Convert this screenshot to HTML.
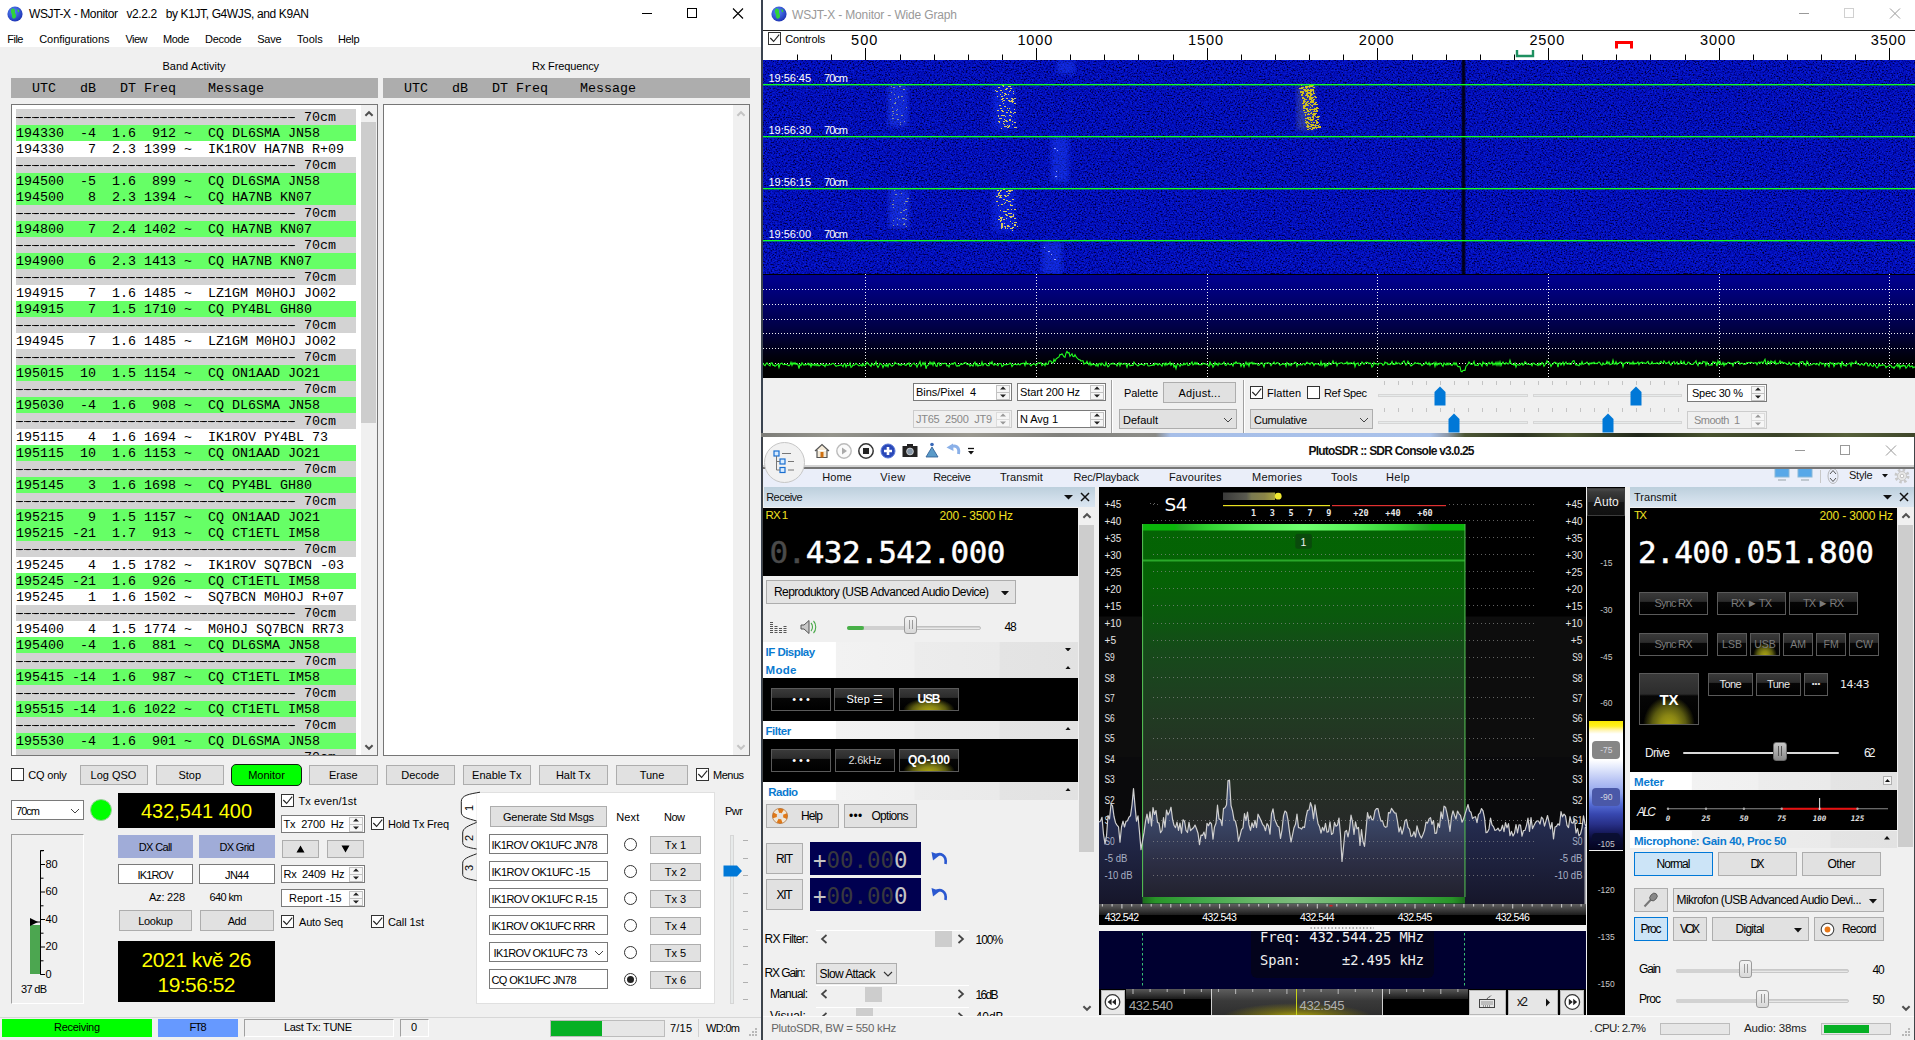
<!DOCTYPE html><html><head><meta charset="utf-8"><title>WSJT-X / SDR Console</title><style>html,body{margin:0;padding:0;background:#1a2a1a;}
#root{position:relative;width:1915px;height:1040px;overflow:hidden;background:#6b7a5a;font-family:"Liberation Sans",sans-serif;}
#root div,#root svg{position:absolute;}
.t{white-space:pre;}
.mono{font-family:"Liberation Mono",monospace;}
</style></head><body><div id="root">
<div style="left:0px;top:0px;width:761px;height:1040px;background:#f0f0f0;"></div>
<div style="left:0px;top:0px;width:761px;height:47px;background:#fff;"></div>
<svg style="left:7px;top:6px" width="16" height="16" viewBox="0 0 16 16"><defs><radialGradient id="gl7" cx="0.4" cy="0.35" r="0.7"><stop offset="0" stop-color="#5a8cff"/><stop offset="1" stop-color="#1a2fb0"/></radialGradient></defs><circle cx="8" cy="8" r="7.6" fill="url(#gl7)"/><path d="M5 2.5 C7 2 8.5 3.5 8 5.5 C7.5 7.5 9.5 8 9 10.5 C8.6 12.5 6.5 13.5 5.5 12 C4.5 10.5 5.5 9 4.5 7.5 C3.6 6 3.5 3.5 5 2.5Z" fill="#2fd23a"/><path d="M10.5 3 C12 3.5 12.8 5 12 6 C11.2 6.8 10.3 5.5 10.5 3Z" fill="#2fd23a"/></svg>
<div class="t" style="left:29.00px;top:6.00px;line-height:16px;font-size:12px;color:#000;font-family:'Liberation Sans',sans-serif;letter-spacing:-0.381px;">WSJT-X - Monitor   v2.2.2   by K1JT, G4WJS, and K9AN</div>
<svg style="left:630px;top:0" width="131" height="30"><path d="M12 13.5 H22" stroke="#000" stroke-width="1" fill="none"/><rect x="57.5" y="8.5" width="9" height="9" fill="none" stroke="#000" stroke-width="1"/><path d="M103 8.5 L113 18.5 M113 8.5 L103 18.5" stroke="#000" stroke-width="1.1" fill="none"/></svg>
<div class="t" style="left:7.30px;top:32.20px;line-height:14px;font-size:11px;color:#000;font-family:'Liberation Sans',sans-serif;letter-spacing:-0.542px;">File</div>
<div class="t" style="left:39.20px;top:32.20px;line-height:14px;font-size:11px;color:#000;font-family:'Liberation Sans',sans-serif;letter-spacing:-0.049px;">Configurations</div>
<div class="t" style="left:125.60px;top:32.20px;line-height:14px;font-size:11px;color:#000;font-family:'Liberation Sans',sans-serif;letter-spacing:-0.615px;">View</div>
<div class="t" style="left:163.00px;top:32.20px;line-height:14px;font-size:11px;color:#000;font-family:'Liberation Sans',sans-serif;letter-spacing:-0.372px;">Mode</div>
<div class="t" style="left:205.00px;top:32.20px;line-height:14px;font-size:11px;color:#000;font-family:'Liberation Sans',sans-serif;letter-spacing:-0.283px;">Decode</div>
<div class="t" style="left:257.30px;top:32.20px;line-height:14px;font-size:11px;color:#000;font-family:'Liberation Sans',sans-serif;letter-spacing:-0.291px;">Save</div>
<div class="t" style="left:297.00px;top:32.20px;line-height:14px;font-size:11px;color:#000;font-family:'Liberation Sans',sans-serif;letter-spacing:0.005px;">Tools</div>
<div class="t" style="left:338.00px;top:32.20px;line-height:14px;font-size:11px;color:#000;font-family:'Liberation Sans',sans-serif;letter-spacing:-0.374px;">Help</div>
<div class="t" style="left:162.50px;top:59.00px;line-height:14px;font-size:11px;color:#000;font-family:'Liberation Sans',sans-serif;letter-spacing:0.002px;">Band Activity</div>
<div class="t" style="left:532.00px;top:59.00px;line-height:14px;font-size:11px;color:#000;font-family:'Liberation Sans',sans-serif;letter-spacing:-0.134px;">Rx Frequency</div>
<div style="left:11px;top:78px;width:367px;height:20px;background:#adadad;"></div>
<div class="t mono" style="left:16px;top:81px;line-height:16px;font-size:13.33px;color:#000;">  UTC   dB   DT Freq    Message</div>
<div style="left:383px;top:78px;width:367px;height:20px;background:#adadad;"></div>
<div class="t mono" style="left:388px;top:81px;line-height:16px;font-size:13.33px;color:#000;">  UTC   dB   DT Freq    Message</div>
<div style="left:11px;top:104px;width:367px;height:652px;background:#fff;border:1px solid #767676;box-sizing:border-box;"></div>
<div style="left:383px;top:104px;width:367px;height:652px;background:#fff;border:1px solid #767676;box-sizing:border-box;"></div>
<div style="left:12px;top:105px;width:348px;height:650px;overflow:hidden;">
<div class="t mono" style="left:4px;top:4px;width:340px;height:16px;line-height:17px;font-size:13.33px;background:repeating-linear-gradient(90deg,#2a2a2a 0,#2a2a2a 7.2px,transparent 7.2px,transparent 8px) no-repeat 0.4px 8px / 279.4px 1px, #d3d3d3;color:#000;">----------------------------------- 70cm</div>
<div class="t mono" style="left:4px;top:20px;width:340px;height:16px;line-height:17px;font-size:13.33px;background:#66ff66;color:#000;">194330  -4  1.6  912 ~  CQ DL6SMA JN58</div>
<div class="t mono" style="left:4px;top:36px;width:340px;height:16px;line-height:17px;font-size:13.33px;background:#fff;color:#000;">194330   7  2.3 1399 ~  IK1ROV HA7NB R+09</div>
<div class="t mono" style="left:4px;top:52px;width:340px;height:16px;line-height:17px;font-size:13.33px;background:repeating-linear-gradient(90deg,#2a2a2a 0,#2a2a2a 7.2px,transparent 7.2px,transparent 8px) no-repeat 0.4px 8px / 279.4px 1px, #d3d3d3;color:#000;">----------------------------------- 70cm</div>
<div class="t mono" style="left:4px;top:68px;width:340px;height:16px;line-height:17px;font-size:13.33px;background:#66ff66;color:#000;">194500  -5  1.6  899 ~  CQ DL6SMA JN58</div>
<div class="t mono" style="left:4px;top:84px;width:340px;height:16px;line-height:17px;font-size:13.33px;background:#66ff66;color:#000;">194500   8  2.3 1394 ~  CQ HA7NB KN07</div>
<div class="t mono" style="left:4px;top:100px;width:340px;height:16px;line-height:17px;font-size:13.33px;background:repeating-linear-gradient(90deg,#2a2a2a 0,#2a2a2a 7.2px,transparent 7.2px,transparent 8px) no-repeat 0.4px 8px / 279.4px 1px, #d3d3d3;color:#000;">----------------------------------- 70cm</div>
<div class="t mono" style="left:4px;top:116px;width:340px;height:16px;line-height:17px;font-size:13.33px;background:#66ff66;color:#000;">194800   7  2.4 1402 ~  CQ HA7NB KN07</div>
<div class="t mono" style="left:4px;top:132px;width:340px;height:16px;line-height:17px;font-size:13.33px;background:repeating-linear-gradient(90deg,#2a2a2a 0,#2a2a2a 7.2px,transparent 7.2px,transparent 8px) no-repeat 0.4px 8px / 279.4px 1px, #d3d3d3;color:#000;">----------------------------------- 70cm</div>
<div class="t mono" style="left:4px;top:148px;width:340px;height:16px;line-height:17px;font-size:13.33px;background:#66ff66;color:#000;">194900   6  2.3 1413 ~  CQ HA7NB KN07</div>
<div class="t mono" style="left:4px;top:164px;width:340px;height:16px;line-height:17px;font-size:13.33px;background:repeating-linear-gradient(90deg,#2a2a2a 0,#2a2a2a 7.2px,transparent 7.2px,transparent 8px) no-repeat 0.4px 8px / 279.4px 1px, #d3d3d3;color:#000;">----------------------------------- 70cm</div>
<div class="t mono" style="left:4px;top:180px;width:340px;height:16px;line-height:17px;font-size:13.33px;background:#fff;color:#000;">194915   7  1.6 1485 ~  LZ1GM M0HOJ JO02</div>
<div class="t mono" style="left:4px;top:196px;width:340px;height:16px;line-height:17px;font-size:13.33px;background:#66ff66;color:#000;">194915   7  1.5 1710 ~  CQ PY4BL GH80</div>
<div class="t mono" style="left:4px;top:212px;width:340px;height:16px;line-height:17px;font-size:13.33px;background:repeating-linear-gradient(90deg,#2a2a2a 0,#2a2a2a 7.2px,transparent 7.2px,transparent 8px) no-repeat 0.4px 8px / 279.4px 1px, #d3d3d3;color:#000;">----------------------------------- 70cm</div>
<div class="t mono" style="left:4px;top:228px;width:340px;height:16px;line-height:17px;font-size:13.33px;background:#fff;color:#000;">194945   7  1.6 1485 ~  LZ1GM M0HOJ JO02</div>
<div class="t mono" style="left:4px;top:244px;width:340px;height:16px;line-height:17px;font-size:13.33px;background:repeating-linear-gradient(90deg,#2a2a2a 0,#2a2a2a 7.2px,transparent 7.2px,transparent 8px) no-repeat 0.4px 8px / 279.4px 1px, #d3d3d3;color:#000;">----------------------------------- 70cm</div>
<div class="t mono" style="left:4px;top:260px;width:340px;height:16px;line-height:17px;font-size:13.33px;background:#66ff66;color:#000;">195015  10  1.5 1154 ~  CQ ON1AAD JO21</div>
<div class="t mono" style="left:4px;top:276px;width:340px;height:16px;line-height:17px;font-size:13.33px;background:repeating-linear-gradient(90deg,#2a2a2a 0,#2a2a2a 7.2px,transparent 7.2px,transparent 8px) no-repeat 0.4px 8px / 279.4px 1px, #d3d3d3;color:#000;">----------------------------------- 70cm</div>
<div class="t mono" style="left:4px;top:292px;width:340px;height:16px;line-height:17px;font-size:13.33px;background:#66ff66;color:#000;">195030  -4  1.6  908 ~  CQ DL6SMA JN58</div>
<div class="t mono" style="left:4px;top:308px;width:340px;height:16px;line-height:17px;font-size:13.33px;background:repeating-linear-gradient(90deg,#2a2a2a 0,#2a2a2a 7.2px,transparent 7.2px,transparent 8px) no-repeat 0.4px 8px / 279.4px 1px, #d3d3d3;color:#000;">----------------------------------- 70cm</div>
<div class="t mono" style="left:4px;top:324px;width:340px;height:16px;line-height:17px;font-size:13.33px;background:#fff;color:#000;">195115   4  1.6 1694 ~  IK1ROV PY4BL 73</div>
<div class="t mono" style="left:4px;top:340px;width:340px;height:16px;line-height:17px;font-size:13.33px;background:#66ff66;color:#000;">195115  10  1.6 1153 ~  CQ ON1AAD JO21</div>
<div class="t mono" style="left:4px;top:356px;width:340px;height:16px;line-height:17px;font-size:13.33px;background:repeating-linear-gradient(90deg,#2a2a2a 0,#2a2a2a 7.2px,transparent 7.2px,transparent 8px) no-repeat 0.4px 8px / 279.4px 1px, #d3d3d3;color:#000;">----------------------------------- 70cm</div>
<div class="t mono" style="left:4px;top:372px;width:340px;height:16px;line-height:17px;font-size:13.33px;background:#66ff66;color:#000;">195145   3  1.6 1698 ~  CQ PY4BL GH80</div>
<div class="t mono" style="left:4px;top:388px;width:340px;height:16px;line-height:17px;font-size:13.33px;background:repeating-linear-gradient(90deg,#2a2a2a 0,#2a2a2a 7.2px,transparent 7.2px,transparent 8px) no-repeat 0.4px 8px / 279.4px 1px, #d3d3d3;color:#000;">----------------------------------- 70cm</div>
<div class="t mono" style="left:4px;top:404px;width:340px;height:16px;line-height:17px;font-size:13.33px;background:#66ff66;color:#000;">195215   9  1.5 1157 ~  CQ ON1AAD JO21</div>
<div class="t mono" style="left:4px;top:420px;width:340px;height:16px;line-height:17px;font-size:13.33px;background:#66ff66;color:#000;">195215 -21  1.7  913 ~  CQ CT1ETL IM58</div>
<div class="t mono" style="left:4px;top:436px;width:340px;height:16px;line-height:17px;font-size:13.33px;background:repeating-linear-gradient(90deg,#2a2a2a 0,#2a2a2a 7.2px,transparent 7.2px,transparent 8px) no-repeat 0.4px 8px / 279.4px 1px, #d3d3d3;color:#000;">----------------------------------- 70cm</div>
<div class="t mono" style="left:4px;top:452px;width:340px;height:16px;line-height:17px;font-size:13.33px;background:#fff;color:#000;">195245   4  1.5 1782 ~  IK1ROV SQ7BCN -03</div>
<div class="t mono" style="left:4px;top:468px;width:340px;height:16px;line-height:17px;font-size:13.33px;background:#66ff66;color:#000;">195245 -21  1.6  926 ~  CQ CT1ETL IM58</div>
<div class="t mono" style="left:4px;top:484px;width:340px;height:16px;line-height:17px;font-size:13.33px;background:#fff;color:#000;">195245   1  1.6 1502 ~  SQ7BCN M0HOJ R+07</div>
<div class="t mono" style="left:4px;top:500px;width:340px;height:16px;line-height:17px;font-size:13.33px;background:repeating-linear-gradient(90deg,#2a2a2a 0,#2a2a2a 7.2px,transparent 7.2px,transparent 8px) no-repeat 0.4px 8px / 279.4px 1px, #d3d3d3;color:#000;">----------------------------------- 70cm</div>
<div class="t mono" style="left:4px;top:516px;width:340px;height:16px;line-height:17px;font-size:13.33px;background:#fff;color:#000;">195400   4  1.5 1774 ~  M0HOJ SQ7BCN RR73</div>
<div class="t mono" style="left:4px;top:532px;width:340px;height:16px;line-height:17px;font-size:13.33px;background:#66ff66;color:#000;">195400  -4  1.6  881 ~  CQ DL6SMA JN58</div>
<div class="t mono" style="left:4px;top:548px;width:340px;height:16px;line-height:17px;font-size:13.33px;background:repeating-linear-gradient(90deg,#2a2a2a 0,#2a2a2a 7.2px,transparent 7.2px,transparent 8px) no-repeat 0.4px 8px / 279.4px 1px, #d3d3d3;color:#000;">----------------------------------- 70cm</div>
<div class="t mono" style="left:4px;top:564px;width:340px;height:16px;line-height:17px;font-size:13.33px;background:#66ff66;color:#000;">195415 -14  1.6  987 ~  CQ CT1ETL IM58</div>
<div class="t mono" style="left:4px;top:580px;width:340px;height:16px;line-height:17px;font-size:13.33px;background:repeating-linear-gradient(90deg,#2a2a2a 0,#2a2a2a 7.2px,transparent 7.2px,transparent 8px) no-repeat 0.4px 8px / 279.4px 1px, #d3d3d3;color:#000;">----------------------------------- 70cm</div>
<div class="t mono" style="left:4px;top:596px;width:340px;height:16px;line-height:17px;font-size:13.33px;background:#66ff66;color:#000;">195515 -14  1.6 1022 ~  CQ CT1ETL IM58</div>
<div class="t mono" style="left:4px;top:612px;width:340px;height:16px;line-height:17px;font-size:13.33px;background:repeating-linear-gradient(90deg,#2a2a2a 0,#2a2a2a 7.2px,transparent 7.2px,transparent 8px) no-repeat 0.4px 8px / 279.4px 1px, #d3d3d3;color:#000;">----------------------------------- 70cm</div>
<div class="t mono" style="left:4px;top:628px;width:340px;height:16px;line-height:17px;font-size:13.33px;background:#66ff66;color:#000;">195530  -4  1.6  901 ~  CQ DL6SMA JN58</div>
<div class="t mono" style="left:4px;top:644px;width:340px;height:16px;line-height:17px;font-size:13.33px;background:repeating-linear-gradient(90deg,#2a2a2a 0,#2a2a2a 7.2px,transparent 7.2px,transparent 8px) no-repeat 0.4px 8px / 279.4px 1px, #d3d3d3;color:#000;">----------------------------------- 70cm</div>
</div>
<div style="left:361px;top:105px;width:16px;height:650px;background:#f0f0f0;"></div>
<div style="left:361px;top:122px;width:15px;height:301px;background:#cdcdcd;"></div>
<svg style="left:362.5px;top:108.5px" width="12" height="10"><path d="M2.4 6.8 L6 3.2 L9.6 6.8" fill="none" stroke="#505050" stroke-width="2.0"/></svg>
<svg style="left:362.5px;top:742px" width="12" height="10"><path d="M2.4 3.2 L6 6.8 L9.6 3.2" fill="none" stroke="#505050" stroke-width="2.0"/></svg>
<div style="left:733px;top:105px;width:16px;height:650px;background:#f0f0f0;"></div>
<svg style="left:735px;top:108.5px" width="12" height="10"><path d="M2.4 6.8 L6 3.2 L9.6 6.8" fill="none" stroke="#c4c4c4" stroke-width="2.0"/></svg>
<svg style="left:735px;top:742px" width="12" height="10"><path d="M2.4 3.2 L6 6.8 L9.6 3.2" fill="none" stroke="#c4c4c4" stroke-width="2.0"/></svg>
<div style="left:11px;top:768px;width:13px;height:13px;background:#fff;border:1px solid #333;box-sizing:border-box;"></div>
<div class="t" style="left:28.30px;top:768.00px;line-height:14px;font-size:11px;color:#000;font-family:'Liberation Sans',sans-serif;letter-spacing:-0.206px;">CQ only</div>
<div style="left:79.5px;top:765px;width:68px;height:20px;background:#e1e1e1;border:1px solid #adadad;box-sizing:border-box;"></div>
<div class="t" style="left:90.57px;top:768.00px;line-height:14px;font-size:11px;color:#000;font-family:'Liberation Sans',sans-serif;">Log QSO</div>
<div style="left:156px;top:765px;width:67.5px;height:20px;background:#e1e1e1;border:1px solid #adadad;box-sizing:border-box;"></div>
<div class="t" style="left:178.44px;top:768.00px;line-height:14px;font-size:11px;color:#000;font-family:'Liberation Sans',sans-serif;">Stop</div>
<div style="left:231px;top:764px;width:71px;height:22px;background:#00ff00;border:1px solid #102010;border-radius:5px;box-sizing:border-box;"></div>
<div class="t" style="left:248.16px;top:768.00px;line-height:14px;font-size:11px;color:#000;font-family:'Liberation Sans',sans-serif;">Monitor</div>
<div style="left:309px;top:765px;width:68.5px;height:20px;background:#e1e1e1;border:1px solid #adadad;box-sizing:border-box;"></div>
<div class="t" style="left:328.88px;top:768.00px;line-height:14px;font-size:11px;color:#000;font-family:'Liberation Sans',sans-serif;">Erase</div>
<div style="left:386px;top:765px;width:68.5px;height:20px;background:#e1e1e1;border:1px solid #adadad;box-sizing:border-box;"></div>
<div class="t" style="left:401.29px;top:768.00px;line-height:14px;font-size:11px;color:#000;font-family:'Liberation Sans',sans-serif;">Decode</div>
<div style="left:463px;top:765px;width:67.5px;height:20px;background:#e1e1e1;border:1px solid #adadad;box-sizing:border-box;"></div>
<div class="t" style="left:472.09px;top:768.00px;line-height:14px;font-size:11px;color:#000;font-family:'Liberation Sans',sans-serif;">Enable Tx</div>
<div style="left:539px;top:765px;width:68.5px;height:20px;background:#e1e1e1;border:1px solid #adadad;box-sizing:border-box;"></div>
<div class="t" style="left:555.93px;top:768.00px;line-height:14px;font-size:11px;color:#000;font-family:'Liberation Sans',sans-serif;">Halt Tx</div>
<div style="left:616px;top:765px;width:72px;height:20px;background:#e1e1e1;border:1px solid #adadad;box-sizing:border-box;"></div>
<div class="t" style="left:639.67px;top:768.00px;line-height:14px;font-size:11px;color:#000;font-family:'Liberation Sans',sans-serif;">Tune</div>
<div style="left:696px;top:768px;width:13px;height:13px;background:#fff;border:1px solid #333;box-sizing:border-box;"></div>
<svg style="left:696px;top:768px" width="13" height="13" viewBox="0 0 13 13"><path d="M2.3 6 L5.6 9.5 L11.2 2.7" fill="none" stroke="#222" stroke-width="1.15"/></svg>
<div class="t" style="left:713.00px;top:768.00px;line-height:14px;font-size:11px;color:#000;font-family:'Liberation Sans',sans-serif;letter-spacing:-0.504px;">Menus</div>
<div style="left:11px;top:800px;width:73px;height:20px;background:#fff;border:1px solid #7a7a7a;box-sizing:border-box;"></div>
<div class="t" style="left:16.00px;top:803.50px;line-height:14px;font-size:11px;color:#000;font-family:'Liberation Sans',sans-serif;letter-spacing:-0.966px;">70cm</div>
<svg style="left:69px;top:806px" width="12" height="10"><path d="M2.0 3.0 L6 7.0 L10.0 3.0" fill="none" stroke="#444" stroke-width="1.0"/></svg>
<div style="left:90px;top:799px;width:22px;height:22px;background:#00ff00;border-radius:50%;border:1px solid #9ad09a;box-sizing:border-box;"></div>
<div style="left:118px;top:793px;width:157px;height:35px;background:#000;"></div>
<div class="t" style="left:141.00px;top:798.00px;line-height:26px;font-size:20px;color:#ffff00;font-family:'Liberation Sans',sans-serif;letter-spacing:-0.022px;">432,541 400</div>
<div style="left:118px;top:835px;width:75px;height:23px;background:#a0acd8;"></div>
<div class="t" style="left:138.75px;top:839.50px;line-height:14px;font-size:11px;color:#000;font-family:'Liberation Sans',sans-serif;letter-spacing:-0.631px;">DX Call</div>
<div style="left:199px;top:835px;width:76px;height:23px;background:#a0acd8;"></div>
<div class="t" style="left:219.50px;top:839.50px;line-height:14px;font-size:11px;color:#000;font-family:'Liberation Sans',sans-serif;letter-spacing:-0.686px;">DX Grid</div>
<div style="left:118px;top:864px;width:75px;height:20px;background:#fff;border:1px solid #7a7a7a;box-sizing:border-box;"></div>
<div class="t" style="left:137.50px;top:867.50px;line-height:14px;font-size:11px;color:#000;font-family:'Liberation Sans',sans-serif;letter-spacing:-0.870px;">IK1ROV</div>
<div style="left:199px;top:864px;width:76px;height:20px;background:#fff;border:1px solid #7a7a7a;box-sizing:border-box;"></div>
<div class="t" style="left:225.00px;top:867.50px;line-height:14px;font-size:11px;color:#000;font-family:'Liberation Sans',sans-serif;letter-spacing:-0.560px;">JN44</div>
<div class="t" style="left:149.00px;top:890.00px;line-height:14px;font-size:11px;color:#000;font-family:'Liberation Sans',sans-serif;letter-spacing:-0.217px;">Az: 228</div>
<div class="t" style="left:209.50px;top:890.00px;line-height:14px;font-size:11px;color:#000;font-family:'Liberation Sans',sans-serif;letter-spacing:-0.614px;">640 km</div>
<div style="left:119px;top:910px;width:73px;height:21px;background:#e1e1e1;border:1px solid #adadad;box-sizing:border-box;"></div>
<div class="t" style="left:138.25px;top:913.50px;line-height:14px;font-size:11px;color:#000;font-family:'Liberation Sans',sans-serif;letter-spacing:-0.318px;">Lookup</div>
<div style="left:200px;top:910px;width:74px;height:21px;background:#e1e1e1;border:1px solid #adadad;box-sizing:border-box;"></div>
<div class="t" style="left:227.75px;top:913.50px;line-height:14px;font-size:11px;color:#000;font-family:'Liberation Sans',sans-serif;letter-spacing:-0.536px;">Add</div>
<div style="left:118px;top:941px;width:157px;height:61px;background:#000;"></div>
<div class="t" style="left:141.50px;top:946.00px;line-height:27px;font-size:21px;color:#ffff00;font-family:'Liberation Sans',sans-serif;letter-spacing:-0.442px;">2021 kvě 26</div>
<div class="t" style="left:157.50px;top:971.00px;line-height:27px;font-size:21px;color:#ffff00;font-family:'Liberation Sans',sans-serif;letter-spacing:-0.535px;">19:56:52</div>
<div style="left:11px;top:834px;width:73px;height:170px;background:#f0f0f0;border:1px solid;border-color:#a0a0a0 #fff #fff #a0a0a0;box-sizing:border-box;"></div>
<div style="left:30px;top:925px;width:10.5px;height:49px;background:#4ca650;"></div>
<svg style="left:11px;top:834px" width="73" height="170"><path d="M33 16.5 H29.5 V140.5 H33" stroke="#000" fill="none"/><path d="M29.5 140.5 h4.5" stroke="#000"/><path d="M29.5 126.8 h3" stroke="#000"/><path d="M29.5 113.0 h4.5" stroke="#000"/><path d="M29.5 99.2 h3" stroke="#000"/><path d="M29.5 85.5 h4.5" stroke="#000"/><path d="M29.5 71.8 h3" stroke="#000"/><path d="M29.5 58.0 h4.5" stroke="#000"/><path d="M29.5 44.2 h3" stroke="#000"/><path d="M29.5 30.5 h4.5" stroke="#000"/><path d="M29.5 16.8 h3" stroke="#000"/><path d="M19 84 L27 88 L19 92Z" fill="#000"/><path d="M19 88 H29" stroke="#000"/></svg>
<div class="t" style="left:45.50px;top:966.50px;line-height:14px;font-size:11px;color:#000;font-family:'Liberation Sans',sans-serif;">0</div>
<div class="t" style="left:45.50px;top:939.00px;line-height:14px;font-size:11px;color:#000;font-family:'Liberation Sans',sans-serif;">20</div>
<div class="t" style="left:45.50px;top:911.50px;line-height:14px;font-size:11px;color:#000;font-family:'Liberation Sans',sans-serif;">40</div>
<div class="t" style="left:45.50px;top:884.00px;line-height:14px;font-size:11px;color:#000;font-family:'Liberation Sans',sans-serif;">60</div>
<div class="t" style="left:45.50px;top:856.50px;line-height:14px;font-size:11px;color:#000;font-family:'Liberation Sans',sans-serif;">80</div>
<div class="t" style="left:21.00px;top:981.50px;line-height:14px;font-size:11px;color:#000;font-family:'Liberation Sans',sans-serif;letter-spacing:-0.687px;">37 dB</div>
<div style="left:281px;top:794px;width:13px;height:13px;background:#fff;border:1px solid #333;box-sizing:border-box;"></div>
<svg style="left:281px;top:794px" width="13" height="13" viewBox="0 0 13 13"><path d="M2.3 6 L5.6 9.5 L11.2 2.7" fill="none" stroke="#222" stroke-width="1.15"/></svg>
<div class="t" style="left:298.50px;top:794.00px;line-height:14px;font-size:11px;color:#000;font-family:'Liberation Sans',sans-serif;letter-spacing:0.114px;">Tx even/1st</div>
<div style="left:281px;top:815px;width:84px;height:18px;background:#fff;border:1px solid #7a7a7a;box-sizing:border-box;"></div>
<div class="t" style="left:283.50px;top:817.00px;line-height:14px;font-size:11px;color:#000;font-family:'Liberation Sans',sans-serif;letter-spacing:-0.169px;">Tx  2700  Hz</div>
<div style="left:348.5px;top:816.5px;width:14.5px;height:15px;background:#f6f6f6;border:1px solid #c2c2c2;box-sizing:border-box;"></div>
<div style="left:349.5px;top:823.5px;width:12.5px;height:1px;background:#c2c2c2;"></div>
<svg style="left:348px;top:815px" width="16" height="18"><path d="M5 6.6 L8 3.5999999999999996 L11 6.6Z M5 11.4 L8 14.4 L11 11.4Z" fill="#222"/></svg>
<div style="left:371px;top:817px;width:13px;height:13px;background:#fff;border:1px solid #333;box-sizing:border-box;"></div>
<svg style="left:371px;top:817px" width="13" height="13" viewBox="0 0 13 13"><path d="M2.3 6 L5.6 9.5 L11.2 2.7" fill="none" stroke="#222" stroke-width="1.15"/></svg>
<div class="t" style="left:388.00px;top:816.60px;line-height:14px;font-size:11px;color:#000;font-family:'Liberation Sans',sans-serif;letter-spacing:-0.216px;">Hold Tx Freq</div>
<div style="left:282px;top:840px;width:37px;height:18px;background:#e1e1e1;border:1px solid #adadad;box-sizing:border-box;"></div>
<div style="left:327px;top:840px;width:37px;height:18px;background:#e1e1e1;border:1px solid #adadad;box-sizing:border-box;"></div>
<svg style="left:282px;top:840px" width="82" height="18"><path d="M14.5 12.5 L18.5 5.5 L22.5 12.5Z M59.5 5.5 L63.5 12.5 L67.5 5.5Z" fill="#000"/></svg>
<div style="left:281px;top:865px;width:84px;height:18px;background:#fff;border:1px solid #7a7a7a;box-sizing:border-box;"></div>
<div class="t" style="left:283.50px;top:867.00px;line-height:14px;font-size:11px;color:#000;font-family:'Liberation Sans',sans-serif;letter-spacing:-0.235px;">Rx  2409  Hz</div>
<div style="left:348.5px;top:866.5px;width:14.5px;height:15px;background:#f6f6f6;border:1px solid #c2c2c2;box-sizing:border-box;"></div>
<div style="left:349.5px;top:873.5px;width:12.5px;height:1px;background:#c2c2c2;"></div>
<svg style="left:348px;top:865px" width="16" height="18"><path d="M5 6.6 L8 3.5999999999999996 L11 6.6Z M5 11.4 L8 14.4 L11 11.4Z" fill="#222"/></svg>
<div style="left:281px;top:889px;width:84px;height:18px;background:#fff;border:1px solid #7a7a7a;box-sizing:border-box;"></div>
<div class="t" style="left:289.00px;top:891.00px;line-height:14px;font-size:11px;color:#000;font-family:'Liberation Sans',sans-serif;letter-spacing:0.059px;">Report -15</div>
<div style="left:348.5px;top:890.5px;width:14.5px;height:15px;background:#f6f6f6;border:1px solid #c2c2c2;box-sizing:border-box;"></div>
<div style="left:349.5px;top:897.5px;width:12.5px;height:1px;background:#c2c2c2;"></div>
<svg style="left:348px;top:889px" width="16" height="18"><path d="M5 6.6 L8 3.5999999999999996 L11 6.6Z M5 11.4 L8 14.4 L11 11.4Z" fill="#222"/></svg>
<div style="left:281px;top:915px;width:13px;height:13px;background:#fff;border:1px solid #333;box-sizing:border-box;"></div>
<svg style="left:281px;top:915px" width="13" height="13" viewBox="0 0 13 13"><path d="M2.3 6 L5.6 9.5 L11.2 2.7" fill="none" stroke="#222" stroke-width="1.15"/></svg>
<div class="t" style="left:299.00px;top:915.00px;line-height:14px;font-size:11px;color:#000;font-family:'Liberation Sans',sans-serif;letter-spacing:-0.180px;">Auto Seq</div>
<div style="left:371px;top:915px;width:13px;height:13px;background:#fff;border:1px solid #333;box-sizing:border-box;"></div>
<svg style="left:371px;top:915px" width="13" height="13" viewBox="0 0 13 13"><path d="M2.3 6 L5.6 9.5 L11.2 2.7" fill="none" stroke="#222" stroke-width="1.15"/></svg>
<div class="t" style="left:388.00px;top:915.00px;line-height:14px;font-size:11px;color:#000;font-family:'Liberation Sans',sans-serif;letter-spacing:-0.097px;">Call 1st</div>
<div style="left:476px;top:792px;width:239px;height:212px;background:#fff;border:1px solid #e0e0e0;box-sizing:border-box;"></div>
<svg style="left:458px;top:790px" width="22" height="94"><path d="M22 2.2 C12 4 3.3 5 3.3 11.5 V22 C3.3 27.5 10 28.5 18.6 31 V2.2Z" fill="#fff" stroke="none"/><path d="M22 2.2 C12 4 3.3 5 3.3 11.5 V22 C3.3 27.5 10 28.5 18.6 31" fill="none" stroke="#222" stroke-width="1"/><path d="M18.6 32.4 C10 36 4.7 38 4.7 43 V52.5 C4.7 56.5 10 57.5 18.6 59" fill="none" stroke="#222" stroke-width="1"/><path d="M18.6 63.8 C10 67 4.7 69 4.7 73.2 V84.3 C4.7 88 10 89 18.6 90.6" fill="none" stroke="#222" stroke-width="1"/></svg>
<div class="t" style="left:463px;top:801.7px;width:12px;height:12px;line-height:12px;font-size:11px;text-align:center;transform:rotate(-90deg);font-family:'Liberation Sans',sans-serif">1</div>
<div class="t" style="left:463px;top:831.7px;width:12px;height:12px;line-height:12px;font-size:11px;text-align:center;transform:rotate(-90deg);font-family:'Liberation Sans',sans-serif">2</div>
<div class="t" style="left:463px;top:861.7px;width:12px;height:12px;line-height:12px;font-size:11px;text-align:center;transform:rotate(-90deg);font-family:'Liberation Sans',sans-serif">3</div>
<div style="left:490px;top:806px;width:117px;height:21px;background:#e1e1e1;border:1px solid #adadad;box-sizing:border-box;"></div>
<div class="t" style="left:503.00px;top:809.50px;line-height:14px;font-size:11px;color:#000;font-family:'Liberation Sans',sans-serif;letter-spacing:-0.235px;">Generate Std Msgs</div>
<div class="t" style="left:616.20px;top:810.00px;line-height:14px;font-size:11px;color:#000;font-family:'Liberation Sans',sans-serif;letter-spacing:0.127px;">Next</div>
<div class="t" style="left:664.00px;top:810.00px;line-height:14px;font-size:11px;color:#000;font-family:'Liberation Sans',sans-serif;letter-spacing:-0.503px;">Now</div>
<div style="left:489px;top:834px;width:119px;height:20px;background:#fff;border:1px solid #7a7a7a;box-sizing:border-box;"></div>
<div class="t" style="left:491.50px;top:837.50px;line-height:14px;font-size:11px;color:#000;font-family:'Liberation Sans',sans-serif;letter-spacing:-0.633px;">IK1ROV OK1UFC JN78</div>
<div style="left:623.8px;top:838px;width:13px;height:13px;background:#fff;border:1px solid #333;border-radius:50%;box-sizing:border-box;"></div>
<div style="left:650px;top:835.5px;width:51px;height:18px;background:#e1e1e1;border:1px solid #adadad;box-sizing:border-box;"></div>
<div class="t" style="left:664.80px;top:837.50px;line-height:14px;font-size:11px;color:#000;font-family:'Liberation Sans',sans-serif;">Tx 1</div>
<div style="left:489px;top:861px;width:119px;height:20px;background:#fff;border:1px solid #7a7a7a;box-sizing:border-box;"></div>
<div class="t" style="left:491.50px;top:864.50px;line-height:14px;font-size:11px;color:#000;font-family:'Liberation Sans',sans-serif;letter-spacing:-0.499px;">IK1ROV OK1UFC -15</div>
<div style="left:623.8px;top:865px;width:13px;height:13px;background:#fff;border:1px solid #333;border-radius:50%;box-sizing:border-box;"></div>
<div style="left:650px;top:862.5px;width:51px;height:18px;background:#e1e1e1;border:1px solid #adadad;box-sizing:border-box;"></div>
<div class="t" style="left:664.80px;top:864.50px;line-height:14px;font-size:11px;color:#000;font-family:'Liberation Sans',sans-serif;">Tx 2</div>
<div style="left:489px;top:888px;width:119px;height:20px;background:#fff;border:1px solid #7a7a7a;box-sizing:border-box;"></div>
<div class="t" style="left:491.50px;top:891.50px;line-height:14px;font-size:11px;color:#000;font-family:'Liberation Sans',sans-serif;letter-spacing:-0.525px;">IK1ROV OK1UFC R-15</div>
<div style="left:623.8px;top:892px;width:13px;height:13px;background:#fff;border:1px solid #333;border-radius:50%;box-sizing:border-box;"></div>
<div style="left:650px;top:889.5px;width:51px;height:18px;background:#e1e1e1;border:1px solid #adadad;box-sizing:border-box;"></div>
<div class="t" style="left:664.80px;top:891.50px;line-height:14px;font-size:11px;color:#000;font-family:'Liberation Sans',sans-serif;">Tx 3</div>
<div style="left:489px;top:915px;width:119px;height:20px;background:#fff;border:1px solid #7a7a7a;box-sizing:border-box;"></div>
<div class="t" style="left:491.50px;top:918.50px;line-height:14px;font-size:11px;color:#000;font-family:'Liberation Sans',sans-serif;letter-spacing:-0.682px;">IK1ROV OK1UFC RRR</div>
<div style="left:623.8px;top:919px;width:13px;height:13px;background:#fff;border:1px solid #333;border-radius:50%;box-sizing:border-box;"></div>
<div style="left:650px;top:916.5px;width:51px;height:18px;background:#e1e1e1;border:1px solid #adadad;box-sizing:border-box;"></div>
<div class="t" style="left:664.80px;top:918.50px;line-height:14px;font-size:11px;color:#000;font-family:'Liberation Sans',sans-serif;">Tx 4</div>
<div style="left:489px;top:942px;width:119px;height:20px;background:#fff;border:1px solid #7a7a7a;box-sizing:border-box;"></div>
<div class="t" style="left:493.50px;top:945.50px;line-height:14px;font-size:11px;color:#000;font-family:'Liberation Sans',sans-serif;letter-spacing:-0.621px;">IK1ROV OK1UFC 73</div>
<svg style="left:593px;top:947.5px" width="12" height="10"><path d="M2.0 3.0 L6 7.0 L10.0 3.0" fill="none" stroke="#444" stroke-width="1.0"/></svg>
<div style="left:623.8px;top:946px;width:13px;height:13px;background:#fff;border:1px solid #333;border-radius:50%;box-sizing:border-box;"></div>
<div style="left:650px;top:943.5px;width:51px;height:18px;background:#e1e1e1;border:1px solid #adadad;box-sizing:border-box;"></div>
<div class="t" style="left:664.80px;top:945.50px;line-height:14px;font-size:11px;color:#000;font-family:'Liberation Sans',sans-serif;">Tx 5</div>
<div style="left:489px;top:969px;width:119px;height:20px;background:#fff;border:1px solid #7a7a7a;box-sizing:border-box;"></div>
<div class="t" style="left:491.50px;top:972.50px;line-height:14px;font-size:11px;color:#000;font-family:'Liberation Sans',sans-serif;letter-spacing:-0.608px;">CQ OK1UFC JN78</div>
<div style="left:623.8px;top:973px;width:13px;height:13px;background:#fff;border:1px solid #333;border-radius:50%;box-sizing:border-box;"></div>
<div style="left:626.8px;top:976px;width:7px;height:7px;background:#222;border-radius:50%;"></div>
<div style="left:650px;top:970.5px;width:51px;height:18px;background:#e1e1e1;border:1px solid #adadad;box-sizing:border-box;"></div>
<div class="t" style="left:664.80px;top:972.50px;line-height:14px;font-size:11px;color:#000;font-family:'Liberation Sans',sans-serif;">Tx 6</div>
<div class="t" style="left:725.00px;top:804.00px;line-height:14px;font-size:11px;color:#000;font-family:'Liberation Sans',sans-serif;letter-spacing:-0.472px;">Pwr</div>
<div style="left:730px;top:835px;width:4px;height:169px;background:#e7eaea;border:1px solid #d6d6d6;box-sizing:border-box;"></div>
<svg style="left:722px;top:864px" width="22" height="14"><path d="M1.5 1.5 H15 L20 7 L15 12.5 H1.5Z" fill="#0078d7"/></svg>
<div style="left:743px;top:840px;width:5px;height:1px;background:#b0b0b0;"></div>
<div style="left:743px;top:857.7px;width:5px;height:1px;background:#b0b0b0;"></div>
<div style="left:743px;top:875.4px;width:5px;height:1px;background:#b0b0b0;"></div>
<div style="left:743px;top:893.1px;width:5px;height:1px;background:#b0b0b0;"></div>
<div style="left:743px;top:910.8px;width:5px;height:1px;background:#b0b0b0;"></div>
<div style="left:743px;top:928.5px;width:5px;height:1px;background:#b0b0b0;"></div>
<div style="left:743px;top:946.2px;width:5px;height:1px;background:#b0b0b0;"></div>
<div style="left:743px;top:963.9px;width:5px;height:1px;background:#b0b0b0;"></div>
<div style="left:743px;top:981.6px;width:5px;height:1px;background:#b0b0b0;"></div>
<div style="left:743px;top:999.3px;width:5px;height:1px;background:#b0b0b0;"></div>
<div style="left:0px;top:1017px;width:761px;height:1px;background:#d7d7d7;"></div>
<div style="left:2px;top:1019px;width:150px;height:18px;background:#00ff00;"></div>
<div class="t" style="left:54.00px;top:1019.80px;line-height:14px;font-size:11px;color:#000;font-family:'Liberation Sans',sans-serif;letter-spacing:-0.288px;">Receiving</div>
<div style="left:158px;top:1019px;width:80px;height:18px;background:#6699ff;"></div>
<div class="t" style="left:189.50px;top:1019.80px;line-height:14px;font-size:11px;color:#000;font-family:'Liberation Sans',sans-serif;letter-spacing:-1.278px;">FT8</div>
<div style="left:244px;top:1019px;width:150px;height:18px;background:#f0f0f0;border:1px solid;border-color:#a0a0a0 #fff #fff #a0a0a0;box-sizing:border-box;"></div>
<div class="t" style="left:284.00px;top:1019.80px;line-height:14px;font-size:11px;color:#000;font-family:'Liberation Sans',sans-serif;letter-spacing:-0.310px;">Last Tx: TUNE</div>
<div style="left:400px;top:1019px;width:29px;height:18px;background:#f0f0f0;border:1px solid;border-color:#a0a0a0 #fff #fff #a0a0a0;box-sizing:border-box;"></div>
<div class="t" style="left:410.94px;top:1019.80px;line-height:14px;font-size:11px;color:#000;font-family:'Liberation Sans',sans-serif;">0</div>
<div style="left:550px;top:1020px;width:115px;height:17px;background:#e6e6e6;border:1px solid #bcbcbc;box-sizing:border-box;"></div>
<div style="left:551px;top:1021px;width:51px;height:15px;background:#06b025;"></div>
<div class="t" style="left:670.00px;top:1020.50px;line-height:14px;font-size:11px;color:#000;font-family:'Liberation Sans',sans-serif;letter-spacing:0.197px;">7/15</div>
<div style="left:698px;top:1019px;width:1px;height:18px;background:#d0d0d0;"></div>
<div class="t" style="left:706.00px;top:1020.50px;line-height:14px;font-size:11px;color:#000;font-family:'Liberation Sans',sans-serif;letter-spacing:-0.666px;">WD:0m</div>
<svg style="left:747px;top:1026px" width="12" height="12"><g fill="#b8b8b8"><rect x="8" y="2" width="2" height="2"/><rect x="5" y="5" width="2" height="2"/><rect x="8" y="5" width="2" height="2"/><rect x="2" y="8" width="2" height="2"/><rect x="5" y="8" width="2" height="2"/><rect x="8" y="8" width="2" height="2"/></g></svg>
<div style="left:761px;top:0px;width:2px;height:1040px;background:#3a4350;"></div>
<div style="left:763px;top:0px;width:1152px;height:31px;background:#fff;"></div>
<svg style="left:771px;top:6px" width="16" height="16" viewBox="0 0 16 16"><defs><radialGradient id="gl771" cx="0.4" cy="0.35" r="0.7"><stop offset="0" stop-color="#5a8cff"/><stop offset="1" stop-color="#1a2fb0"/></radialGradient></defs><circle cx="8" cy="8" r="7.6" fill="url(#gl771)"/><path d="M5 2.5 C7 2 8.5 3.5 8 5.5 C7.5 7.5 9.5 8 9 10.5 C8.6 12.5 6.5 13.5 5.5 12 C4.5 10.5 5.5 9 4.5 7.5 C3.6 6 3.5 3.5 5 2.5Z" fill="#2fd23a"/><path d="M10.5 3 C12 3.5 12.8 5 12 6 C11.2 6.8 10.3 5.5 10.5 3Z" fill="#2fd23a"/></svg>
<div class="t" style="left:792.00px;top:6.50px;line-height:16px;font-size:12px;color:#999;font-family:'Liberation Sans',sans-serif;letter-spacing:-0.156px;">WSJT-X - Monitor - Wide Graph</div>
<svg style="left:1790px;top:0" width="125" height="30"><path d="M9 13.5 H19" stroke="#999" stroke-width="1" fill="none"/><rect x="54.5" y="8.5" width="9" height="9" fill="none" stroke="#d0d0d0" stroke-width="1"/><path d="M100 8.5 L110 18.5 M110 8.5 L100 18.5" stroke="#999" stroke-width="1" fill="none"/></svg>
<div style="left:763px;top:30px;width:1152px;height:1px;background:#222;"></div>
<div style="left:763px;top:31px;width:1152px;height:29px;background:#fff;"></div>
<div style="left:768px;top:32px;width:13px;height:13px;background:#fff;border:1px solid #333;box-sizing:border-box;"></div>
<svg style="left:768px;top:32px" width="13" height="13" viewBox="0 0 13 13"><path d="M2.3 6 L5.6 9.5 L11.2 2.7" fill="none" stroke="#222" stroke-width="1.15"/></svg>
<div class="t" style="left:785.20px;top:32.30px;line-height:14px;font-size:11px;color:#000;font-family:'Liberation Sans',sans-serif;letter-spacing:-0.137px;">Controls</div>
<svg style="left:763px;top:31px" width="1152" height="29"><path d="M34.5 23.5 V29 M68.5 23.5 V29 M102.5 17 V29 M137.5 23.5 V29 M171.5 23.5 V29 M205.5 23.5 V29 M239.5 23.5 V29 M273.5 17 V29 M307.5 23.5 V29 M341.5 23.5 V29 M375.5 23.5 V29 M410.5 23.5 V29 M444.5 17 V29 M478.5 23.5 V29 M512.5 23.5 V29 M546.5 23.5 V29 M580.5 23.5 V29 M614.5 17 V29 M649.5 23.5 V29 M683.5 23.5 V29 M717.5 23.5 V29 M751.5 23.5 V29 M785.5 17 V29 M819.5 23.5 V29 M853.5 23.5 V29 M887.5 23.5 V29 M922.5 23.5 V29 M956.5 17 V29 M990.5 23.5 V29 M1024.5 23.5 V29 M1058.5 23.5 V29 M1092.5 23.5 V29 M1126.5 17 V29 " stroke="#000" stroke-width="1" fill="none"/><text x="101.2" y="14.3" font-size="14.5" text-anchor="middle" font-family="Liberation Sans,sans-serif" fill="#000" textLength="26.5">500</text><text x="271.9" y="14.3" font-size="14.5" text-anchor="middle" font-family="Liberation Sans,sans-serif" fill="#000" textLength="35">1000</text><text x="442.5" y="14.3" font-size="14.5" text-anchor="middle" font-family="Liberation Sans,sans-serif" fill="#000" textLength="35">1500</text><text x="613.2" y="14.3" font-size="14.5" text-anchor="middle" font-family="Liberation Sans,sans-serif" fill="#000" textLength="35">2000</text><text x="783.9" y="14.3" font-size="14.5" text-anchor="middle" font-family="Liberation Sans,sans-serif" fill="#000" textLength="35">2500</text><text x="954.5" y="14.3" font-size="14.5" text-anchor="middle" font-family="Liberation Sans,sans-serif" fill="#000" textLength="35">3000</text><text x="1125.2" y="14.3" font-size="14.5" text-anchor="middle" font-family="Liberation Sans,sans-serif" fill="#000" textLength="35">3500</text><path d="M853.5 17.5 V11.5 H868.5 V17.5" stroke="#ff0000" stroke-width="3" fill="none"/><path d="M754 19 V25 H770 V19" stroke="#1e9060" stroke-width="2.4" fill="none"/></svg>
<svg style="left:763px;top:60px" width="1152" height="214"><defs><filter id="wn" x="0" y="0" width="100%" height="100%" color-interpolation-filters="sRGB"><feTurbulence type="fractalNoise" baseFrequency="0.62 0.68" numOctaves="2" seed="7" result="n"/><feColorMatrix in="n" type="matrix" values="1 0 0 0 0  1 0 0 0 0  1 0 0 0 0  0 0 0 0 1"/><feComponentTransfer><feFuncR type="table" tableValues="0 0 0 0 0 0.01 0.02 0.03 0.04 0.05 0.06"/><feFuncG type="table" tableValues="0 0 0 0 0.03 0.06 0.085 0.11 0.14 0.18 0.2"/><feFuncB type="table" tableValues="0.12 0.14 0.2 0.36 0.62 0.73 0.79 0.84 0.88 0.91 0.93"/></feComponentTransfer></filter>
    <filter id="bl"><feGaussianBlur stdDeviation="2.5"/></filter></defs><rect width="1152" height="214" fill="#0010c0"/><rect width="1152" height="214" filter="url(#wn)"/><rect x="698" y="0" width="5" height="214" fill="#000018" opacity="0.35"/><rect x="699.2" y="0" width="2.6" height="214" fill="#000008" opacity="0.85"/><rect x="230.0" y="25" width="22" height="44" fill="#1838ff" opacity="0.42" filter="url(#bl)"/><rect x="247" y="52" width="1" height="1" fill="#d8c860" opacity="1.0"/><rect x="249" y="61" width="1" height="1" fill="#d8c860" opacity="1.0"/><rect x="250" y="53" width="1" height="1" fill="#d8c860" opacity="1.0"/><rect x="249" y="41" width="2" height="1" fill="#d8c860" opacity="1.0"/><rect x="244" y="48" width="1" height="1" fill="#d8c860" opacity="1.0"/><rect x="242" y="56" width="1" height="1" fill="#d8c860" opacity="1.0"/><rect x="249" y="64" width="1" height="1" fill="#d8c860" opacity="1.0"/><rect x="236" y="58" width="2" height="1" fill="#d8c860" opacity="1.0"/><rect x="232" y="30" width="1" height="1" fill="#d8c860" opacity="1.0"/><rect x="237" y="34" width="1" height="1" fill="#d8c860" opacity="1.0"/><rect x="240" y="63" width="1" height="1" fill="#d8c860" opacity="1.0"/><rect x="246" y="48" width="1" height="1" fill="#d8c860" opacity="1.0"/><rect x="250" y="33" width="1" height="1" fill="#d8c860" opacity="1.0"/><rect x="251" y="67" width="2" height="1" fill="#d8c860" opacity="1.0"/><rect x="240" y="26" width="1" height="1" fill="#d8c860" opacity="1.0"/><rect x="239" y="36" width="1" height="1" fill="#d8c860" opacity="1.0"/><rect x="247" y="51" width="1" height="1" fill="#d8c860" opacity="1.0"/><rect x="248" y="38" width="2" height="1" fill="#d8c860" opacity="1.0"/><rect x="238" y="55" width="2" height="1" fill="#d8c860" opacity="1.0"/><rect x="235" y="55" width="1" height="1" fill="#d8c860" opacity="1.0"/><rect x="242" y="66" width="2" height="1" fill="#d8c860" opacity="1.0"/><rect x="246" y="26" width="2" height="1" fill="#d8c860" opacity="1.0"/><rect x="248" y="41" width="2" height="1" fill="#d8c860" opacity="1.0"/><rect x="235" y="27" width="1" height="1" fill="#d8c860" opacity="1.0"/><rect x="237" y="30" width="2" height="1" fill="#d8c860" opacity="1.0"/><rect x="240" y="40" width="2" height="1" fill="#d8c860" opacity="1.0"/><rect x="237" y="58" width="2" height="1" fill="#d8c860" opacity="1.0"/><rect x="236" y="62" width="1" height="1" fill="#d8c860" opacity="1.0"/><rect x="242" y="34" width="2" height="1" fill="#d8c860" opacity="1.0"/><rect x="241" y="64" width="1" height="1" fill="#d8c860" opacity="1.0"/><rect x="239" y="38" width="1" height="1" fill="#d8c860" opacity="1.0"/><rect x="246" y="59" width="2" height="1" fill="#d8c860" opacity="1.0"/><rect x="238" y="68" width="1" height="1" fill="#d8c860" opacity="1.0"/><rect x="243" y="28" width="2" height="1" fill="#d8c860" opacity="1.0"/><rect x="245" y="26" width="2" height="1" fill="#d8c860" opacity="1.0"/><rect x="243" y="61" width="2" height="1" fill="#d8c860" opacity="1.0"/><rect x="250" y="31" width="1" height="1" fill="#d8c860" opacity="1.0"/><rect x="241" y="59" width="1" height="1" fill="#d8c860" opacity="1.0"/><rect x="246" y="31" width="1" height="1" fill="#d8c860" opacity="1.0"/><rect x="248" y="52" width="1" height="1" fill="#d8c860" opacity="1.0"/><rect x="239" y="32" width="1" height="1" fill="#d8c860" opacity="1.0"/><rect x="240" y="61" width="2" height="1" fill="#d8c860" opacity="1.0"/><rect x="246" y="65" width="1" height="1" fill="#d8c860" opacity="1.0"/><rect x="244" y="67" width="2" height="1" fill="#d8c860" opacity="1.0"/><rect x="240" y="55" width="2" height="1" fill="#d8c860" opacity="1.0"/><rect x="240" y="38" width="1" height="1" fill="#d8c860" opacity="1.0"/><rect x="247" y="30" width="1" height="1" fill="#d8c860" opacity="1.0"/><rect x="243" y="52" width="2" height="1" fill="#d8c860" opacity="1.0"/><rect x="241" y="33" width="2" height="1" fill="#d8c860" opacity="1.0"/><rect x="247" y="28" width="2" height="1" fill="#d8c860" opacity="1.0"/><rect x="246" y="55" width="2" height="1" fill="#d8c860" opacity="1.0"/><rect x="246" y="41" width="2" height="1" fill="#d8c860" opacity="1.0"/><rect x="240" y="61" width="2" height="1" fill="#d8c860" opacity="1.0"/><rect x="241" y="66" width="1" height="1" fill="#d8c860" opacity="1.0"/><rect x="234" y="50" width="2" height="1" fill="#d8c860" opacity="1.0"/><rect x="238" y="39" width="2" height="1" fill="#d8c860" opacity="1.0"/><rect x="246" y="60" width="2" height="1" fill="#d8c860" opacity="1.0"/><rect x="245" y="40" width="2" height="1" fill="#d8c860" opacity="1.0"/><rect x="248" y="40" width="2" height="1" fill="#d8c860" opacity="1.0"/><rect x="253" y="67" width="1" height="1" fill="#d8c860" opacity="1.0"/><rect x="237" y="48" width="2" height="1" fill="#d8c860" opacity="1.0"/><rect x="244" y="65" width="1" height="1" fill="#d8c860" opacity="1.0"/><rect x="248" y="56" width="1" height="1" fill="#d8c860" opacity="1.0"/><rect x="251" y="52" width="2" height="1" fill="#d8c860" opacity="1.0"/><rect x="243" y="38" width="2" height="1" fill="#d8c860" opacity="1.0"/><rect x="235" y="56" width="1" height="1" fill="#d8c860" opacity="1.0"/><rect x="245" y="50" width="1" height="1" fill="#d8c860" opacity="1.0"/><rect x="245" y="34" width="1" height="1" fill="#d8c860" opacity="1.0"/><rect x="253" y="67" width="1" height="1" fill="#d8c860" opacity="1.0"/><rect x="235" y="27" width="2" height="1" fill="#d8c860" opacity="1.0"/><rect x="244" y="67" width="1" height="1" fill="#d8c860" opacity="1.0"/><rect x="240" y="43" width="1" height="1" fill="#d8c860" opacity="1.0"/><rect x="238" y="50" width="2" height="1" fill="#d8c860" opacity="1.0"/><rect x="239" y="25" width="2" height="1" fill="#d8c860" opacity="1.0"/><rect x="251" y="62" width="2" height="1" fill="#d8c860" opacity="1.0"/><rect x="245" y="66" width="2" height="1" fill="#d8c860" opacity="1.0"/><rect x="242" y="29" width="2" height="1" fill="#d8c860" opacity="1.0"/><rect x="241" y="66" width="2" height="1" fill="#d8c860" opacity="1.0"/><rect x="242" y="60" width="2" height="1" fill="#d8c860" opacity="1.0"/><rect x="236" y="45" width="2" height="1" fill="#d8c860" opacity="1.0"/><rect x="251" y="49" width="1" height="1" fill="#d8c860" opacity="1.0"/><rect x="240" y="51" width="1" height="1" fill="#d8c860" opacity="1.0"/><rect x="239" y="41" width="1" height="1" fill="#d8c860" opacity="1.0"/><rect x="249" y="39" width="2" height="1" fill="#d8c860" opacity="1.0"/><rect x="251" y="43" width="2" height="1" fill="#d8c860" opacity="1.0"/><rect x="251" y="38" width="2" height="1" fill="#d8c860" opacity="1.0"/><rect x="249" y="42" width="1" height="1" fill="#d8c860" opacity="1.0"/><rect x="239" y="51" width="2" height="1" fill="#d8c860" opacity="1.0"/><rect x="241" y="46" width="2" height="1" fill="#d8c860" opacity="1.0"/><rect x="241" y="66" width="2" height="1" fill="#d8c860" opacity="1.0"/><rect x="233" y="31" width="2" height="1" fill="#d8c860" opacity="1.0"/><rect x="234" y="36" width="1" height="1" fill="#d8c860" opacity="1.0"/><rect x="235" y="61" width="2" height="1" fill="#d8c860" opacity="1.0"/><rect x="241" y="35" width="1" height="1" fill="#d8c860" opacity="1.0"/><rect x="238" y="36" width="1" height="1" fill="#d8c860" opacity="1.0"/><rect x="230.0" y="129" width="22" height="42" fill="#1838ff" opacity="0.42" filter="url(#bl)"/><rect x="240" y="159" width="2" height="1" fill="#d8c860" opacity="1.0"/><rect x="243" y="154" width="1" height="1" fill="#d8c860" opacity="1.0"/><rect x="234" y="130" width="2" height="1" fill="#d8c860" opacity="1.0"/><rect x="240" y="151" width="2" height="1" fill="#d8c860" opacity="1.0"/><rect x="235" y="159" width="2" height="1" fill="#d8c860" opacity="1.0"/><rect x="247" y="144" width="1" height="1" fill="#d8c860" opacity="1.0"/><rect x="237" y="130" width="2" height="1" fill="#d8c860" opacity="1.0"/><rect x="237" y="157" width="1" height="1" fill="#d8c860" opacity="1.0"/><rect x="246" y="130" width="2" height="1" fill="#d8c860" opacity="1.0"/><rect x="247" y="153" width="2" height="1" fill="#d8c860" opacity="1.0"/><rect x="251" y="164" width="2" height="1" fill="#d8c860" opacity="1.0"/><rect x="249" y="145" width="1" height="1" fill="#d8c860" opacity="1.0"/><rect x="244" y="166" width="1" height="1" fill="#d8c860" opacity="1.0"/><rect x="233" y="141" width="2" height="1" fill="#d8c860" opacity="1.0"/><rect x="246" y="153" width="2" height="1" fill="#d8c860" opacity="1.0"/><rect x="238" y="166" width="2" height="1" fill="#d8c860" opacity="1.0"/><rect x="251" y="158" width="2" height="1" fill="#d8c860" opacity="1.0"/><rect x="242" y="151" width="1" height="1" fill="#d8c860" opacity="1.0"/><rect x="236" y="132" width="1" height="1" fill="#d8c860" opacity="1.0"/><rect x="247" y="161" width="1" height="1" fill="#d8c860" opacity="1.0"/><rect x="241" y="143" width="1" height="1" fill="#d8c860" opacity="1.0"/><rect x="249" y="170" width="1" height="1" fill="#d8c860" opacity="1.0"/><rect x="235" y="134" width="1" height="1" fill="#d8c860" opacity="1.0"/><rect x="237" y="158" width="2" height="1" fill="#d8c860" opacity="1.0"/><rect x="243" y="158" width="1" height="1" fill="#d8c860" opacity="1.0"/><rect x="242" y="154" width="1" height="1" fill="#d8c860" opacity="1.0"/><rect x="236" y="132" width="1" height="1" fill="#d8c860" opacity="1.0"/><rect x="248" y="156" width="2" height="1" fill="#d8c860" opacity="1.0"/><rect x="243" y="131" width="2" height="1" fill="#d8c860" opacity="1.0"/><rect x="238" y="165" width="2" height="1" fill="#d8c860" opacity="1.0"/><rect x="245" y="133" width="2" height="1" fill="#d8c860" opacity="1.0"/><rect x="251" y="149" width="2" height="1" fill="#d8c860" opacity="1.0"/><rect x="238" y="167" width="2" height="1" fill="#d8c860" opacity="1.0"/><rect x="244" y="135" width="2" height="1" fill="#d8c860" opacity="1.0"/><rect x="246" y="166" width="1" height="1" fill="#d8c860" opacity="1.0"/><rect x="243" y="140" width="2" height="1" fill="#d8c860" opacity="1.0"/><rect x="241" y="163" width="1" height="1" fill="#d8c860" opacity="1.0"/><rect x="251" y="162" width="2" height="1" fill="#d8c860" opacity="1.0"/><rect x="238" y="159" width="1" height="1" fill="#d8c860" opacity="1.0"/><rect x="236" y="156" width="1" height="1" fill="#d8c860" opacity="1.0"/><rect x="235" y="133" width="2" height="1" fill="#d8c860" opacity="1.0"/><rect x="249" y="139" width="2" height="1" fill="#d8c860" opacity="1.0"/><rect x="238" y="168" width="1" height="1" fill="#d8c860" opacity="1.0"/><rect x="241" y="151" width="1" height="1" fill="#d8c860" opacity="1.0"/><rect x="244" y="168" width="1" height="1" fill="#d8c860" opacity="1.0"/><rect x="237" y="160" width="2" height="1" fill="#d8c860" opacity="1.0"/><rect x="238" y="163" width="2" height="1" fill="#d8c860" opacity="1.0"/><rect x="238" y="144" width="2" height="1" fill="#d8c860" opacity="1.0"/><rect x="249" y="167" width="2" height="1" fill="#d8c860" opacity="1.0"/><rect x="247" y="145" width="2" height="1" fill="#d8c860" opacity="1.0"/><rect x="249" y="156" width="2" height="1" fill="#d8c860" opacity="1.0"/><rect x="242" y="168" width="1" height="1" fill="#d8c860" opacity="1.0"/><rect x="245" y="153" width="1" height="1" fill="#d8c860" opacity="1.0"/><rect x="235" y="145" width="1" height="1" fill="#d8c860" opacity="1.0"/><rect x="236" y="137" width="2" height="1" fill="#d8c860" opacity="1.0"/><rect x="244" y="165" width="2" height="1" fill="#d8c860" opacity="1.0"/><rect x="240" y="129" width="2" height="1" fill="#d8c860" opacity="1.0"/><rect x="242" y="142" width="1" height="1" fill="#d8c860" opacity="1.0"/><rect x="235" y="135" width="2" height="1" fill="#d8c860" opacity="1.0"/><rect x="251" y="165" width="2" height="1" fill="#d8c860" opacity="1.0"/><rect x="237" y="135" width="2" height="1" fill="#d8c860" opacity="1.0"/><rect x="249" y="163" width="1" height="1" fill="#d8c860" opacity="1.0"/><rect x="248" y="130" width="2" height="1" fill="#d8c860" opacity="1.0"/><rect x="242" y="167" width="1" height="1" fill="#d8c860" opacity="1.0"/><rect x="247" y="157" width="2" height="1" fill="#d8c860" opacity="1.0"/><rect x="238" y="164" width="2" height="1" fill="#d8c860" opacity="1.0"/><rect x="245" y="141" width="1" height="1" fill="#d8c860" opacity="1.0"/><rect x="245" y="130" width="1" height="1" fill="#d8c860" opacity="1.0"/><rect x="246" y="156" width="2" height="1" fill="#d8c860" opacity="1.0"/><rect x="238" y="157" width="2" height="1" fill="#d8c860" opacity="1.0"/><rect x="246" y="141" width="2" height="1" fill="#d8c860" opacity="1.0"/><rect x="237" y="136" width="1" height="1" fill="#d8c860" opacity="1.0"/><rect x="247" y="168" width="2" height="1" fill="#d8c860" opacity="1.0"/><rect x="240" y="159" width="2" height="1" fill="#d8c860" opacity="1.0"/><rect x="246" y="131" width="2" height="1" fill="#d8c860" opacity="1.0"/><rect x="233" y="136" width="2" height="1" fill="#d8c860" opacity="1.0"/><rect x="249" y="168" width="1" height="1" fill="#d8c860" opacity="1.0"/><rect x="245" y="166" width="2" height="1" fill="#d8c860" opacity="1.0"/><rect x="237" y="131" width="1" height="1" fill="#d8c860" opacity="1.0"/><rect x="248" y="149" width="1" height="1" fill="#d8c860" opacity="1.0"/><rect x="240" y="139" width="2" height="1" fill="#d8c860" opacity="1.0"/><rect x="250" y="155" width="1" height="1" fill="#d8c860" opacity="1.0"/><rect x="242" y="136" width="2" height="1" fill="#d8c860" opacity="1.0"/><rect x="237" y="137" width="2" height="1" fill="#d8c860" opacity="1.0"/><rect x="237" y="161" width="1" height="1" fill="#d8c860" opacity="1.0"/><rect x="250" y="154" width="1" height="1" fill="#d8c860" opacity="1.0"/><rect x="243" y="155" width="2" height="1" fill="#d8c860" opacity="1.0"/><rect x="244" y="149" width="2" height="1" fill="#d8c860" opacity="1.0"/><rect x="237" y="150" width="1" height="1" fill="#d8c860" opacity="1.0"/><rect x="241" y="166" width="2" height="1" fill="#d8c860" opacity="1.0"/><rect x="254" y="166" width="1" height="1" fill="#d8c860" opacity="1.0"/><rect x="241" y="135" width="2" height="1" fill="#d8c860" opacity="1.0"/><rect x="241" y="163" width="1" height="1" fill="#d8c860" opacity="1.0"/><rect x="243" y="151" width="1" height="1" fill="#d8c860" opacity="1.0"/><rect x="253" y="162" width="1" height="1" fill="#d8c860" opacity="1.0"/><rect x="125.0" y="25" width="20" height="42" fill="#2a50ff" opacity="0.42" filter="url(#bl)"/><rect x="135" y="36" width="1" height="1" fill="#a0a890" opacity="0.8"/><rect x="130" y="27" width="2" height="1" fill="#a0a890" opacity="0.8"/><rect x="141" y="61" width="1" height="1" fill="#a0a890" opacity="0.8"/><rect x="132" y="42" width="1" height="1" fill="#a0a890" opacity="0.8"/><rect x="137" y="62" width="1" height="1" fill="#a0a890" opacity="0.8"/><rect x="134" y="49" width="1" height="1" fill="#a0a890" opacity="0.8"/><rect x="138" y="55" width="2" height="1" fill="#a0a890" opacity="0.8"/><rect x="140" y="29" width="1" height="1" fill="#a0a890" opacity="0.8"/><rect x="132" y="38" width="1" height="1" fill="#a0a890" opacity="0.8"/><rect x="138" y="36" width="2" height="1" fill="#a0a890" opacity="0.8"/><rect x="136" y="26" width="1" height="1" fill="#a0a890" opacity="0.8"/><rect x="128" y="26" width="1" height="1" fill="#a0a890" opacity="0.8"/><rect x="134" y="59" width="2" height="1" fill="#a0a890" opacity="0.8"/><rect x="137" y="64" width="1" height="1" fill="#a0a890" opacity="0.8"/><rect x="129" y="47" width="1" height="1" fill="#a0a890" opacity="0.8"/><rect x="127" y="39" width="1" height="1" fill="#a0a890" opacity="0.8"/><rect x="129" y="55" width="1" height="1" fill="#a0a890" opacity="0.8"/><rect x="129" y="51" width="2" height="1" fill="#a0a890" opacity="0.8"/><rect x="129" y="58" width="2" height="1" fill="#a0a890" opacity="0.8"/><rect x="131" y="43" width="2" height="1" fill="#a0a890" opacity="0.8"/><rect x="128" y="32" width="1" height="1" fill="#a0a890" opacity="0.8"/><rect x="143" y="47" width="1" height="1" fill="#a0a890" opacity="0.8"/><rect x="140" y="29" width="2" height="1" fill="#a0a890" opacity="0.8"/><rect x="130" y="53" width="1" height="1" fill="#a0a890" opacity="0.8"/><rect x="136" y="26" width="2" height="1" fill="#a0a890" opacity="0.8"/><rect x="133" y="54" width="2" height="1" fill="#a0a890" opacity="0.8"/><rect x="131" y="34" width="1" height="1" fill="#a0a890" opacity="0.8"/><rect x="135" y="37" width="1" height="1" fill="#a0a890" opacity="0.8"/><rect x="140" y="40" width="1" height="1" fill="#a0a890" opacity="0.8"/><rect x="133" y="50" width="1" height="1" fill="#a0a890" opacity="0.8"/><rect x="126.0" y="129" width="20" height="39" fill="#2a50ff" opacity="0.42" filter="url(#bl)"/><rect x="132" y="134" width="2" height="1" fill="#a0a890" opacity="0.8"/><rect x="131" y="130" width="1" height="1" fill="#a0a890" opacity="0.8"/><rect x="134" y="158" width="1" height="1" fill="#a0a890" opacity="0.8"/><rect x="142" y="159" width="2" height="1" fill="#a0a890" opacity="0.8"/><rect x="143" y="155" width="1" height="1" fill="#a0a890" opacity="0.8"/><rect x="136" y="159" width="1" height="1" fill="#a0a890" opacity="0.8"/><rect x="138" y="133" width="1" height="1" fill="#a0a890" opacity="0.8"/><rect x="130" y="160" width="1" height="1" fill="#a0a890" opacity="0.8"/><rect x="137" y="152" width="2" height="1" fill="#a0a890" opacity="0.8"/><rect x="140" y="150" width="2" height="1" fill="#a0a890" opacity="0.8"/><rect x="143" y="166" width="1" height="1" fill="#a0a890" opacity="0.8"/><rect x="142" y="149" width="2" height="1" fill="#a0a890" opacity="0.8"/><rect x="130" y="165" width="1" height="1" fill="#a0a890" opacity="0.8"/><rect x="130" y="140" width="1" height="1" fill="#a0a890" opacity="0.8"/><rect x="139" y="158" width="2" height="1" fill="#a0a890" opacity="0.8"/><rect x="143" y="141" width="2" height="1" fill="#a0a890" opacity="0.8"/><rect x="134" y="164" width="1" height="1" fill="#a0a890" opacity="0.8"/><rect x="140" y="158" width="2" height="1" fill="#a0a890" opacity="0.8"/><rect x="141" y="163" width="1" height="1" fill="#a0a890" opacity="0.8"/><rect x="130" y="147" width="1" height="1" fill="#a0a890" opacity="0.8"/><rect x="144" y="138" width="2" height="1" fill="#a0a890" opacity="0.8"/><rect x="129" y="144" width="2" height="1" fill="#a0a890" opacity="0.8"/><rect x="141" y="143" width="1" height="1" fill="#a0a890" opacity="0.8"/><rect x="140" y="164" width="2" height="1" fill="#a0a890" opacity="0.8"/><rect x="142" y="141" width="2" height="1" fill="#a0a890" opacity="0.8"/><rect x="294.0" y="0" width="18" height="14" fill="#2448ff" opacity="0.42" filter="url(#bl)"/><rect x="288.0" y="77" width="18" height="45" fill="#2448ff" opacity="0.42" filter="url(#bl)"/><rect x="291" y="88" width="2" height="1" fill="#90a0ff" opacity="1.0"/><rect x="294" y="90" width="1" height="1" fill="#90a0ff" opacity="1.0"/><rect x="292" y="116" width="2" height="1" fill="#90a0ff" opacity="1.0"/><rect x="293" y="111" width="1" height="1" fill="#90a0ff" opacity="1.0"/><rect x="279.0" y="181" width="20" height="33" fill="#2448ff" opacity="0.42" filter="url(#bl)"/><rect x="291" y="199" width="2" height="1" fill="#90a0ff" opacity="1.0"/><rect x="288" y="194" width="1" height="1" fill="#90a0ff" opacity="1.0"/><rect x="285" y="191" width="2" height="1" fill="#90a0ff" opacity="1.0"/><rect x="281" y="187" width="1" height="1" fill="#90a0ff" opacity="1.0"/><rect x="534.0" y="25" width="18" height="45" fill="#6070a0" opacity="0.42" filter="url(#bl)"/><rect x="546" y="38" width="1" height="1" fill="#d0c020" opacity="1.0"/><rect x="544" y="44" width="1" height="1" fill="#d0c020" opacity="1.0"/><rect x="550" y="53" width="1" height="1" fill="#d0c020" opacity="1.0"/><rect x="543" y="28" width="1" height="1" fill="#d0c020" opacity="1.0"/><rect x="550" y="39" width="2" height="1" fill="#d0c020" opacity="1.0"/><rect x="546" y="66" width="2" height="1" fill="#d0c020" opacity="1.0"/><rect x="542" y="62" width="1" height="1" fill="#d0c020" opacity="1.0"/><rect x="541" y="30" width="2" height="1" fill="#d0c020" opacity="1.0"/><rect x="542" y="52" width="2" height="1" fill="#d0c020" opacity="1.0"/><rect x="553" y="57" width="1" height="1" fill="#d0c020" opacity="1.0"/><rect x="554" y="56" width="1" height="1" fill="#d0c020" opacity="1.0"/><rect x="550" y="41" width="1" height="1" fill="#d0c020" opacity="1.0"/><rect x="543" y="34" width="2" height="1" fill="#d0c020" opacity="1.0"/><rect x="556" y="64" width="1" height="1" fill="#d0c020" opacity="1.0"/><rect x="551" y="36" width="2" height="1" fill="#d0c020" opacity="1.0"/><rect x="540" y="42" width="2" height="1" fill="#d0c020" opacity="1.0"/><rect x="537" y="31" width="2" height="1" fill="#d0c020" opacity="1.0"/><rect x="556" y="67" width="1" height="1" fill="#d0c020" opacity="1.0"/><rect x="553" y="47" width="2" height="1" fill="#d0c020" opacity="1.0"/><rect x="547" y="26" width="2" height="1" fill="#d0c020" opacity="1.0"/><rect x="544" y="58" width="2" height="1" fill="#d0c020" opacity="1.0"/><rect x="543" y="42" width="2" height="1" fill="#d0c020" opacity="1.0"/><rect x="551" y="53" width="1" height="1" fill="#d0c020" opacity="1.0"/><rect x="544" y="50" width="2" height="1" fill="#d0c020" opacity="1.0"/><rect x="544" y="66" width="2" height="1" fill="#d0c020" opacity="1.0"/><rect x="542" y="27" width="1" height="1" fill="#d0c020" opacity="1.0"/><rect x="548" y="37" width="1" height="1" fill="#d0c020" opacity="1.0"/><rect x="539" y="37" width="2" height="1" fill="#d0c020" opacity="1.0"/><rect x="542" y="44" width="2" height="1" fill="#d0c020" opacity="1.0"/><rect x="545" y="63" width="2" height="1" fill="#d0c020" opacity="1.0"/><rect x="550" y="41" width="1" height="1" fill="#d0c020" opacity="1.0"/><rect x="544" y="61" width="1" height="1" fill="#d0c020" opacity="1.0"/><rect x="544" y="26" width="2" height="1" fill="#d0c020" opacity="1.0"/><rect x="543" y="63" width="1" height="1" fill="#d0c020" opacity="1.0"/><rect x="549" y="34" width="1" height="1" fill="#d0c020" opacity="1.0"/><rect x="541" y="46" width="2" height="1" fill="#d0c020" opacity="1.0"/><rect x="552" y="51" width="2" height="1" fill="#d0c020" opacity="1.0"/><rect x="540" y="47" width="2" height="1" fill="#d0c020" opacity="1.0"/><rect x="548" y="59" width="1" height="1" fill="#d0c020" opacity="1.0"/><rect x="543" y="34" width="2" height="1" fill="#d0c020" opacity="1.0"/><rect x="553" y="61" width="2" height="1" fill="#d0c020" opacity="1.0"/><rect x="548" y="65" width="1" height="1" fill="#d0c020" opacity="1.0"/><rect x="544" y="64" width="1" height="1" fill="#d0c020" opacity="1.0"/><rect x="553" y="44" width="2" height="1" fill="#d0c020" opacity="1.0"/><rect x="543" y="35" width="2" height="1" fill="#d0c020" opacity="1.0"/><rect x="542" y="31" width="1" height="1" fill="#d0c020" opacity="1.0"/><rect x="542" y="54" width="1" height="1" fill="#d0c020" opacity="1.0"/><rect x="542" y="58" width="2" height="1" fill="#d0c020" opacity="1.0"/><rect x="542" y="27" width="1" height="1" fill="#d0c020" opacity="1.0"/><rect x="538" y="34" width="2" height="1" fill="#d0c020" opacity="1.0"/><rect x="551" y="67" width="1" height="1" fill="#d0c020" opacity="1.0"/><rect x="540" y="46" width="2" height="1" fill="#d0c020" opacity="1.0"/><rect x="543" y="66" width="1" height="1" fill="#d0c020" opacity="1.0"/><rect x="543" y="61" width="1" height="1" fill="#d0c020" opacity="1.0"/><rect x="547" y="58" width="1" height="1" fill="#d0c020" opacity="1.0"/><rect x="544" y="32" width="1" height="1" fill="#d0c020" opacity="1.0"/><rect x="539" y="37" width="2" height="1" fill="#d0c020" opacity="1.0"/><rect x="544" y="41" width="2" height="1" fill="#d0c020" opacity="1.0"/><rect x="546" y="49" width="1" height="1" fill="#d0c020" opacity="1.0"/><rect x="545" y="67" width="1" height="1" fill="#d0c020" opacity="1.0"/><rect x="550" y="49" width="1" height="1" fill="#d0c020" opacity="1.0"/><rect x="547" y="35" width="1" height="1" fill="#d0c020" opacity="1.0"/><rect x="547" y="25" width="2" height="1" fill="#d0c020" opacity="1.0"/><rect x="548" y="35" width="1" height="1" fill="#d0c020" opacity="1.0"/><rect x="542" y="60" width="1" height="1" fill="#d0c020" opacity="1.0"/><rect x="542" y="27" width="2" height="1" fill="#d0c020" opacity="1.0"/><rect x="549" y="59" width="2" height="1" fill="#d0c020" opacity="1.0"/><rect x="548" y="45" width="2" height="1" fill="#d0c020" opacity="1.0"/><rect x="544" y="50" width="2" height="1" fill="#d0c020" opacity="1.0"/><rect x="547" y="68" width="1" height="1" fill="#d0c020" opacity="1.0"/><rect x="550" y="51" width="2" height="1" fill="#d0c020" opacity="1.0"/><rect x="539" y="27" width="2" height="1" fill="#d0c020" opacity="1.0"/><rect x="544" y="29" width="2" height="1" fill="#d0c020" opacity="1.0"/><rect x="544" y="62" width="2" height="1" fill="#d0c020" opacity="1.0"/><rect x="536" y="28" width="1" height="1" fill="#d0c020" opacity="1.0"/><rect x="541" y="50" width="1" height="1" fill="#d0c020" opacity="1.0"/><rect x="549" y="30" width="2" height="1" fill="#d0c020" opacity="1.0"/><rect x="546" y="68" width="2" height="1" fill="#d0c020" opacity="1.0"/><rect x="541" y="46" width="1" height="1" fill="#d0c020" opacity="1.0"/><rect x="549" y="37" width="2" height="1" fill="#d0c020" opacity="1.0"/><rect x="548" y="42" width="1" height="1" fill="#d0c020" opacity="1.0"/><rect x="549" y="56" width="2" height="1" fill="#d0c020" opacity="1.0"/><rect x="554" y="65" width="1" height="1" fill="#d0c020" opacity="1.0"/><rect x="553" y="50" width="2" height="1" fill="#d0c020" opacity="1.0"/><rect x="540" y="50" width="1" height="1" fill="#d0c020" opacity="1.0"/><rect x="549" y="56" width="1" height="1" fill="#d0c020" opacity="1.0"/><rect x="542" y="26" width="2" height="1" fill="#d0c020" opacity="1.0"/><rect x="550" y="57" width="1" height="1" fill="#d0c020" opacity="1.0"/><rect x="550" y="49" width="1" height="1" fill="#d0c020" opacity="1.0"/><rect x="549" y="57" width="1" height="1" fill="#d0c020" opacity="1.0"/><rect x="543" y="28" width="1" height="1" fill="#d0c020" opacity="1.0"/><rect x="552" y="67" width="2" height="1" fill="#d0c020" opacity="1.0"/><rect x="547" y="30" width="2" height="1" fill="#d0c020" opacity="1.0"/><rect x="543" y="45" width="2" height="1" fill="#d0c020" opacity="1.0"/><rect x="552" y="48" width="2" height="1" fill="#d0c020" opacity="1.0"/><rect x="548" y="42" width="2" height="1" fill="#d0c020" opacity="1.0"/><rect x="547" y="39" width="2" height="1" fill="#d0c020" opacity="1.0"/><rect x="542" y="29" width="1" height="1" fill="#d0c020" opacity="1.0"/><rect x="547" y="53" width="2" height="1" fill="#d0c020" opacity="1.0"/><rect x="539" y="33" width="2" height="1" fill="#d0c020" opacity="1.0"/><rect x="544" y="32" width="2" height="1" fill="#d0c020" opacity="1.0"/><rect x="544" y="65" width="2" height="1" fill="#d0c020" opacity="1.0"/><rect x="547" y="50" width="1" height="1" fill="#d0c020" opacity="1.0"/><rect x="549" y="49" width="2" height="1" fill="#d0c020" opacity="1.0"/><rect x="543" y="49" width="2" height="1" fill="#d0c020" opacity="1.0"/><rect x="540" y="38" width="2" height="1" fill="#d0c020" opacity="1.0"/><rect x="551" y="44" width="2" height="1" fill="#d0c020" opacity="1.0"/><rect x="549" y="46" width="1" height="1" fill="#d0c020" opacity="1.0"/><rect x="544" y="67" width="1" height="1" fill="#d0c020" opacity="1.0"/><rect x="540" y="40" width="2" height="1" fill="#d0c020" opacity="1.0"/><rect x="550" y="62" width="1" height="1" fill="#d0c020" opacity="1.0"/><rect x="549" y="59" width="1" height="1" fill="#d0c020" opacity="1.0"/><rect x="551" y="53" width="2" height="1" fill="#d0c020" opacity="1.0"/><rect x="549" y="29" width="1" height="1" fill="#d0c020" opacity="1.0"/><rect x="542" y="39" width="2" height="1" fill="#d0c020" opacity="1.0"/><rect x="551" y="43" width="1" height="1" fill="#d0c020" opacity="1.0"/><rect x="537" y="28" width="1" height="1" fill="#d0c020" opacity="1.0"/><rect x="554" y="67" width="2" height="1" fill="#d0c020" opacity="1.0"/><rect x="543" y="30" width="1" height="1" fill="#d0c020" opacity="1.0"/><rect x="552" y="44" width="2" height="1" fill="#d0c020" opacity="1.0"/><rect x="550" y="54" width="2" height="1" fill="#d0c020" opacity="1.0"/><rect x="556" y="66" width="2" height="1" fill="#d0c020" opacity="1.0"/><rect x="541" y="42" width="1" height="1" fill="#d0c020" opacity="1.0"/><rect x="544" y="30" width="1" height="1" fill="#d0c020" opacity="1.0"/><rect x="550" y="54" width="2" height="1" fill="#d0c020" opacity="1.0"/><rect x="543" y="44" width="2" height="1" fill="#d0c020" opacity="1.0"/><rect x="549" y="68" width="1" height="1" fill="#d0c020" opacity="1.0"/><rect x="556" y="64" width="1" height="1" fill="#d0c020" opacity="1.0"/><rect x="548" y="42" width="1" height="1" fill="#d0c020" opacity="1.0"/><rect x="550" y="39" width="1" height="1" fill="#d0c020" opacity="1.0"/><rect x="538" y="31" width="2" height="1" fill="#d0c020" opacity="1.0"/><rect x="546" y="38" width="2" height="1" fill="#d0c020" opacity="1.0"/><rect x="548" y="38" width="2" height="1" fill="#d0c020" opacity="1.0"/><rect x="545" y="45" width="1" height="1" fill="#d0c020" opacity="1.0"/><rect x="540" y="31" width="1" height="1" fill="#d0c020" opacity="1.0"/><rect x="542" y="45" width="1" height="1" fill="#d0c020" opacity="1.0"/><rect x="538" y="32" width="2" height="1" fill="#d0c020" opacity="1.0"/><rect x="544" y="36" width="1" height="1" fill="#d0c020" opacity="1.0"/><rect x="548" y="60" width="2" height="1" fill="#d0c020" opacity="1.0"/><rect x="544" y="51" width="2" height="1" fill="#d0c020" opacity="1.0"/><rect x="549" y="56" width="1" height="1" fill="#d0c020" opacity="1.0"/><rect x="538" y="34" width="2" height="1" fill="#d0c020" opacity="1.0"/><rect x="547" y="53" width="2" height="1" fill="#d0c020" opacity="1.0"/><rect x="541" y="52" width="2" height="1" fill="#d0c020" opacity="1.0"/><rect x="543" y="31" width="2" height="1" fill="#d0c020" opacity="1.0"/><rect x="549" y="41" width="2" height="1" fill="#d0c020" opacity="1.0"/><rect x="551" y="54" width="1" height="1" fill="#d0c020" opacity="1.0"/><rect x="549" y="25" width="2" height="1" fill="#d0c020" opacity="1.0"/><rect x="549" y="67" width="2" height="1" fill="#d0c020" opacity="1.0"/><rect x="551" y="44" width="2" height="1" fill="#d0c020" opacity="1.0"/><rect x="549" y="40" width="2" height="1" fill="#d0c020" opacity="1.0"/><rect x="550" y="56" width="1" height="1" fill="#d0c020" opacity="1.0"/><rect x="544" y="32" width="1" height="1" fill="#d0c020" opacity="1.0"/><rect x="547" y="49" width="2" height="1" fill="#d0c020" opacity="1.0"/><rect x="542" y="62" width="1" height="1" fill="#d0c020" opacity="1.0"/><rect x="541" y="46" width="1" height="1" fill="#d0c020" opacity="1.0"/><rect x="540" y="32" width="1" height="1" fill="#d0c020" opacity="1.0"/><rect x="546" y="54" width="1" height="1" fill="#d0c020" opacity="1.0"/><rect x="548" y="42" width="1" height="1" fill="#d0c020" opacity="1.0"/><rect x="553" y="53" width="1" height="1" fill="#d0c020" opacity="1.0"/><rect x="549" y="54" width="2" height="1" fill="#d0c020" opacity="1.0"/><rect x="543" y="44" width="1" height="1" fill="#d0c020" opacity="1.0"/><rect x="547" y="41" width="2" height="1" fill="#d0c020" opacity="1.0"/><rect x="552" y="60" width="2" height="1" fill="#d0c020" opacity="1.0"/><rect x="540" y="48" width="2" height="1" fill="#d0c020" opacity="1.0"/><rect x="537" y="28" width="1" height="1" fill="#d0c020" opacity="1.0"/><rect x="543" y="30" width="2" height="1" fill="#d0c020" opacity="1.0"/><rect x="549" y="65" width="2" height="1" fill="#d0c020" opacity="1.0"/><rect x="540" y="48" width="2" height="1" fill="#d0c020" opacity="1.0"/><rect x="550" y="62" width="1" height="1" fill="#d0c020" opacity="1.0"/><rect x="549" y="26" width="1" height="1" fill="#d0c020" opacity="1.0"/><rect x="553" y="68" width="1" height="1" fill="#d0c020" opacity="1.0"/><rect x="542" y="29" width="1" height="1" fill="#d0c020" opacity="1.0"/><rect x="543" y="33" width="1" height="1" fill="#d0c020" opacity="1.0"/><rect x="543" y="44" width="2" height="1" fill="#d0c020" opacity="1.0"/><rect x="550" y="42" width="1" height="1" fill="#d0c020" opacity="1.0"/><rect x="552" y="64" width="1" height="1" fill="#d0c020" opacity="1.0"/><rect x="550" y="31" width="1" height="1" fill="#d0c020" opacity="1.0"/><rect x="539" y="43" width="2" height="1" fill="#d0c020" opacity="1.0"/><rect x="543" y="48" width="2" height="1" fill="#d0c020" opacity="1.0"/><rect x="554" y="59" width="2" height="1" fill="#d0c020" opacity="1.0"/><rect x="547" y="60" width="2" height="1" fill="#d0c020" opacity="1.0"/><rect x="544" y="57" width="2" height="1" fill="#d0c020" opacity="1.0"/><rect x="553" y="57" width="1" height="1" fill="#d0c020" opacity="1.0"/><rect x="545" y="33" width="1" height="1" fill="#d0c020" opacity="1.0"/><rect x="540" y="41" width="2" height="1" fill="#d0c020" opacity="1.0"/><rect x="541" y="41" width="2" height="1" fill="#d0c020" opacity="1.0"/><rect x="545" y="33" width="2" height="1" fill="#d0c020" opacity="1.0"/><rect x="553" y="67" width="2" height="1" fill="#d0c020" opacity="1.0"/><rect x="554" y="67" width="2" height="1" fill="#d0c020" opacity="1.0"/><rect x="554" y="57" width="2" height="1" fill="#d0c020" opacity="1.0"/><rect x="537" y="32" width="1" height="1" fill="#d0c020" opacity="1.0"/><rect x="546" y="57" width="2" height="1" fill="#d0c020" opacity="1.0"/><rect x="546" y="37" width="2" height="1" fill="#d0c020" opacity="1.0"/><rect x="548" y="52" width="1" height="1" fill="#d0c020" opacity="1.0"/><rect x="547" y="42" width="1" height="1" fill="#d0c020" opacity="1.0"/><rect x="542" y="35" width="1" height="1" fill="#d0c020" opacity="1.0"/><rect x="548" y="59" width="1" height="1" fill="#d0c020" opacity="1.0"/><rect x="549" y="54" width="1" height="1" fill="#d0c020" opacity="1.0"/><rect x="541" y="29" width="1" height="1" fill="#d0c020" opacity="1.0"/><rect x="550" y="39" width="1" height="1" fill="#d0c020" opacity="1.0"/><rect x="548" y="39" width="1" height="1" fill="#d0c020" opacity="1.0"/><rect x="555" y="66" width="1" height="1" fill="#d0c020" opacity="1.0"/><rect x="543" y="27" width="2" height="1" fill="#d0c020" opacity="1.0"/><rect x="542" y="35" width="2" height="1" fill="#d0c020" opacity="1.0"/><rect x="544" y="37" width="1" height="1" fill="#d0c020" opacity="1.0"/><rect x="550" y="68" width="2" height="1" fill="#d0c020" opacity="1.0"/><rect x="550" y="62" width="1" height="1" fill="#d0c020" opacity="1.0"/><rect x="547" y="66" width="1" height="1" fill="#d0c020" opacity="1.0"/><rect x="546" y="32" width="2" height="1" fill="#d0c020" opacity="1.0"/><rect x="541" y="29" width="1" height="1" fill="#d0c020" opacity="1.0"/><rect x="540" y="41" width="2" height="1" fill="#d0c020" opacity="1.0"/><rect x="549" y="29" width="2" height="1" fill="#d0c020" opacity="1.0"/><rect x="550" y="27" width="1" height="1" fill="#d0c020" opacity="1.0"/><rect x="553" y="51" width="2" height="1" fill="#d0c020" opacity="1.0"/><rect x="549" y="37" width="2" height="1" fill="#d0c020" opacity="1.0"/><rect x="541" y="48" width="2" height="1" fill="#d0c020" opacity="1.0"/><rect x="542" y="43" width="2" height="1" fill="#d0c020" opacity="1.0"/><rect x="544" y="66" width="1" height="1" fill="#d0c020" opacity="1.0"/><rect x="551" y="44" width="2" height="1" fill="#d0c020" opacity="1.0"/><rect x="547" y="60" width="1" height="1" fill="#d0c020" opacity="1.0"/><rect x="543" y="33" width="2" height="1" fill="#d0c020" opacity="1.0"/><rect x="538" y="27" width="1" height="1" fill="#d0c020" opacity="1.0"/><rect x="538" y="28" width="2" height="1" fill="#d0c020" opacity="1.0"/><rect x="547" y="38" width="1" height="1" fill="#d0c020" opacity="1.0"/><rect x="543" y="44" width="2" height="1" fill="#d0c020" opacity="1.0"/><rect x="554" y="48" width="2" height="1" fill="#d0c020" opacity="1.0"/><rect x="551" y="62" width="1" height="1" fill="#d0c020" opacity="1.0"/><rect x="544" y="33" width="2" height="1" fill="#d0c020" opacity="1.0"/><rect x="543" y="62" width="2" height="1" fill="#d0c020" opacity="1.0"/><rect x="547" y="64" width="2" height="1" fill="#d0c020" opacity="1.0"/><rect x="556" y="66" width="2" height="1" fill="#d0c020" opacity="1.0"/><rect x="545" y="43" width="2" height="1" fill="#d0c020" opacity="1.0"/><rect x="547" y="31" width="2" height="1" fill="#d0c020" opacity="1.0"/><rect x="541" y="41" width="2" height="1" fill="#d0c020" opacity="1.0"/><rect x="546" y="25" width="2" height="1" fill="#d0c020" opacity="1.0"/><rect x="546" y="36" width="2" height="1" fill="#d0c020" opacity="1.0"/><rect x="550" y="65" width="1" height="1" fill="#d0c020" opacity="1.0"/><rect x="539" y="38" width="1" height="1" fill="#d0c020" opacity="1.0"/><rect x="544" y="54" width="2" height="1" fill="#d0c020" opacity="1.0"/><rect x="552" y="64" width="1" height="1" fill="#d0c020" opacity="1.0"/><rect x="553" y="65" width="2" height="1" fill="#d0c020" opacity="1.0"/><rect x="541" y="29" width="2" height="1" fill="#d0c020" opacity="1.0"/><rect x="550" y="32" width="1" height="1" fill="#d0c020" opacity="1.0"/><rect x="538" y="34" width="2" height="1" fill="#d0c020" opacity="1.0"/><rect x="540" y="48" width="1" height="1" fill="#d0c020" opacity="1.0"/><rect x="548" y="69" width="2" height="1" fill="#d0c020" opacity="1.0"/><rect x="544" y="35" width="1" height="1" fill="#d0c020" opacity="1.0"/><rect x="552" y="56" width="1" height="1" fill="#d0c020" opacity="1.0"/><rect x="547" y="68" width="1" height="1" fill="#d0c020" opacity="1.0"/><rect x="551" y="65" width="2" height="1" fill="#d0c020" opacity="1.0"/><rect x="545" y="59" width="1" height="1" fill="#d0c020" opacity="1.0"/><rect x="546" y="59" width="2" height="1" fill="#d0c020" opacity="1.0"/><rect x="547" y="33" width="2" height="1" fill="#d0c020" opacity="1.0"/><rect x="553" y="62" width="2" height="1" fill="#d0c020" opacity="1.0"/><rect x="554" y="62" width="1" height="1" fill="#d0c020" opacity="1.0"/><rect x="547" y="42" width="2" height="1" fill="#d0c020" opacity="1.0"/><rect x="549" y="46" width="1" height="1" fill="#d0c020" opacity="1.0"/><rect x="541" y="45" width="1" height="1" fill="#d0c020" opacity="1.0"/><rect x="547" y="66" width="1" height="1" fill="#d0c020" opacity="1.0"/><rect x="550" y="67" width="1" height="1" fill="#d0c020" opacity="1.0"/><rect x="545" y="51" width="2" height="1" fill="#d0c020" opacity="1.0"/><rect x="542" y="41" width="1" height="1" fill="#d0c020" opacity="1.0"/><rect x="553" y="63" width="2" height="1" fill="#d0c020" opacity="1.0"/><rect x="549" y="45" width="1" height="1" fill="#d0c020" opacity="1.0"/><rect x="538" y="35" width="2" height="1" fill="#d0c020" opacity="1.0"/><rect x="540" y="29" width="2" height="1" fill="#d0c020" opacity="1.0"/><rect x="549" y="54" width="2" height="1" fill="#d0c020" opacity="1.0"/><rect x="544" y="62" width="1" height="1" fill="#d0c020" opacity="1.0"/><rect x="545" y="30" width="2" height="1" fill="#d0c020" opacity="1.0"/><rect x="544" y="35" width="2" height="1" fill="#d0c020" opacity="1.0"/><rect x="542" y="55" width="1" height="1" fill="#d0c020" opacity="1.0"/><rect x="551" y="51" width="1" height="1" fill="#d0c020" opacity="1.0"/><rect x="550" y="55" width="2" height="1" fill="#d0c020" opacity="1.0"/><rect x="557" y="67" width="1" height="1" fill="#d0c020" opacity="1.0"/><rect x="546" y="38" width="1" height="1" fill="#d0c020" opacity="1.0"/><rect x="545" y="54" width="2" height="1" fill="#d0c020" opacity="1.0"/><rect x="554" y="62" width="2" height="1" fill="#d0c020" opacity="1.0"/><rect x="543" y="31" width="1" height="1" fill="#d0c020" opacity="1.0"/><rect x="550" y="58" width="1" height="1" fill="#d0c020" opacity="1.0"/><rect x="545" y="65" width="1" height="1" fill="#d0c020" opacity="1.0"/><rect x="547" y="34" width="2" height="1" fill="#d0c020" opacity="1.0"/><rect x="552" y="43" width="1" height="1" fill="#d0c020" opacity="1.0"/><rect x="545" y="53" width="1" height="1" fill="#d0c020" opacity="1.0"/><rect x="541" y="52" width="1" height="1" fill="#d0c020" opacity="1.0"/><rect x="554" y="67" width="2" height="1" fill="#d0c020" opacity="1.0"/><rect x="543" y="44" width="2" height="1" fill="#d0c020" opacity="1.0"/><rect x="552" y="42" width="2" height="1" fill="#d0c020" opacity="1.0"/><rect x="551" y="54" width="2" height="1" fill="#d0c020" opacity="1.0"/><rect x="543" y="66" width="2" height="1" fill="#d0c020" opacity="1.0"/><rect x="541" y="52" width="2" height="1" fill="#d0c020" opacity="1.0"/><rect x="548" y="40" width="2" height="1" fill="#d0c020" opacity="1.0"/><rect x="550" y="44" width="1" height="1" fill="#d0c020" opacity="1.0"/><rect x="552" y="66" width="1" height="1" fill="#d0c020" opacity="1.0"/><rect x="551" y="50" width="1" height="1" fill="#d0c020" opacity="1.0"/><rect x="552" y="37" width="2" height="1" fill="#d0c020" opacity="1.0"/><rect x="547" y="47" width="1" height="1" fill="#d0c020" opacity="1.0"/><rect x="548" y="59" width="2" height="1" fill="#d0c020" opacity="1.0"/><rect x="547" y="44" width="1" height="1" fill="#d0c020" opacity="1.0"/><rect x="548" y="39" width="1" height="1" fill="#d0c020" opacity="1.0"/><rect x="547" y="29" width="2" height="1" fill="#d0c020" opacity="1.0"/><rect x="551" y="49" width="1" height="1" fill="#d0c020" opacity="1.0"/><rect x="546" y="26" width="1" height="1" fill="#d0c020" opacity="1.0"/><rect x="554" y="67" width="1" height="1" fill="#d0c020" opacity="1.0"/><rect x="548" y="62" width="1" height="1" fill="#d0c020" opacity="1.0"/><rect x="553" y="67" width="2" height="1" fill="#d0c020" opacity="1.0"/><rect x="548" y="60" width="2" height="1" fill="#d0c020" opacity="1.0"/><rect x="555" y="56" width="2" height="1" fill="#d0c020" opacity="1.0"/><rect x="551" y="48" width="2" height="1" fill="#d0c020" opacity="1.0"/><rect x="550" y="27" width="2" height="1" fill="#d0c020" opacity="1.0"/><rect x="550" y="25" width="1" height="1" fill="#d0c020" opacity="1.0"/><rect x="550" y="33" width="2" height="1" fill="#d0c020" opacity="1.0"/><rect x="546" y="68" width="1" height="1" fill="#d0c020" opacity="1.0"/><rect x="540" y="45" width="2" height="1" fill="#d0c020" opacity="1.0"/><rect x="549" y="64" width="2" height="1" fill="#d0c020" opacity="1.0"/><rect x="542" y="43" width="2" height="1" fill="#d0c020" opacity="1.0"/><rect x="538" y="25" width="1" height="1" fill="#d0c020" opacity="1.0"/><rect x="542" y="35" width="1" height="1" fill="#d0c020" opacity="1.0"/><rect x="548" y="66" width="1" height="1" fill="#d0c020" opacity="1.0"/><rect x="544" y="69" width="2" height="1" fill="#d0c020" opacity="1.0"/><rect x="545" y="36" width="2" height="1" fill="#d0c020" opacity="1.0"/><rect x="546" y="27" width="1" height="1" fill="#d0c020" opacity="1.0"/><rect x="541" y="29" width="1" height="1" fill="#d0c020" opacity="1.0"/><rect x="552" y="49" width="2" height="1" fill="#d0c020" opacity="1.0"/><rect x="541" y="39" width="2" height="1" fill="#d0c020" opacity="1.0"/><rect x="548" y="64" width="1" height="1" fill="#d0c020" opacity="1.0"/><rect x="548" y="30" width="2" height="1" fill="#d0c020" opacity="1.0"/><rect x="553" y="57" width="1" height="1" fill="#d0c020" opacity="1.0"/><rect x="546" y="39" width="1" height="1" fill="#d0c020" opacity="1.0"/><rect x="555" y="65" width="1" height="1" fill="#d0c020" opacity="1.0"/><rect x="0" y="24" width="1152" height="1" fill="#10ff20"/><rect x="0" y="25" width="1152" height="1" fill="#10ff20" opacity="0.35"/><rect x="0" y="76" width="1152" height="1" fill="#10ff20"/><rect x="0" y="77" width="1152" height="1" fill="#10ff20" opacity="0.35"/><rect x="0" y="128" width="1152" height="1" fill="#10ff20"/><rect x="0" y="129" width="1152" height="1" fill="#10ff20" opacity="0.35"/><rect x="0" y="180" width="1152" height="1" fill="#10ff20"/><rect x="0" y="181" width="1152" height="1" fill="#10ff20" opacity="0.35"/><text x="5.5" y="22.3" font-size="11" fill="#fff" font-family="Liberation Sans,sans-serif" textLength="42.5">19:56:45</text><text x="61" y="22.3" font-size="11" fill="#fff" font-family="Liberation Sans,sans-serif" textLength="24">70cm</text><text x="5.5" y="74.3" font-size="11" fill="#fff" font-family="Liberation Sans,sans-serif" textLength="42.5">19:56:30</text><text x="61" y="74.3" font-size="11" fill="#fff" font-family="Liberation Sans,sans-serif" textLength="24">70cm</text><text x="5.5" y="126.3" font-size="11" fill="#fff" font-family="Liberation Sans,sans-serif" textLength="42.5">19:56:15</text><text x="61" y="126.3" font-size="11" fill="#fff" font-family="Liberation Sans,sans-serif" textLength="24">70cm</text><text x="5.5" y="178.3" font-size="11" fill="#fff" font-family="Liberation Sans,sans-serif" textLength="42.5">19:56:00</text><text x="61" y="178.3" font-size="11" fill="#fff" font-family="Liberation Sans,sans-serif" textLength="24">70cm</text></svg>
<div style="left:763px;top:274px;width:1152px;height:104px;background:linear-gradient(#000000 0,#000000 1px,#000090 1.5px,#00008a 6%,#000048 50%,#00000c 80%,#000000 88%);"></div>
<svg style="left:763px;top:274px" width="1152" height="104"><path d="M0 15.5 H1152 M0 30.5 H1152 M0 45.5 H1152 M0 59.5 H1152 M0 74.5 H1152 M0 89.5 H1152 M102.5 0 V104 M273.5 0 V104 M444.5 0 V104 M614.5 0 V104 M785.5 0 V104 M956.5 0 V104 M1126.5 0 V104 " stroke="#fff" stroke-width="1" stroke-dasharray="1 2" fill="none" opacity="0.95"/><polyline points="0,89.0 1,91.0 2,91.7 3,89.9 4,88.9 5,90.4 6,91.1 7,91.8 8,89.0 9,88.9 10,91.3 11,91.1 12,92.3 13,91.7 14,90.4 15,90.2 16,93.6 17,90.2 18,89.6 19,89.1 20,90.6 21,90.7 22,90.1 23,90.4 24,90.8 25,91.3 26,91.8 27,90.8 28,88.4 29,91.3 30,88.8 31,90.3 32,88.7 33,90.5 34,89.6 35,90.8 36,94.5 37,90.4 38,91.5 39,88.9 40,90.2 41,91.3 42,90.4 43,90.9 44,90.6 45,89.3 46,91.2 47,89.5 48,92.7 49,89.9 50,91.3 51,90.5 52,91.6 53,89.8 54,91.7 55,90.4 56,92.0 57,91.2 58,90.7 59,89.6 60,91.4 61,91.1 62,92.5 63,90.0 64,91.2 65,91.1 66,90.8 67,90.8 68,90.7 69,89.8 70,89.3 71,90.0 72,91.2 73,92.3 74,91.7 75,91.8 76,91.4 77,91.3 78,90.7 79,91.4 80,92.6 81,90.1 82,89.7 83,92.9 84,90.8 85,91.7 86,91.5 87,89.1 88,93.4 89,92.6 90,90.7 91,91.4 92,90.7 93,89.4 94,90.4 95,90.9 96,91.8 97,91.4 98,90.6 99,92.1 100,89.6 101,91.5 102,91.8 103,90.1 104,88.4 105,89.4 106,90.8 107,91.1 108,92.4 109,89.3 110,90.5 111,91.3 112,90.3 113,87.7 114,91.5 115,93.3 116,91.7 117,89.4 118,90.0 119,90.8 120,93.5 121,91.2 122,90.6 123,92.4 124,90.4 125,92.7 126,89.7 127,89.9 128,91.4 129,92.2 130,91.3 131,90.9 132,88.3 133,89.6 134,89.8 135,89.9 136,91.2 137,90.1 138,91.4 139,90.6 140,90.1 141,90.6 142,91.0 143,91.5 144,89.9 145,90.2 146,88.9 147,92.4 148,92.2 149,90.3 150,89.9 151,89.0 152,90.7 153,90.7 154,93.1 155,90.8 156,89.6 157,87.6 158,92.2 159,90.7 160,88.6 161,90.7 162,88.6 163,94.7 164,91.8 165,91.2 166,90.3 167,87.9 168,90.3 169,88.6 170,91.2 171,87.9 172,89.4 173,92.0 174,92.5 175,89.1 176,88.7 177,91.6 178,91.5 179,89.3 180,89.7 181,89.7 182,89.1 183,89.7 184,92.0 185,91.3 186,93.0 187,90.4 188,90.3 189,89.3 190,90.4 191,88.9 192,88.4 193,91.3 194,92.2 195,91.5 196,92.1 197,90.8 198,89.6 199,90.6 200,90.1 201,89.2 202,88.5 203,88.7 204,90.5 205,90.7 206,89.9 207,92.2 208,90.7 209,91.2 210,92.0 211,89.5 212,88.1 213,91.4 214,89.7 215,92.1 216,90.9 217,91.7 218,91.4 219,88.0 220,91.4 221,89.7 222,89.6 223,90.0 224,91.4 225,91.6 226,91.7 227,88.5 228,89.8 229,87.6 230,90.4 231,91.2 232,89.6 233,90.8 234,90.8 235,91.7 236,89.5 237,89.5 238,89.6 239,92.6 240,91.8 241,90.4 242,90.8 243,90.6 244,90.7 245,90.2 246,90.1 247,89.0 248,89.7 249,92.5 250,91.1 251,90.6 252,90.2 253,90.6 254,90.9 255,89.7 256,90.7 257,90.8 258,89.6 259,89.6 260,89.3 261,89.2 262,91.6 263,87.7 264,90.2 265,89.8 266,89.8 267,90.6 268,91.8 269,90.6 270,90.3 271,89.8 272,90.3 273,91.6 274,90.0 275,89.1 276,88.9 277,89.0 278,88.7 279,91.6 280,90.6 281,89.8 282,91.7 283,89.0 284,90.5 285,90.3 286,87.2 287,86.8 288,87.2 289,88.9 290,88.9 291,85.3 292,87.4 293,85.0 294,84.3 295,83.4 296,82.9 297,80.4 298,80.7 299,79.8 300,81.3 301,82.8 302,83.2 303,79.2 304,77.4 305,79.0 306,78.5 307,82.3 308,81.0 309,79.9 310,82.5 311,82.6 312,80.7 313,82.7 314,83.8 315,84.8 316,85.7 317,85.8 318,87.0 319,86.7 320,86.8 321,90.2 322,89.2 323,89.6 324,87.4 325,89.4 326,90.8 327,88.4 328,91.4 329,89.7 330,90.8 331,90.2 332,90.6 333,91.9 334,90.0 335,92.3 336,89.5 337,89.4 338,91.3 339,89.2 340,90.0 341,91.6 342,91.9 343,88.4 344,91.1 345,92.8 346,91.9 347,90.2 348,89.8 349,90.1 350,89.1 351,90.2 352,90.3 353,90.3 354,91.9 355,90.2 356,88.7 357,91.8 358,89.2 359,90.0 360,90.3 361,90.1 362,89.3 363,90.2 364,93.1 365,89.8 366,90.3 367,91.8 368,91.4 369,91.4 370,91.5 371,88.1 372,89.5 373,90.6 374,91.1 375,92.0 376,91.0 377,90.2 378,90.5 379,90.2 380,90.8 381,91.3 382,90.1 383,89.5 384,89.5 385,91.8 386,92.0 387,91.7 388,91.5 389,91.5 390,90.5 391,91.3 392,89.2 393,90.2 394,89.6 395,91.3 396,89.8 397,90.3 398,90.9 399,92.1 400,89.5 401,89.3 402,91.4 403,89.1 404,91.0 405,89.8 406,90.3 407,88.3 408,91.3 409,89.9 410,89.4 411,92.9 412,91.3 413,94.7 414,90.9 415,90.0 416,90.6 417,92.4 418,90.4 419,91.0 420,91.1 421,89.3 422,90.6 423,89.8 424,88.9 425,91.5 426,91.2 427,90.5 428,89.3 429,88.0 430,91.0 431,90.3 432,88.4 433,90.3 434,88.6 435,90.4 436,90.6 437,90.8 438,90.6 439,90.6 440,89.0 441,89.9 442,89.8 443,90.1 444,90.7 445,91.1 446,92.3 447,87.3 448,90.8 449,90.1 450,93.1 451,91.5 452,88.3 453,90.8 454,89.7 455,91.5 456,89.0 457,90.2 458,90.1 459,90.2 460,89.6 461,88.1 462,90.8 463,91.5 464,90.2 465,89.1 466,90.5 467,90.9 468,90.0 469,90.2 470,91.9 471,88.9 472,89.6 473,87.9 474,89.4 475,89.3 476,89.1 477,89.4 478,92.4 479,90.0 480,90.1 481,92.8 482,90.1 483,88.1 484,90.7 485,89.0 486,92.1 487,88.7 488,89.4 489,88.2 490,90.2 491,88.9 492,90.0 493,89.7 494,89.4 495,91.2 496,91.2 497,90.2 498,89.0 499,88.8 500,90.4 501,92.9 502,89.5 503,89.1 504,89.2 505,88.7 506,88.9 507,89.8 508,91.7 509,90.0 510,89.4 511,88.1 512,90.2 513,89.9 514,88.5 515,88.7 516,89.9 517,91.2 518,90.7 519,90.2 520,89.5 521,90.3 522,89.9 523,92.5 524,88.5 525,89.5 526,91.4 527,89.6 528,91.6 529,89.8 530,90.0 531,89.4 532,88.2 533,88.7 534,92.5 535,90.6 536,90.6 537,91.0 538,90.5 539,91.0 540,89.5 541,89.5 542,91.0 543,89.4 544,88.2 545,89.5 546,89.1 547,90.5 548,88.9 549,88.5 550,89.4 551,91.6 552,89.7 553,89.9 554,89.7 555,90.1 556,90.8 557,91.4 558,87.7 559,91.4 560,89.7 561,89.3 562,92.6 563,89.5 564,92.0 565,90.9 566,88.5 567,90.3 568,90.6 569,89.5 570,86.9 571,89.3 572,89.5 573,88.4 574,91.9 575,89.4 576,89.2 577,89.3 578,88.7 579,88.7 580,89.8 581,90.0 582,89.1 583,89.6 584,88.0 585,90.3 586,88.8 587,89.9 588,88.6 589,89.1 590,89.9 591,88.2 592,92.6 593,89.6 594,89.6 595,88.8 596,91.6 597,91.3 598,90.0 599,88.0 600,89.1 601,90.4 602,89.1 603,88.3 604,88.3 605,88.8 606,89.7 607,88.9 608,89.7 609,93.1 610,91.8 611,88.5 612,90.1 613,89.8 614,89.6 615,91.0 616,89.3 617,89.3 618,89.3 619,89.6 620,91.3 621,90.7 622,88.1 623,89.2 624,88.8 625,90.7 626,90.0 627,90.8 628,89.7 629,87.5 630,90.3 631,90.1 632,90.4 633,88.2 634,89.9 635,89.0 636,89.0 637,90.2 638,90.2 639,88.8 640,87.8 641,86.9 642,89.2 643,91.2 644,89.8 645,87.2 646,88.8 647,90.4 648,91.9 649,91.3 650,90.3 651,90.1 652,88.6 653,89.3 654,89.5 655,89.0 656,90.0 657,89.4 658,90.3 659,91.6 660,90.8 661,90.4 662,89.6 663,88.1 664,89.8 665,90.6 666,88.7 667,91.5 668,89.6 669,90.4 670,89.6 671,88.5 672,92.4 673,88.6 674,91.1 675,89.3 676,90.3 677,89.0 678,89.5 679,91.1 680,92.3 681,89.0 682,90.0 683,91.1 684,89.2 685,90.9 686,89.1 687,90.7 688,90.5 689,91.5 690,90.4 691,88.6 692,90.8 693,88.8 694,91.2 695,92.6 696,92.6 697,93.0 698,97.3 699,97.8 700,96.5 701,96.3 702,96.4 703,92.2 704,91.3 705,90.0 706,88.1 707,89.4 708,90.5 709,90.3 710,89.8 711,87.5 712,91.5 713,90.9 714,91.2 715,91.6 716,89.5 717,89.3 718,90.4 719,92.0 720,88.0 721,89.7 722,89.1 723,90.7 724,91.8 725,89.6 726,88.5 727,90.0 728,89.6 729,88.1 730,91.0 731,89.3 732,90.8 733,88.4 734,91.3 735,88.2 736,91.2 737,87.8 738,91.6 739,89.5 740,88.1 741,89.7 742,90.3 743,88.7 744,89.3 745,90.2 746,89.7 747,86.2 748,89.4 749,90.4 750,90.3 751,91.1 752,89.1 753,93.0 754,90.8 755,90.3 756,91.2 757,91.0 758,90.0 759,89.1 760,91.1 761,90.4 762,87.6 763,88.5 764,90.4 765,90.0 766,90.2 767,90.6 768,90.0 769,91.7 770,89.1 771,89.3 772,90.2 773,90.7 774,90.7 775,91.5 776,89.2 777,91.1 778,90.3 779,88.5 780,89.6 781,92.2 782,90.7 783,89.1 784,86.8 785,88.8 786,88.8 787,89.8 788,92.4 789,90.6 790,90.0 791,88.5 792,88.2 793,89.4 794,89.1 795,93.2 796,89.1 797,88.9 798,91.0 799,89.7 800,88.1 801,91.1 802,89.2 803,88.0 804,89.9 805,90.1 806,89.1 807,90.4 808,90.5 809,88.5 810,87.0 811,86.6 812,89.3 813,91.0 814,90.7 815,91.2 816,91.7 817,89.5 818,90.7 819,87.6 820,90.3 821,89.9 822,89.3 823,88.9 824,88.1 825,89.6 826,90.9 827,89.0 828,90.0 829,88.6 830,89.7 831,88.2 832,89.8 833,89.1 834,89.7 835,88.6 836,87.9 837,88.9 838,90.6 839,91.2 840,88.9 841,90.3 842,90.2 843,89.8 844,87.4 845,89.7 846,88.1 847,90.7 848,90.2 849,90.0 850,86.2 851,90.0 852,90.1 853,87.7 854,90.4 855,89.3 856,89.0 857,88.3 858,88.0 859,88.7 860,92.9 861,89.4 862,89.4 863,88.4 864,88.4 865,88.5 866,88.1 867,90.2 868,88.8 869,90.2 870,87.7 871,90.2 872,89.1 873,89.9 874,89.0 875,88.0 876,90.6 877,88.6 878,88.9 879,88.0 880,89.3 881,88.6 882,89.4 883,89.5 884,88.2 885,87.4 886,89.6 887,90.2 888,89.9 889,87.7 890,89.8 891,89.5 892,89.4 893,89.6 894,88.7 895,89.3 896,90.1 897,88.4 898,87.3 899,88.9 900,89.3 901,86.8 902,88.2 903,89.7 904,88.8 905,89.1 906,87.5 907,90.1 908,91.1 909,88.8 910,88.1 911,87.6 912,90.1 913,89.1 914,88.0 915,90.5 916,89.9 917,89.7 918,86.9 919,88.9 920,89.8 921,87.5 922,90.1 923,90.7 924,90.2 925,88.1 926,88.2 927,90.1 928,90.2 929,90.5 930,90.4 931,88.9 932,88.5 933,86.8 934,89.9 935,91.7 936,88.5 937,88.4 938,89.8 939,89.5 940,87.4 941,88.2 942,87.7 943,91.4 944,88.2 945,90.1 946,91.3 947,91.3 948,90.7 949,91.0 950,87.6 951,88.6 952,88.2 953,88.7 954,92.2 955,87.0 956,89.7 957,87.6 958,90.7 959,90.6 960,88.5 961,91.6 962,89.2 963,90.6 964,89.5 965,88.4 966,88.6 967,89.0 968,89.8 969,89.3 970,91.9 971,88.9 972,88.6 973,88.3 974,88.2 975,87.4 976,88.0 977,90.2 978,89.2 979,89.0 980,89.6 981,90.5 982,89.9 983,90.1 984,88.5 985,88.9 986,88.3 987,89.1 988,88.2 989,88.8 990,89.0 991,89.0 992,88.9 993,88.7 994,90.8 995,88.8 996,88.0 997,89.5 998,88.0 999,88.0 1000,89.4 1001,87.3 1002,85.4 1003,89.7 1004,90.6 1005,87.3 1006,88.2 1007,90.0 1008,87.0 1009,88.3 1010,87.9 1011,89.1 1012,87.0 1013,90.4 1014,89.2 1015,89.8 1016,89.0 1017,86.9 1018,89.2 1019,87.8 1020,89.4 1021,88.4 1022,89.1 1023,89.2 1024,90.4 1025,90.4 1026,88.3 1027,89.5 1028,91.2 1029,90.1 1030,88.6 1031,89.4 1032,89.1 1033,90.6 1034,89.6 1035,90.0 1036,92.2 1037,87.9 1038,88.3 1039,87.5 1040,87.7 1041,90.6 1042,89.9 1043,91.6 1044,87.2 1045,88.6 1046,91.4 1047,90.9 1048,90.7 1049,90.7 1050,89.7 1051,89.6 1052,89.7 1053,90.7 1054,89.5 1055,90.1 1056,91.4 1057,88.3 1058,88.8 1059,90.4 1060,89.4 1061,89.5 1062,92.3 1063,90.2 1064,89.3 1065,91.1 1066,92.8 1067,88.4 1068,89.0 1069,89.9 1070,89.0 1071,92.4 1072,90.4 1073,89.3 1074,90.4 1075,88.9 1076,89.1 1077,90.0 1078,92.7 1079,87.2 1080,90.4 1081,91.5 1082,90.8 1083,92.2 1084,90.4 1085,90.1 1086,89.7 1087,88.9 1088,91.9 1089,88.5 1090,89.8 1091,89.3 1092,89.0 1093,87.3 1094,89.6 1095,90.3 1096,90.3 1097,91.2 1098,90.1 1099,89.6 1100,90.7 1101,91.2 1102,89.4 1103,88.7 1104,89.4 1105,91.9 1106,91.9 1107,89.7 1108,90.9 1109,91.9 1110,92.5 1111,90.2 1112,90.7 1113,92.8 1114,94.0 1115,93.0 1116,89.9 1117,91.8 1118,91.0 1119,91.3 1120,90.7 1121,90.9 1122,91.6 1123,93.8 1124,92.5 1125,92.2 1126,91.8 1127,90.9 1128,91.6 1129,93.4 1130,93.0 1131,94.4 1132,92.4 1133,92.1 1134,90.3 1135,92.8 1136,90.3 1137,94.2 1138,91.7 1139,92.5 1140,90.9 1141,92.0 1142,91.5 1143,94.1 1144,93.0 1145,91.4 1146,90.5 1147,92.8 1148,92.4 1149,91.7 1150,93.8 1151,92.9 1152,93.3" fill="none" stroke="#20ff20" stroke-width="1.1"/></svg>
<div style="left:763px;top:378px;width:1152px;height:55px;background:#f0f0f0;"></div>
<div style="left:913px;top:383px;width:99px;height:18px;background:#fff;border:1px solid #7a7a7a;box-sizing:border-box;"></div>
<div class="t" style="left:916.00px;top:385.00px;line-height:14px;font-size:11px;color:#000;font-family:'Liberation Sans',sans-serif;letter-spacing:-0.044px;">Bins/Pixel  4</div>
<div style="left:995.5px;top:384.5px;width:14.5px;height:15px;background:#f6f6f6;border:1px solid #c2c2c2;box-sizing:border-box;"></div>
<div style="left:996.5px;top:391.5px;width:12.5px;height:1px;background:#c2c2c2;"></div>
<svg style="left:995px;top:383px" width="16" height="18"><path d="M5 6.6 L8 3.5999999999999996 L11 6.6Z M5 11.4 L8 14.4 L11 11.4Z" fill="#222"/></svg>
<div style="left:1017px;top:383px;width:89px;height:18px;background:#fff;border:1px solid #7a7a7a;box-sizing:border-box;"></div>
<div class="t" style="left:1020.00px;top:385.00px;line-height:14px;font-size:11px;color:#000;font-family:'Liberation Sans',sans-serif;letter-spacing:-0.104px;">Start 200 Hz</div>
<div style="left:1089.5px;top:384.5px;width:14.5px;height:15px;background:#f6f6f6;border:1px solid #c2c2c2;box-sizing:border-box;"></div>
<div style="left:1090.5px;top:391.5px;width:12.5px;height:1px;background:#c2c2c2;"></div>
<svg style="left:1089px;top:383px" width="16" height="18"><path d="M5 6.6 L8 3.5999999999999996 L11 6.6Z M5 11.4 L8 14.4 L11 11.4Z" fill="#222"/></svg>
<div style="left:913px;top:410px;width:99px;height:18px;background:#f0f0f0;border:1px solid #cccccc;box-sizing:border-box;"></div>
<div class="t" style="left:916.00px;top:412.00px;line-height:14px;font-size:11px;color:#888;font-family:'Liberation Sans',sans-serif;letter-spacing:-0.249px;">JT65  2500  JT9</div>
<div style="left:995.5px;top:411.5px;width:14.5px;height:15px;background:#f6f6f6;border:1px solid #dcdcdc;box-sizing:border-box;"></div>
<div style="left:996.5px;top:418.5px;width:12.5px;height:1px;background:#dcdcdc;"></div>
<svg style="left:995px;top:410px" width="16" height="18"><path d="M5 6.6 L8 3.5999999999999996 L11 6.6Z M5 11.4 L8 14.4 L11 11.4Z" fill="#999"/></svg>
<div style="left:1017px;top:410px;width:89px;height:18px;background:#fff;border:1px solid #7a7a7a;box-sizing:border-box;"></div>
<div class="t" style="left:1020.00px;top:412.00px;line-height:14px;font-size:11px;color:#000;font-family:'Liberation Sans',sans-serif;letter-spacing:-0.054px;">N Avg 1</div>
<div style="left:1089.5px;top:411.5px;width:14.5px;height:15px;background:#f6f6f6;border:1px solid #c2c2c2;box-sizing:border-box;"></div>
<div style="left:1090.5px;top:418.5px;width:12.5px;height:1px;background:#c2c2c2;"></div>
<svg style="left:1089px;top:410px" width="16" height="18"><path d="M5 6.6 L8 3.5999999999999996 L11 6.6Z M5 11.4 L8 14.4 L11 11.4Z" fill="#222"/></svg>
<div style="left:1111px;top:380px;width:1px;height:53px;background:#a0a0a0;"></div>
<div style="left:1112px;top:380px;width:1px;height:53px;background:#fff;"></div>
<div style="left:1243px;top:380px;width:1px;height:53px;background:#a0a0a0;"></div>
<div style="left:1244px;top:380px;width:1px;height:53px;background:#fff;"></div>
<div class="t" style="left:1124.00px;top:385.50px;line-height:14px;font-size:11px;color:#000;font-family:'Liberation Sans',sans-serif;letter-spacing:-0.041px;">Palette</div>
<div style="left:1163px;top:382px;width:73px;height:21px;background:#e1e1e1;border:1px solid #adadad;box-sizing:border-box;"></div>
<div class="t" style="left:1178.50px;top:385.50px;line-height:14px;font-size:11px;color:#000;font-family:'Liberation Sans',sans-serif;letter-spacing:0.282px;">Adjust...</div>
<div style="left:1119px;top:409px;width:118px;height:20px;background:#e1e1e1;border:1px solid #adadad;box-sizing:border-box;"></div>
<div class="t" style="left:1123.00px;top:412.50px;line-height:14px;font-size:11px;color:#000;font-family:'Liberation Sans',sans-serif;letter-spacing:0.024px;">Default</div>
<svg style="left:1222px;top:415px" width="12" height="10"><path d="M2.0 3.0 L6 7.0 L10.0 3.0" fill="none" stroke="#444" stroke-width="1.0"/></svg>
<div style="left:1250px;top:386px;width:13px;height:13px;background:#fff;border:1px solid #333;box-sizing:border-box;"></div>
<svg style="left:1250px;top:386px" width="13" height="13" viewBox="0 0 13 13"><path d="M2.3 6 L5.6 9.5 L11.2 2.7" fill="none" stroke="#222" stroke-width="1.15"/></svg>
<div class="t" style="left:1267.00px;top:385.50px;line-height:14px;font-size:11px;color:#000;font-family:'Liberation Sans',sans-serif;letter-spacing:0.062px;">Flatten</div>
<div style="left:1307px;top:386px;width:13px;height:13px;background:#fff;border:1px solid #333;box-sizing:border-box;"></div>
<div class="t" style="left:1324.00px;top:385.50px;line-height:14px;font-size:11px;color:#000;font-family:'Liberation Sans',sans-serif;letter-spacing:-0.321px;">Ref Spec</div>
<div style="left:1250px;top:409px;width:123px;height:20px;background:#e1e1e1;border:1px solid #adadad;box-sizing:border-box;"></div>
<div class="t" style="left:1254.00px;top:412.50px;line-height:14px;font-size:11px;color:#000;font-family:'Liberation Sans',sans-serif;letter-spacing:-0.225px;">Cumulative</div>
<svg style="left:1358px;top:415px" width="12" height="10"><path d="M2.0 3.0 L6 7.0 L10.0 3.0" fill="none" stroke="#444" stroke-width="1.0"/></svg>
<div style="left:1378px;top:394px;width:150px;height:3px;background:#e7eaea;border:1px solid #d6d6d6;box-sizing:border-box;"></div>
<div style="left:1384px;top:381px;width:1px;height:4px;background:#c4c4c4;"></div>
<div style="left:1398px;top:381px;width:1px;height:4px;background:#c4c4c4;"></div>
<div style="left:1412px;top:381px;width:1px;height:4px;background:#c4c4c4;"></div>
<div style="left:1426px;top:381px;width:1px;height:4px;background:#c4c4c4;"></div>
<div style="left:1440px;top:381px;width:1px;height:4px;background:#c4c4c4;"></div>
<div style="left:1454px;top:381px;width:1px;height:4px;background:#c4c4c4;"></div>
<div style="left:1468px;top:381px;width:1px;height:4px;background:#c4c4c4;"></div>
<div style="left:1482px;top:381px;width:1px;height:4px;background:#c4c4c4;"></div>
<div style="left:1496px;top:381px;width:1px;height:4px;background:#c4c4c4;"></div>
<div style="left:1510px;top:381px;width:1px;height:4px;background:#c4c4c4;"></div>
<div style="left:1524px;top:381px;width:1px;height:4px;background:#c4c4c4;"></div>
<svg style="left:1433.5px;top:385.5px" width="12" height="20"><path d="M0.5 6 L6 0.5 L11.5 6 V19.5 H0.5Z" fill="#0078d7"/></svg>
<div style="left:1533px;top:394px;width:149px;height:3px;background:#e7eaea;border:1px solid #d6d6d6;box-sizing:border-box;"></div>
<div style="left:1538px;top:381px;width:1px;height:4px;background:#c4c4c4;"></div>
<div style="left:1552px;top:381px;width:1px;height:4px;background:#c4c4c4;"></div>
<div style="left:1566px;top:381px;width:1px;height:4px;background:#c4c4c4;"></div>
<div style="left:1580px;top:381px;width:1px;height:4px;background:#c4c4c4;"></div>
<div style="left:1594px;top:381px;width:1px;height:4px;background:#c4c4c4;"></div>
<div style="left:1608px;top:381px;width:1px;height:4px;background:#c4c4c4;"></div>
<div style="left:1622px;top:381px;width:1px;height:4px;background:#c4c4c4;"></div>
<div style="left:1636px;top:381px;width:1px;height:4px;background:#c4c4c4;"></div>
<div style="left:1650px;top:381px;width:1px;height:4px;background:#c4c4c4;"></div>
<div style="left:1664px;top:381px;width:1px;height:4px;background:#c4c4c4;"></div>
<div style="left:1678px;top:381px;width:1px;height:4px;background:#c4c4c4;"></div>
<svg style="left:1630px;top:385.5px" width="12" height="20"><path d="M0.5 6 L6 0.5 L11.5 6 V19.5 H0.5Z" fill="#0078d7"/></svg>
<div style="left:1378px;top:421px;width:150px;height:3px;background:#e7eaea;border:1px solid #d6d6d6;box-sizing:border-box;"></div>
<div style="left:1384px;top:408px;width:1px;height:4px;background:#c4c4c4;"></div>
<div style="left:1398px;top:408px;width:1px;height:4px;background:#c4c4c4;"></div>
<div style="left:1412px;top:408px;width:1px;height:4px;background:#c4c4c4;"></div>
<div style="left:1426px;top:408px;width:1px;height:4px;background:#c4c4c4;"></div>
<div style="left:1440px;top:408px;width:1px;height:4px;background:#c4c4c4;"></div>
<div style="left:1454px;top:408px;width:1px;height:4px;background:#c4c4c4;"></div>
<div style="left:1468px;top:408px;width:1px;height:4px;background:#c4c4c4;"></div>
<div style="left:1482px;top:408px;width:1px;height:4px;background:#c4c4c4;"></div>
<div style="left:1496px;top:408px;width:1px;height:4px;background:#c4c4c4;"></div>
<div style="left:1510px;top:408px;width:1px;height:4px;background:#c4c4c4;"></div>
<div style="left:1524px;top:408px;width:1px;height:4px;background:#c4c4c4;"></div>
<svg style="left:1447.5px;top:412.5px" width="12" height="20"><path d="M0.5 6 L6 0.5 L11.5 6 V19.5 H0.5Z" fill="#0078d7"/></svg>
<div style="left:1533px;top:421px;width:149px;height:3px;background:#e7eaea;border:1px solid #d6d6d6;box-sizing:border-box;"></div>
<div style="left:1538px;top:408px;width:1px;height:4px;background:#c4c4c4;"></div>
<div style="left:1552px;top:408px;width:1px;height:4px;background:#c4c4c4;"></div>
<div style="left:1566px;top:408px;width:1px;height:4px;background:#c4c4c4;"></div>
<div style="left:1580px;top:408px;width:1px;height:4px;background:#c4c4c4;"></div>
<div style="left:1594px;top:408px;width:1px;height:4px;background:#c4c4c4;"></div>
<div style="left:1608px;top:408px;width:1px;height:4px;background:#c4c4c4;"></div>
<div style="left:1622px;top:408px;width:1px;height:4px;background:#c4c4c4;"></div>
<div style="left:1636px;top:408px;width:1px;height:4px;background:#c4c4c4;"></div>
<div style="left:1650px;top:408px;width:1px;height:4px;background:#c4c4c4;"></div>
<div style="left:1664px;top:408px;width:1px;height:4px;background:#c4c4c4;"></div>
<div style="left:1678px;top:408px;width:1px;height:4px;background:#c4c4c4;"></div>
<svg style="left:1601.5px;top:412.5px" width="12" height="20"><path d="M0.5 6 L6 0.5 L11.5 6 V19.5 H0.5Z" fill="#0078d7"/></svg>
<div style="left:1687px;top:384px;width:80px;height:18px;background:#fff;border:1px solid #7a7a7a;box-sizing:border-box;"></div>
<div class="t" style="left:1692.00px;top:386.00px;line-height:14px;font-size:11px;color:#000;font-family:'Liberation Sans',sans-serif;letter-spacing:-0.275px;">Spec 30 %</div>
<div style="left:1750.5px;top:385.5px;width:14.5px;height:15px;background:#f6f6f6;border:1px solid #c2c2c2;box-sizing:border-box;"></div>
<div style="left:1751.5px;top:392.5px;width:12.5px;height:1px;background:#c2c2c2;"></div>
<svg style="left:1750px;top:384px" width="16" height="18"><path d="M5 6.6 L8 3.5999999999999996 L11 6.6Z M5 11.4 L8 14.4 L11 11.4Z" fill="#222"/></svg>
<div style="left:1687px;top:411px;width:80px;height:18px;background:#f0f0f0;border:1px solid #cccccc;box-sizing:border-box;"></div>
<div class="t" style="left:1694.00px;top:413.00px;line-height:14px;font-size:11px;color:#888;font-family:'Liberation Sans',sans-serif;letter-spacing:-0.517px;">Smooth  1</div>
<div style="left:1750.5px;top:412.5px;width:14.5px;height:15px;background:#f6f6f6;border:1px solid #dcdcdc;box-sizing:border-box;"></div>
<div style="left:1751.5px;top:419.5px;width:12.5px;height:1px;background:#dcdcdc;"></div>
<svg style="left:1750px;top:411px" width="16" height="18"><path d="M5 6.6 L8 3.5999999999999996 L11 6.6Z M5 11.4 L8 14.4 L11 11.4Z" fill="#999"/></svg>
<div style="left:761px;top:433px;width:1154px;height:4px;background:linear-gradient(90deg,#7c7c78 0,#94948c 6%,#848480 12%,#9a9890 18%,#80807c 26%,#8c8c88 33%,#8a8a86 34.2%,#a6bee8 35.5%,#aac2ea 58%,#8c98a8 59.5%,#4c5634 61%,#2e3422 66%,#505a34 70%,#20261a 76%,#48522e 82%,#3a4228 88%,#56603a 94%,#3e462a 100%);"></div>
<div style="left:762px;top:437px;width:1153px;height:603px;background:#f0f0f0;"></div>
<div style="left:762px;top:437px;width:1px;height:603px;background:#404448;"></div>
<div style="left:1914px;top:437px;width:1px;height:603px;background:#404448;"></div>
<div style="left:763px;top:437px;width:1151px;height:28px;background:#fff;"></div>
<div style="left:763px;top:465px;width:1151px;height:2px;background:#d4d4d4;"></div>
<div style="left:763px;top:467px;width:1151px;height:2px;background:#767676;"></div>
<div class="t" style="left:1308.50px;top:443.00px;line-height:16px;font-size:12px;color:#111;font-family:'Liberation Sans',sans-serif;letter-spacing:-0.779px;font-weight:bold;">PlutoSDR :: SDR Console v3.0.25</div>
<svg style="left:1785px;top:437px" width="125" height="28"><path d="M10 13.5 H20" stroke="#999" stroke-width="1" fill="none"/><rect x="55.5" y="8.5" width="9" height="9" fill="none" stroke="#999" stroke-width="1"/><path d="M101 8.5 L111 18.5 M111 8.5 L101 18.5" stroke="#999" stroke-width="1" fill="none"/></svg>
<div style="left:763px;top:469px;width:1151px;height:18px;background:#eaeef9;"></div>
<div class="t" style="left:822.30px;top:470.30px;line-height:14px;font-size:11px;color:#111;font-family:'Liberation Sans',sans-serif;letter-spacing:0.019px;">Home</div>
<div class="t" style="left:880.20px;top:470.30px;line-height:14px;font-size:11px;color:#111;font-family:'Liberation Sans',sans-serif;letter-spacing:0.452px;">View</div>
<div class="t" style="left:933.30px;top:470.30px;line-height:14px;font-size:11px;color:#111;font-family:'Liberation Sans',sans-serif;letter-spacing:-0.373px;">Receive</div>
<div class="t" style="left:1000.00px;top:470.30px;line-height:14px;font-size:11px;color:#111;font-family:'Liberation Sans',sans-serif;letter-spacing:0.047px;">Transmit</div>
<div class="t" style="left:1073.40px;top:470.30px;line-height:14px;font-size:11px;color:#111;font-family:'Liberation Sans',sans-serif;letter-spacing:-0.150px;">Rec/Playback</div>
<div class="t" style="left:1169.00px;top:470.30px;line-height:14px;font-size:11px;color:#111;font-family:'Liberation Sans',sans-serif;letter-spacing:0.127px;">Favourites</div>
<div class="t" style="left:1252.00px;top:470.30px;line-height:14px;font-size:11px;color:#111;font-family:'Liberation Sans',sans-serif;letter-spacing:0.245px;">Memories</div>
<div class="t" style="left:1331.00px;top:470.30px;line-height:14px;font-size:11px;color:#111;font-family:'Liberation Sans',sans-serif;letter-spacing:0.205px;">Tools</div>
<div class="t" style="left:1386.00px;top:470.30px;line-height:14px;font-size:11px;color:#111;font-family:'Liberation Sans',sans-serif;letter-spacing:0.292px;">Help</div>
<div style="left:764px;top:442px;width:41px;height:41px;background:#f1f1f1;border:1px solid #c6c6c6;border-radius:50%;box-sizing:border-box;"></div>
<svg style="left:764px;top:442px" width="41" height="41"><g fill="#d8ecff" stroke="#1a6fd0" stroke-width="1.2"><rect x="10" y="9" width="5" height="5"/><rect x="16" y="17" width="5" height="5"/><rect x="16" y="25.5" width="5" height="5"/></g><path d="M12.5 14 V28 H16 M12.5 19.5 H16 M18 11.5 H27 M24 19.5 H30 M24 28 H30" stroke="#777" stroke-width="1" fill="none"/></svg>
<svg style="left:812px;top:441px" width="170" height="22"><path d="M3 10 L10 3.5 L17 10 M5 9 V16.5 H15 V9" fill="#f4ead8" stroke="#555" stroke-width="1.2"/><rect x="8.5" y="11" width="3" height="5.5" fill="#d07010"/><circle cx="32" cy="10" r="7.2" fill="#fafafa" stroke="#bbb" stroke-width="1.4"/><path d="M30 6.5 L35 10 L30 13.5Z" fill="#aaa"/><circle cx="54" cy="10" r="7.2" fill="#fafafa" stroke="#333" stroke-width="1.5"/><rect x="51" y="7" width="6" height="6" fill="#222"/><circle cx="76" cy="10" r="7" fill="#2a48b8" stroke="#5878d8" stroke-width="1"/><path d="M76 6 V14 M72 10 H80" stroke="#fff" stroke-width="2.6"/><rect x="90.5" y="5" width="15" height="11" fill="#222"/><rect x="95" y="3" width="6" height="3" fill="#222"/><circle cx="98" cy="10.5" r="3.4" fill="#8898a8" stroke="#ddd" stroke-width="0.8"/><circle cx="120" cy="3.5" r="1.8" fill="#3868b8"/><path d="M120 6 L126 16 H114Z" fill="#5a9ac8" stroke="#2a5890" stroke-width="0.8"/><path d="M138 6.5 C143 3 148 6 146.5 13 " fill="none" stroke="#8ab0e8" stroke-width="3"/><path d="M134.5 6.5 L141 2.5 L141.5 10Z" fill="#8ab0e8"/><path d="M156 7.5 H162" stroke="#111" stroke-width="1.3"/><path d="M156 10 H162 L159 13.5Z" fill="#111"/></svg>
<svg style="left:1772px;top:469px" width="142" height="18"><rect x="3" y="-2" width="14" height="10" fill="#58a8e8" stroke="#8ab8d8" stroke-width="1"/><rect x="6" y="10" width="8" height="2" fill="#c0c8d0"/><rect x="26" y="-2" width="14" height="10" fill="#58a8e8" stroke="#8ab8d8" stroke-width="1"/><rect x="29" y="10" width="8" height="2" fill="#c0c8d0"/><path d="M48.5 1 V14" stroke="#c8c8c8"/><path d="M58 5 L61 1.5 L64 5 M58 9 L61 12.5 L64 9" stroke="#555" fill="none" stroke-width="1"/><ellipse cx="61" cy="7" rx="5" ry="7.5" fill="none" stroke="#aaa" stroke-width="0.8"/><path d="M110 5 H116 L113 8.5Z" fill="#111"/><circle cx="130" cy="7" r="6" fill="none" stroke="#c8c8c8" stroke-width="3" stroke-dasharray="2.4 2.3"/><circle cx="130" cy="7" r="4.5" fill="#e8e8e8" stroke="#c8c8c8"/><circle cx="130" cy="7" r="1.8" fill="#fff" stroke="#c0c0c0"/></svg>
<div class="t" style="left:1849.00px;top:468.20px;line-height:14px;font-size:11px;color:#111;font-family:'Liberation Sans',sans-serif;letter-spacing:-0.239px;">Style</div>
<div style="left:764px;top:487px;width:331px;height:20px;background:linear-gradient(#bccfdc,#cfdde9 55%,#dbe6f1);"></div>
<div class="t" style="left:766.20px;top:490.30px;line-height:14px;font-size:11px;color:#111;font-family:'Liberation Sans',sans-serif;letter-spacing:-0.540px;">Receive</div>
<svg style="left:1063.5px;top:495.25px" width="9" height="4.5"><path d="M0 0 H9 L4.5 4.5Z" fill="#111"/></svg>
<svg style="left:1079px;top:491px" width="12" height="12"><path d="M2 2 L10 10 M10 2 L2 10" stroke="#111" stroke-width="1.5" fill="none"/></svg>
<div style="left:763px;top:508px;width:315px;height:68px;background:#000;"></div>
<div class="t" style="left:765.60px;top:508.20px;line-height:15px;font-size:11.5px;color:#f0e020;font-family:'Liberation Sans',sans-serif;letter-spacing:-1.022px;">RX 1</div>
<div class="t" style="left:939.50px;top:507.70px;line-height:16px;font-size:12px;color:#f0e020;font-family:'Liberation Sans',sans-serif;letter-spacing:-0.157px;">200 - 3500 Hz</div>
<div class="t" style="left:769.5px;top:534px;line-height:36px;font-size:31px;font-family:'DejaVu Sans Mono',monospace;color:#fff;letter-spacing:-0.56px;-webkit-text-stroke:0.45px #fff;"><span style="color:#4a4a4a;-webkit-text-stroke:0.45px #4a4a4a">0.</span>432.542.000</div>
<div style="left:1079px;top:508px;width:16px;height:508px;background:#f0f0f0;"></div>
<div style="left:1079px;top:525px;width:15px;height:327px;background:#cdcdcd;"></div>
<svg style="left:1080.5px;top:511px" width="12" height="10"><path d="M2.4 6.8 L6 3.2 L9.6 6.8" fill="none" stroke="#505050" stroke-width="2.0"/></svg>
<svg style="left:1080.5px;top:1003px" width="12" height="10"><path d="M2.4 3.2 L6 6.8 L9.6 3.2" fill="none" stroke="#505050" stroke-width="2.0"/></svg>
<div style="left:766px;top:580px;width:250px;height:24px;background:#e4e4e4;border:1px solid #adadad;box-sizing:border-box;"></div>
<div class="t" style="left:774.00px;top:584.00px;line-height:16px;font-size:12px;color:#000;font-family:'Liberation Sans',sans-serif;letter-spacing:-0.576px;">Reproduktory (USB Advanced Audio Device)</div>
<svg style="left:1001.3px;top:590.75px" width="8" height="4.5"><path d="M0 0 H8 L4.0 4.5Z" fill="#111"/></svg>
<svg style="left:768px;top:617px" width="52" height="20"><rect x="2" y="15" width="3" height="1" fill="#555"/><rect x="2" y="13" width="3" height="1" fill="#555"/><rect x="2" y="11" width="3" height="1" fill="#555"/><rect x="2" y="9" width="3" height="1" fill="#555"/><rect x="2" y="7" width="3" height="1" fill="#555"/><rect x="2" y="5" width="3" height="1" fill="#555"/><rect x="6.5" y="15" width="3" height="1" fill="#555"/><rect x="6.5" y="13" width="3" height="1" fill="#555"/><rect x="6.5" y="11" width="3" height="1" fill="#555"/><rect x="6.5" y="9" width="3" height="1" fill="#555"/><rect x="11" y="15" width="3" height="1" fill="#555"/><rect x="11" y="13" width="3" height="1" fill="#555"/><rect x="11" y="11" width="3" height="1" fill="#555"/><rect x="15.5" y="15" width="3" height="1" fill="#555"/><rect x="15.5" y="13" width="3" height="1" fill="#555"/><rect x="15.5" y="11" width="3" height="1" fill="#555"/><rect x="15.5" y="9" width="3" height="1" fill="#555"/><path d="M33 8 H36 L41 3.5 V16.5 L36 12 H33Z" fill="#c8c8c8" stroke="#555" stroke-width="1"/><path d="M43 6 C45 8 45 12 43 14 M45.5 4 C48.5 7 48.5 13 45.5 16" fill="none" stroke="#48a848" stroke-width="1.1"/></svg>
<div style="left:847px;top:626px;width:134px;height:4px;background:linear-gradient(#c8c8c8,#f4f4f4);border:1px solid #c0c0c0;border-radius:2px;box-sizing:border-box;"></div>
<div style="left:847px;top:626px;width:17px;height:4px;background:#48b048;border-radius:2px;"></div>
<div style="left:864px;top:626px;width:42px;height:4px;background:#d0d0d0;"></div>
<div style="left:904px;top:616px;width:13px;height:18px;background:linear-gradient(#f4f4f4,#d8d8d8);border:1px solid #9a9a9a;border-radius:3px;box-sizing:border-box;"></div>
<div style="left:908.5px;top:620px;width:1px;height:9px;background:#9a9a9a;"></div>
<div style="left:911.5px;top:620px;width:1px;height:9px;background:#9a9a9a;"></div>
<div class="t" style="left:1004.60px;top:619.30px;line-height:16px;font-size:12px;color:#000;font-family:'Liberation Sans',sans-serif;letter-spacing:-1.348px;">48</div>
<div style="left:763px;top:642px;width:315px;height:18px;background:linear-gradient(90deg,#fff 0,#fff 23%,#f2f2f2 23.2%,#f0f0f0 48%,#ececec 48.2%,#eaeaea 75%,#e4e4e4 75.2%,#e2e2e2 100%);"></div>
<div class="t" style="left:765.60px;top:645.30px;line-height:15px;font-size:11.5px;color:#0a7ad0;font-family:'Liberation Sans',sans-serif;letter-spacing:-0.536px;font-weight:bold;">IF Display</div>
<svg style="left:1065.0px;top:647.75px" width="6" height="3.5"><path d="M0 0 H6 L3.0 3.5Z" fill="#111"/></svg>
<div style="left:763px;top:660px;width:315px;height:18px;background:linear-gradient(90deg,#fff 0,#fff 23%,#f2f2f2 23.2%,#f0f0f0 48%,#ececec 48.2%,#eaeaea 75%,#e4e4e4 75.2%,#e2e2e2 100%);"></div>
<div class="t" style="left:765.60px;top:663.30px;line-height:15px;font-size:11.5px;color:#0a7ad0;font-family:'Liberation Sans',sans-serif;letter-spacing:0.225px;font-weight:bold;">Mode</div>
<svg style="left:1065.0px;top:665.75px" width="6" height="3.5"><path d="M0 3.5 H6 L3.0 0Z" fill="#111"/></svg>
<div style="left:763px;top:678px;width:315px;height:43px;background:#000;"></div>
<div style="left:771px;top:688px;width:60px;height:23px;background:linear-gradient(#3a3a3a 0,#2c2c2c 40%,#060606 44%,#000 100%);border:1px solid #5a5a5a;box-sizing:border-box;overflow:hidden;"></div>
<div class="t" style="left:792.17px;top:692.10px;line-height:14px;font-size:11px;color:#fff;font-family:'Liberation Sans',sans-serif;">• • •</div>
<div style="left:834px;top:688px;width:60px;height:23px;background:linear-gradient(#3a3a3a 0,#2c2c2c 40%,#060606 44%,#000 100%);border:1px solid #5a5a5a;box-sizing:border-box;overflow:hidden;"></div>
<div class="t" style="left:846.50px;top:692.10px;line-height:14px;font-size:11px;color:#fff;font-family:'Liberation Sans',sans-serif;letter-spacing:0.213px;">Step ☰</div>
<div style="left:899px;top:688px;width:60px;height:23px;background:linear-gradient(#3a3a3a 0,#2c2c2c 40%,#060606 44%,#000 100%);border:1px solid #5a5a5a;box-sizing:border-box;overflow:hidden;"><div style="left:6%;top:44%;width:88%;height:118%;border-radius:50%;background:radial-gradient(closest-side,#a8a212 0,#8a8614 35%,#5a5a10 65%,rgba(40,40,0,0) 100%);"></div></div>
<div class="t" style="left:917.50px;top:691.10px;line-height:16px;font-size:12px;color:#fff;font-family:'Liberation Sans',sans-serif;letter-spacing:-1.168px;font-weight:bold;">USB</div>
<div style="left:763px;top:721px;width:315px;height:18px;background:linear-gradient(90deg,#fff 0,#fff 23%,#f2f2f2 23.2%,#f0f0f0 48%,#ececec 48.2%,#eaeaea 75%,#e4e4e4 75.2%,#e2e2e2 100%);"></div>
<div class="t" style="left:765.60px;top:724.30px;line-height:15px;font-size:11.5px;color:#0a7ad0;font-family:'Liberation Sans',sans-serif;letter-spacing:-0.503px;font-weight:bold;">Filter</div>
<svg style="left:1065.0px;top:726.75px" width="6" height="3.5"><path d="M0 3.5 H6 L3.0 0Z" fill="#111"/></svg>
<div style="left:763px;top:739px;width:315px;height:43px;background:#000;"></div>
<div style="left:771px;top:749px;width:60px;height:23px;background:linear-gradient(#3a3a3a 0,#2c2c2c 40%,#060606 44%,#000 100%);border:1px solid #5a5a5a;box-sizing:border-box;overflow:hidden;"></div>
<div class="t" style="left:792.17px;top:753.10px;line-height:14px;font-size:11px;color:#fff;font-family:'Liberation Sans',sans-serif;">• • •</div>
<div style="left:835px;top:749px;width:60px;height:23px;background:linear-gradient(#3a3a3a 0,#2c2c2c 40%,#060606 44%,#000 100%);border:1px solid #5a5a5a;box-sizing:border-box;overflow:hidden;"></div>
<div class="t" style="left:848.50px;top:753.10px;line-height:14px;font-size:11px;color:#ddd;font-family:'Liberation Sans',sans-serif;letter-spacing:-0.247px;">2.6kHz</div>
<div style="left:899px;top:749px;width:60px;height:23px;background:linear-gradient(#3a3a3a 0,#2c2c2c 40%,#060606 44%,#000 100%);border:1px solid #5a5a5a;box-sizing:border-box;overflow:hidden;"><div style="left:6%;top:44%;width:88%;height:118%;border-radius:50%;background:radial-gradient(closest-side,#a8a212 0,#8a8614 35%,#5a5a10 65%,rgba(40,40,0,0) 100%);"></div></div>
<div class="t" style="left:908.00px;top:752.10px;line-height:16px;font-size:12px;color:#fff;font-family:'Liberation Sans',sans-serif;letter-spacing:-0.137px;font-weight:bold;">QO-100</div>
<div style="left:763px;top:782px;width:315px;height:18px;background:linear-gradient(90deg,#fff 0,#fff 23%,#f2f2f2 23.2%,#f0f0f0 48%,#ececec 48.2%,#eaeaea 75%,#e4e4e4 75.2%,#e2e2e2 100%);"></div>
<div class="t" style="left:768.30px;top:785.30px;line-height:15px;font-size:11.5px;color:#0a7ad0;font-family:'Liberation Sans',sans-serif;letter-spacing:-0.536px;font-weight:bold;">Radio</div>
<svg style="left:1065.0px;top:787.75px" width="6" height="3.5"><path d="M0 3.5 H6 L3.0 0Z" fill="#111"/></svg>
<div style="left:766px;top:804px;width:73px;height:24px;background:#e1e1e1;border:1px solid #adadad;box-sizing:border-box;"></div>
<div class="t" style="left:801.00px;top:808.00px;line-height:16px;font-size:12px;color:#000;font-family:'Liberation Sans',sans-serif;letter-spacing:-0.893px;">Help</div>
<svg style="left:771px;top:808px" width="18" height="16"><circle cx="9" cy="8" r="5.3" fill="none" stroke="#f0e8d8" stroke-width="4.2"/><circle cx="9" cy="8" r="5.3" fill="none" stroke="#e07818" stroke-width="4.2" stroke-dasharray="4.2 4.1" transform="rotate(-22 9 8)"/><circle cx="9" cy="8" r="7.6" fill="none" stroke="#a85810" stroke-width="0.6"/></svg>
<div style="left:844px;top:804px;width:73px;height:24px;background:#e1e1e1;border:1px solid #adadad;box-sizing:border-box;"></div>
<div class="t" style="left:849.00px;top:807.50px;line-height:16px;font-size:12px;color:#000;font-family:'Liberation Sans',sans-serif;letter-spacing:0.300px;">•••</div>
<div class="t" style="left:871.50px;top:808.00px;line-height:16px;font-size:12px;color:#000;font-family:'Liberation Sans',sans-serif;letter-spacing:-0.726px;">Options</div>
<div style="left:766px;top:843px;width:37px;height:31px;background:#e1e1e1;border:1px solid #adadad;box-sizing:border-box;"></div>
<div class="t" style="left:776.00px;top:850.50px;line-height:16px;font-size:12px;color:#000;font-family:'Liberation Sans',sans-serif;letter-spacing:-1.165px;">RIT</div>
<div style="left:810px;top:842px;width:111px;height:33px;background:#000050;"></div>
<div class="t" style="left:813px;top:842.5px;line-height:34px;font-size:22.4px;font-family:'DejaVu Sans Mono',monospace;color:#c4c4c4;"><span>+</span><span style="color:#38383e">00.00</span>0</div>
<svg style="left:930px;top:849px" width="20" height="20"><path d="M5 7 C10 3 17 6 15.5 15" fill="none" stroke="#2a58d0" stroke-width="2.6"/><path d="M1.5 3 L3 11.5 L10 6Z" fill="#2a58d0"/></svg>
<div style="left:766px;top:879px;width:37px;height:31px;background:#e1e1e1;border:1px solid #adadad;box-sizing:border-box;"></div>
<div class="t" style="left:776.50px;top:886.50px;line-height:16px;font-size:12px;color:#000;font-family:'Liberation Sans',sans-serif;letter-spacing:-1.334px;">XIT</div>
<div style="left:810px;top:878px;width:111px;height:33px;background:#000050;"></div>
<div class="t" style="left:813px;top:878.5px;line-height:34px;font-size:22.4px;font-family:'DejaVu Sans Mono',monospace;color:#c4c4c4;"><span>+</span><span style="color:#38383e">00.00</span>0</div>
<svg style="left:930px;top:885px" width="20" height="20"><path d="M5 7 C10 3 17 6 15.5 15" fill="none" stroke="#2a58d0" stroke-width="2.6"/><path d="M1.5 3 L3 11.5 L10 6Z" fill="#2a58d0"/></svg>
<div style="left:816px;top:930px;width:153px;height:1px;background:#fff;"></div>
<div class="t" style="left:764.50px;top:931.00px;line-height:16px;font-size:12px;color:#000;font-family:'Liberation Sans',sans-serif;letter-spacing:-0.667px;">RX Filter:</div>
<svg style="left:819px;top:932.5px" width="10" height="12"><path d="M7.5 2 L3 6 L7.5 10" fill="none" stroke="#444" stroke-width="1.7"/></svg>
<svg style="left:955.5px;top:932.5px" width="10" height="12"><path d="M2.5 2 L7 6 L2.5 10" fill="none" stroke="#444" stroke-width="1.7"/></svg>
<div style="left:935px;top:931px;width:17px;height:16px;background:#cdcdcd;"></div>
<div class="t" style="left:975.60px;top:931.50px;line-height:16px;font-size:12px;color:#000;font-family:'Liberation Sans',sans-serif;letter-spacing:-1.064px;">100%</div>
<div class="t" style="left:764.50px;top:965.30px;line-height:16px;font-size:12px;color:#000;font-family:'Liberation Sans',sans-serif;letter-spacing:-1.098px;">RX Gain:</div>
<div style="left:816px;top:963px;width:81px;height:21px;background:#e4e4e4;border:1px solid #adadad;box-sizing:border-box;"></div>
<div class="t" style="left:819.50px;top:966.00px;line-height:16px;font-size:12px;color:#000;font-family:'Liberation Sans',sans-serif;letter-spacing:-0.603px;">Slow Attack</div>
<svg style="left:882px;top:969px" width="12" height="10"><path d="M2.0 3.0 L6 7.0 L10.0 3.0" fill="none" stroke="#333" stroke-width="1.1"/></svg>
<div style="left:816px;top:985px;width:153px;height:1px;background:#fff;"></div>
<div class="t" style="left:770.00px;top:986.00px;line-height:16px;font-size:12px;color:#000;font-family:'Liberation Sans',sans-serif;letter-spacing:-0.782px;">Manual:</div>
<svg style="left:819px;top:987.5px" width="10" height="12"><path d="M7.5 2 L3 6 L7.5 10" fill="none" stroke="#444" stroke-width="1.7"/></svg>
<svg style="left:955.5px;top:987.5px" width="10" height="12"><path d="M2.5 2 L7 6 L2.5 10" fill="none" stroke="#444" stroke-width="1.7"/></svg>
<div style="left:865px;top:987px;width:17px;height:15px;background:#cdcdcd;"></div>
<div class="t" style="left:975.60px;top:986.50px;line-height:16px;font-size:12px;color:#000;font-family:'Liberation Sans',sans-serif;letter-spacing:-1.675px;">16dB</div>
<div style="left:816px;top:1007px;width:153px;height:1px;background:#fff;"></div>
<div style="left:763px;top:1008px;width:316px;height:8px;overflow:hidden;">
<div class="t" style="left:7.00px;top:0.00px;line-height:16px;font-size:12px;color:#000;font-family:'Liberation Sans',sans-serif;">Visual:</div>
<svg style="left:56px;top:2.5px" width="10" height="12"><path d="M7.5 2 L3 6 L7.5 10" fill="none" stroke="#444" stroke-width="1.7"/></svg>
<svg style="left:192.5px;top:2.5px" width="10" height="12"><path d="M2.5 2 L7 6 L2.5 10" fill="none" stroke="#444" stroke-width="1.7"/></svg>
<div style="left:93px;top:0px;width:17px;height:10px;background:#cdcdcd;"></div>
<div class="t" style="left:212.60px;top:0.50px;line-height:16px;font-size:12px;color:#000;font-family:'Liberation Sans',sans-serif;">40dB</div>
</div>
<div style="left:763px;top:1016px;width:1151px;height:24px;background:#f0f0f0;"></div>
<div style="left:763px;top:1016px;width:1151px;height:1px;background:#fbfbfb;"></div>
<div class="t" style="left:771.20px;top:1020.80px;line-height:15px;font-size:11.5px;color:#666;font-family:'Liberation Sans',sans-serif;letter-spacing:-0.271px;">PlutoSDR, BW = 550 kHz</div>
<div class="t" style="left:1589.40px;top:1020.80px;line-height:15px;font-size:11.5px;color:#222;font-family:'Liberation Sans',sans-serif;letter-spacing:-0.677px;">. CPU: 2.7%</div>
<div style="left:1660px;top:1023px;width:70px;height:12px;background:#e6e6e6;border:1px solid #bcbcbc;box-sizing:border-box;"></div>
<div class="t" style="left:1744.00px;top:1020.80px;line-height:15px;font-size:11.5px;color:#222;font-family:'Liberation Sans',sans-serif;letter-spacing:-0.142px;">Audio: 38ms</div>
<div style="left:1821px;top:1023px;width:70px;height:12px;background:#e6e6e6;border:1px solid #bcbcbc;box-sizing:border-box;"></div>
<div style="left:1823.5px;top:1025px;width:45.5px;height:8px;background:#06b025;"></div>
<svg style="left:1900px;top:1026px" width="12" height="12"><g fill="#b8b8b8"><rect x="8" y="2" width="2" height="2"/><rect x="5" y="5" width="2" height="2"/><rect x="8" y="5" width="2" height="2"/><rect x="2" y="8" width="2" height="2"/><rect x="5" y="8" width="2" height="2"/><rect x="8" y="8" width="2" height="2"/></g></svg>
<svg style="left:1099px;top:487px" width="487" height="438" font-family="Liberation Sans,sans-serif"><defs>
    <linearGradient id="pbg" x1="0" y1="0" x2="0" y2="1"><stop offset="0" stop-color="#046404"/><stop offset="0.15" stop-color="#056205"/><stop offset="0.25" stop-color="#0b580e"/><stop offset="0.34" stop-color="#164a1a"/><stop offset="0.43" stop-color="#1c421f"/><stop offset="0.52" stop-color="#213a22"/><stop offset="0.62" stop-color="#243224"/><stop offset="0.73" stop-color="#262d26"/><stop offset="0.85" stop-color="#27282a"/><stop offset="1" stop-color="#25252c"/></linearGradient>
    <linearGradient id="trf" x1="0" y1="0" x2="0" y2="1"><stop offset="0" stop-color="#44547c"/><stop offset="0.35" stop-color="#3a4666"/><stop offset="0.7" stop-color="#2c2e44"/><stop offset="1" stop-color="#22222e"/></linearGradient>
    <linearGradient id="trf2" x1="0" y1="0" x2="0" y2="1"><stop offset="0" stop-color="#2c3c6c"/><stop offset="0.4" stop-color="#232a4c"/><stop offset="1" stop-color="#16162a"/></linearGradient>
    <linearGradient id="topbar" x1="0" y1="0" x2="1" y2="0"><stop offset="0" stop-color="#0ab40a"/><stop offset="0.1" stop-color="#0ab40a"/><stop offset="0.12" stop-color="#22a822"/><stop offset="0.2" stop-color="#30d030"/><stop offset="0.35" stop-color="#58f058"/><stop offset="0.5" stop-color="#70ff70"/><stop offset="0.65" stop-color="#58f058"/><stop offset="0.8" stop-color="#30d030"/><stop offset="0.88" stop-color="#22a822"/><stop offset="0.9" stop-color="#0ab40a"/><stop offset="1" stop-color="#0ab40a"/></linearGradient>
    <linearGradient id="botbar" x1="0" y1="0" x2="1" y2="0"><stop offset="0" stop-color="#1c6c1c"/><stop offset="0.04" stop-color="#289428"/><stop offset="0.18" stop-color="#40a848"/><stop offset="0.35" stop-color="#68b868"/><stop offset="0.5" stop-color="#80bc80"/><stop offset="0.65" stop-color="#68b868"/><stop offset="0.82" stop-color="#40a848"/><stop offset="0.96" stop-color="#289428"/><stop offset="1" stop-color="#1c6c1c"/></linearGradient>
    <linearGradient id="rul" x1="0" y1="0" x2="0" y2="1"><stop offset="0" stop-color="#606060"/><stop offset="1" stop-color="#1c1c1c"/></linearGradient>
    <clipPath id="cpb"><rect x="43.5" y="37" width="322.5" height="373"/></clipPath>
    </defs><rect width="487" height="438" fill="#000"/><rect y="129.5" width="487" height="140.5" fill="#0d0d0d"/><rect y="270" width="487" height="140" fill="#0a0a0c"/><text x="5.5" y="337.4" font-size="10" fill="#e4e4e4" textLength="10.3" lengthAdjust="spacingAndGlyphs">S1</text><text x="473.2" y="337.4" font-size="10" fill="#e4e4e4" textLength="10.3" lengthAdjust="spacingAndGlyphs">S1</text><polygon points="0,417 0.0,335.1 1.5,334.1 3.0,330.3 4.5,347.2 6.0,356.9 7.5,349.2 9.0,328.6 10.5,332.0 12.0,317.1 13.5,318.6 15.0,329.5 16.5,335.7 18.0,338.1 19.5,339.8 21.0,355.2 22.5,340.0 24.0,334.2 25.5,340.0 27.0,334.4 28.5,333.7 30.0,330.1 31.5,328.7 33.0,318.1 34.5,301.5 36.0,318.9 37.5,334.1 39.0,328.9 40.5,345.1 42.0,362.6 43.5,354.2 45.0,345.9 46.5,334.3 48.0,327.2 49.5,336.2 51.0,324.9 52.5,338.9 54.0,320.6 55.5,327.5 57.0,323.5 58.5,335.5 60.0,336.1 61.5,345.6 63.0,343.5 64.5,330.7 66.0,340.2 67.5,323.0 69.0,328.0 70.5,324.9 72.0,320.2 73.5,332.0 75.0,338.3 76.5,340.7 78.0,335.1 79.5,343.4 81.0,336.1 82.5,346.2 84.0,332.8 85.5,334.2 87.0,343.3 88.5,345.5 90.0,335.3 91.5,343.6 93.0,342.0 94.5,340.7 96.0,338.1 97.5,341.8 99.0,346.2 100.5,357.6 102.0,348.1 103.5,348.4 105.0,345.1 106.5,351.6 108.0,336.4 109.5,338.7 111.0,335.2 112.5,337.0 114.0,352.2 115.5,339.9 117.0,336.3 118.5,318.2 120.0,331.9 121.5,332.6 123.0,338.6 124.5,321.5 126.0,320.7 127.5,318.0 129.0,293.6 130.5,293.3 132.0,318.5 133.5,323.8 135.0,332.6 136.5,334.3 138.0,341.4 139.5,354.1 141.0,348.8 142.5,342.6 144.0,340.9 145.5,326.6 147.0,333.4 148.5,325.0 150.0,337.9 151.5,343.4 153.0,335.9 154.5,340.5 156.0,333.3 157.5,340.6 159.0,327.2 160.5,330.3 162.0,333.5 163.5,337.3 165.0,339.0 166.5,343.7 168.0,336.5 169.5,338.8 171.0,347.2 172.5,326.9 174.0,321.8 175.5,331.7 177.0,335.6 178.5,339.0 180.0,340.0 181.5,351.5 183.0,342.8 184.5,328.9 186.0,324.0 187.5,325.4 189.0,333.2 190.5,344.8 192.0,355.0 193.5,348.1 195.0,340.7 196.5,337.3 198.0,327.2 199.5,340.7 201.0,340.9 202.5,342.1 204.0,339.9 205.5,340.5 207.0,330.3 208.5,323.3 210.0,323.0 211.5,315.6 213.0,320.2 214.5,332.0 216.0,317.8 217.5,327.5 219.0,336.4 220.5,339.7 222.0,346.2 223.5,340.3 225.0,343.8 226.5,336.4 228.0,345.2 229.5,344.6 231.0,334.8 232.5,347.5 234.0,346.1 235.5,335.4 237.0,339.3 238.5,338.0 240.0,331.0 241.5,347.9 243.0,374.5 244.5,360.3 246.0,344.7 247.5,343.4 249.0,349.9 250.5,342.3 252.0,328.2 253.5,334.7 255.0,347.5 256.5,334.8 258.0,341.8 259.5,340.4 261.0,358.4 262.5,342.5 264.0,354.5 265.5,359.4 267.0,343.1 268.5,325.7 270.0,331.8 271.5,328.8 273.0,332.9 274.5,332.0 276.0,323.6 277.5,321.7 279.0,321.7 280.5,328.9 282.0,334.2 283.5,333.7 285.0,338.9 286.5,340.3 288.0,339.7 289.5,325.5 291.0,326.1 292.5,321.4 294.0,323.6 295.5,325.9 297.0,326.2 298.5,334.3 300.0,344.9 301.5,339.9 303.0,347.2 304.5,342.0 306.0,333.7 307.5,332.5 309.0,340.4 310.5,342.2 312.0,349.5 313.5,348.8 315.0,344.7 316.5,350.1 318.0,338.9 319.5,344.5 321.0,348.5 322.5,351.1 324.0,347.5 325.5,343.6 327.0,335.1 328.5,336.1 330.0,331.9 331.5,330.6 333.0,337.4 334.5,333.5 336.0,346.5 337.5,346.2 339.0,336.2 340.5,340.5 342.0,324.9 343.5,331.6 345.0,319.2 346.5,320.2 348.0,326.4 349.5,334.1 351.0,344.3 352.5,329.8 354.0,323.9 355.5,328.3 357.0,331.9 358.5,324.0 360.0,326.8 361.5,328.3 363.0,335.1 364.5,332.2 366.0,327.4 367.5,322.4 369.0,317.5 370.5,324.0 372.0,325.3 373.5,331.7 375.0,330.2 376.5,329.7 378.0,335.7 379.5,327.4 381.0,326.1 382.5,321.5 384.0,323.9 385.5,330.9 387.0,345.6 388.5,345.1 390.0,341.9 391.5,331.0 393.0,337.9 394.5,339.6 396.0,343.5 397.5,342.8 399.0,341.1 400.5,343.9 402.0,343.0 403.5,338.2 405.0,344.7 406.5,335.5 408.0,340.9 409.5,336.6 411.0,348.6 412.5,344.4 414.0,349.0 415.5,346.1 417.0,337.5 418.5,345.8 420.0,337.9 421.5,338.0 423.0,349.2 424.5,343.5 426.0,343.4 427.5,338.3 429.0,331.2 430.5,344.4 432.0,330.6 433.5,341.6 435.0,338.6 436.5,335.5 438.0,333.9 439.5,334.0 441.0,337.0 442.5,330.2 444.0,331.8 445.5,339.2 447.0,333.8 448.5,328.5 450.0,334.8 451.5,341.9 453.0,335.5 454.5,352.0 456.0,340.0 457.5,339.4 459.0,336.8 460.5,338.2 462.0,324.7 463.5,329.8 465.0,327.1 466.5,328.8 468.0,338.3 469.5,340.6 471.0,329.6 472.5,335.6 474.0,336.2 475.5,331.9 477.0,346.0 478.5,341.6 480.0,348.9 481.5,347.0 483.0,340.8 484.5,328.9 486.0,336.9 487.5,340.6 487,417" fill="url(#trf2)"/><rect x="43.5" y="37" width="322.5" height="373" fill="url(#pbg)"/><g clip-path="url(#cpb)"><polygon points="0,410 0.0,335.1 1.5,334.1 3.0,330.3 4.5,347.2 6.0,356.9 7.5,349.2 9.0,328.6 10.5,332.0 12.0,317.1 13.5,318.6 15.0,329.5 16.5,335.7 18.0,338.1 19.5,339.8 21.0,355.2 22.5,340.0 24.0,334.2 25.5,340.0 27.0,334.4 28.5,333.7 30.0,330.1 31.5,328.7 33.0,318.1 34.5,301.5 36.0,318.9 37.5,334.1 39.0,328.9 40.5,345.1 42.0,362.6 43.5,354.2 45.0,345.9 46.5,334.3 48.0,327.2 49.5,336.2 51.0,324.9 52.5,338.9 54.0,320.6 55.5,327.5 57.0,323.5 58.5,335.5 60.0,336.1 61.5,345.6 63.0,343.5 64.5,330.7 66.0,340.2 67.5,323.0 69.0,328.0 70.5,324.9 72.0,320.2 73.5,332.0 75.0,338.3 76.5,340.7 78.0,335.1 79.5,343.4 81.0,336.1 82.5,346.2 84.0,332.8 85.5,334.2 87.0,343.3 88.5,345.5 90.0,335.3 91.5,343.6 93.0,342.0 94.5,340.7 96.0,338.1 97.5,341.8 99.0,346.2 100.5,357.6 102.0,348.1 103.5,348.4 105.0,345.1 106.5,351.6 108.0,336.4 109.5,338.7 111.0,335.2 112.5,337.0 114.0,352.2 115.5,339.9 117.0,336.3 118.5,318.2 120.0,331.9 121.5,332.6 123.0,338.6 124.5,321.5 126.0,320.7 127.5,318.0 129.0,293.6 130.5,293.3 132.0,318.5 133.5,323.8 135.0,332.6 136.5,334.3 138.0,341.4 139.5,354.1 141.0,348.8 142.5,342.6 144.0,340.9 145.5,326.6 147.0,333.4 148.5,325.0 150.0,337.9 151.5,343.4 153.0,335.9 154.5,340.5 156.0,333.3 157.5,340.6 159.0,327.2 160.5,330.3 162.0,333.5 163.5,337.3 165.0,339.0 166.5,343.7 168.0,336.5 169.5,338.8 171.0,347.2 172.5,326.9 174.0,321.8 175.5,331.7 177.0,335.6 178.5,339.0 180.0,340.0 181.5,351.5 183.0,342.8 184.5,328.9 186.0,324.0 187.5,325.4 189.0,333.2 190.5,344.8 192.0,355.0 193.5,348.1 195.0,340.7 196.5,337.3 198.0,327.2 199.5,340.7 201.0,340.9 202.5,342.1 204.0,339.9 205.5,340.5 207.0,330.3 208.5,323.3 210.0,323.0 211.5,315.6 213.0,320.2 214.5,332.0 216.0,317.8 217.5,327.5 219.0,336.4 220.5,339.7 222.0,346.2 223.5,340.3 225.0,343.8 226.5,336.4 228.0,345.2 229.5,344.6 231.0,334.8 232.5,347.5 234.0,346.1 235.5,335.4 237.0,339.3 238.5,338.0 240.0,331.0 241.5,347.9 243.0,374.5 244.5,360.3 246.0,344.7 247.5,343.4 249.0,349.9 250.5,342.3 252.0,328.2 253.5,334.7 255.0,347.5 256.5,334.8 258.0,341.8 259.5,340.4 261.0,358.4 262.5,342.5 264.0,354.5 265.5,359.4 267.0,343.1 268.5,325.7 270.0,331.8 271.5,328.8 273.0,332.9 274.5,332.0 276.0,323.6 277.5,321.7 279.0,321.7 280.5,328.9 282.0,334.2 283.5,333.7 285.0,338.9 286.5,340.3 288.0,339.7 289.5,325.5 291.0,326.1 292.5,321.4 294.0,323.6 295.5,325.9 297.0,326.2 298.5,334.3 300.0,344.9 301.5,339.9 303.0,347.2 304.5,342.0 306.0,333.7 307.5,332.5 309.0,340.4 310.5,342.2 312.0,349.5 313.5,348.8 315.0,344.7 316.5,350.1 318.0,338.9 319.5,344.5 321.0,348.5 322.5,351.1 324.0,347.5 325.5,343.6 327.0,335.1 328.5,336.1 330.0,331.9 331.5,330.6 333.0,337.4 334.5,333.5 336.0,346.5 337.5,346.2 339.0,336.2 340.5,340.5 342.0,324.9 343.5,331.6 345.0,319.2 346.5,320.2 348.0,326.4 349.5,334.1 351.0,344.3 352.5,329.8 354.0,323.9 355.5,328.3 357.0,331.9 358.5,324.0 360.0,326.8 361.5,328.3 363.0,335.1 364.5,332.2 366.0,327.4 367.5,322.4 369.0,317.5 370.5,324.0 372.0,325.3 373.5,331.7 375.0,330.2 376.5,329.7 378.0,335.7 379.5,327.4 381.0,326.1 382.5,321.5 384.0,323.9 385.5,330.9 387.0,345.6 388.5,345.1 390.0,341.9 391.5,331.0 393.0,337.9 394.5,339.6 396.0,343.5 397.5,342.8 399.0,341.1 400.5,343.9 402.0,343.0 403.5,338.2 405.0,344.7 406.5,335.5 408.0,340.9 409.5,336.6 411.0,348.6 412.5,344.4 414.0,349.0 415.5,346.1 417.0,337.5 418.5,345.8 420.0,337.9 421.5,338.0 423.0,349.2 424.5,343.5 426.0,343.4 427.5,338.3 429.0,331.2 430.5,344.4 432.0,330.6 433.5,341.6 435.0,338.6 436.5,335.5 438.0,333.9 439.5,334.0 441.0,337.0 442.5,330.2 444.0,331.8 445.5,339.2 447.0,333.8 448.5,328.5 450.0,334.8 451.5,341.9 453.0,335.5 454.5,352.0 456.0,340.0 457.5,339.4 459.0,336.8 460.5,338.2 462.0,324.7 463.5,329.8 465.0,327.1 466.5,328.8 468.0,338.3 469.5,340.6 471.0,329.6 472.5,335.6 474.0,336.2 475.5,331.9 477.0,346.0 478.5,341.6 480.0,348.9 481.5,347.0 483.0,340.8 484.5,328.9 486.0,336.9 487.5,340.6 487,410" fill="url(#trf)"/></g><path d="M54 17.5 H437 M54 33.5 H437 M54 50.5 H437 M54 67.5 H437 M54 84.5 H437 M54 101.5 H437 M54 118.5 H437 M54 136.5 H437 M54 153.5 H437 M54 170.5 H437 M54 190.5 H437 M54 210.5 H437 M54 231.5 H437 M54 251.5 H437 M54 272.5 H437 M54 292.5 H437 M54 312.5 H437 M54 333.5 H437 M54 354.5 H437 M54 371.5 H437 M54 388.5 H437 " stroke="#8a8a8a" stroke-width="1" stroke-dasharray="1 3" fill="none" opacity="0.7"/><rect x="43.5" y="72.5" width="322.5" height="2" fill="#2aa82a"/><rect x="43.5" y="37" width="322.5" height="6.5" fill="url(#topbar)"/><rect x="43.5" y="410" width="322.5" height="6.5" fill="url(#botbar)"/><rect x="43.0" y="37" width="1.1" height="373" fill="#50b850"/><rect x="365.4" y="37" width="1.1" height="373" fill="#50b850"/><polyline points="0.0,335.1 1.5,334.1 3.0,330.3 4.5,347.2 6.0,356.9 7.5,349.2 9.0,328.6 10.5,332.0 12.0,317.1 13.5,318.6 15.0,329.5 16.5,335.7 18.0,338.1 19.5,339.8 21.0,355.2 22.5,340.0 24.0,334.2 25.5,340.0 27.0,334.4 28.5,333.7 30.0,330.1 31.5,328.7 33.0,318.1 34.5,301.5 36.0,318.9 37.5,334.1 39.0,328.9 40.5,345.1 42.0,362.6 43.5,354.2 45.0,345.9 46.5,334.3 48.0,327.2 49.5,336.2 51.0,324.9 52.5,338.9 54.0,320.6 55.5,327.5 57.0,323.5 58.5,335.5 60.0,336.1 61.5,345.6 63.0,343.5 64.5,330.7 66.0,340.2 67.5,323.0 69.0,328.0 70.5,324.9 72.0,320.2 73.5,332.0 75.0,338.3 76.5,340.7 78.0,335.1 79.5,343.4 81.0,336.1 82.5,346.2 84.0,332.8 85.5,334.2 87.0,343.3 88.5,345.5 90.0,335.3 91.5,343.6 93.0,342.0 94.5,340.7 96.0,338.1 97.5,341.8 99.0,346.2 100.5,357.6 102.0,348.1 103.5,348.4 105.0,345.1 106.5,351.6 108.0,336.4 109.5,338.7 111.0,335.2 112.5,337.0 114.0,352.2 115.5,339.9 117.0,336.3 118.5,318.2 120.0,331.9 121.5,332.6 123.0,338.6 124.5,321.5 126.0,320.7 127.5,318.0 129.0,293.6 130.5,293.3 132.0,318.5 133.5,323.8 135.0,332.6 136.5,334.3 138.0,341.4 139.5,354.1 141.0,348.8 142.5,342.6 144.0,340.9 145.5,326.6 147.0,333.4 148.5,325.0 150.0,337.9 151.5,343.4 153.0,335.9 154.5,340.5 156.0,333.3 157.5,340.6 159.0,327.2 160.5,330.3 162.0,333.5 163.5,337.3 165.0,339.0 166.5,343.7 168.0,336.5 169.5,338.8 171.0,347.2 172.5,326.9 174.0,321.8 175.5,331.7 177.0,335.6 178.5,339.0 180.0,340.0 181.5,351.5 183.0,342.8 184.5,328.9 186.0,324.0 187.5,325.4 189.0,333.2 190.5,344.8 192.0,355.0 193.5,348.1 195.0,340.7 196.5,337.3 198.0,327.2 199.5,340.7 201.0,340.9 202.5,342.1 204.0,339.9 205.5,340.5 207.0,330.3 208.5,323.3 210.0,323.0 211.5,315.6 213.0,320.2 214.5,332.0 216.0,317.8 217.5,327.5 219.0,336.4 220.5,339.7 222.0,346.2 223.5,340.3 225.0,343.8 226.5,336.4 228.0,345.2 229.5,344.6 231.0,334.8 232.5,347.5 234.0,346.1 235.5,335.4 237.0,339.3 238.5,338.0 240.0,331.0 241.5,347.9 243.0,374.5 244.5,360.3 246.0,344.7 247.5,343.4 249.0,349.9 250.5,342.3 252.0,328.2 253.5,334.7 255.0,347.5 256.5,334.8 258.0,341.8 259.5,340.4 261.0,358.4 262.5,342.5 264.0,354.5 265.5,359.4 267.0,343.1 268.5,325.7 270.0,331.8 271.5,328.8 273.0,332.9 274.5,332.0 276.0,323.6 277.5,321.7 279.0,321.7 280.5,328.9 282.0,334.2 283.5,333.7 285.0,338.9 286.5,340.3 288.0,339.7 289.5,325.5 291.0,326.1 292.5,321.4 294.0,323.6 295.5,325.9 297.0,326.2 298.5,334.3 300.0,344.9 301.5,339.9 303.0,347.2 304.5,342.0 306.0,333.7 307.5,332.5 309.0,340.4 310.5,342.2 312.0,349.5 313.5,348.8 315.0,344.7 316.5,350.1 318.0,338.9 319.5,344.5 321.0,348.5 322.5,351.1 324.0,347.5 325.5,343.6 327.0,335.1 328.5,336.1 330.0,331.9 331.5,330.6 333.0,337.4 334.5,333.5 336.0,346.5 337.5,346.2 339.0,336.2 340.5,340.5 342.0,324.9 343.5,331.6 345.0,319.2 346.5,320.2 348.0,326.4 349.5,334.1 351.0,344.3 352.5,329.8 354.0,323.9 355.5,328.3 357.0,331.9 358.5,324.0 360.0,326.8 361.5,328.3 363.0,335.1 364.5,332.2 366.0,327.4 367.5,322.4 369.0,317.5 370.5,324.0 372.0,325.3 373.5,331.7 375.0,330.2 376.5,329.7 378.0,335.7 379.5,327.4 381.0,326.1 382.5,321.5 384.0,323.9 385.5,330.9 387.0,345.6 388.5,345.1 390.0,341.9 391.5,331.0 393.0,337.9 394.5,339.6 396.0,343.5 397.5,342.8 399.0,341.1 400.5,343.9 402.0,343.0 403.5,338.2 405.0,344.7 406.5,335.5 408.0,340.9 409.5,336.6 411.0,348.6 412.5,344.4 414.0,349.0 415.5,346.1 417.0,337.5 418.5,345.8 420.0,337.9 421.5,338.0 423.0,349.2 424.5,343.5 426.0,343.4 427.5,338.3 429.0,331.2 430.5,344.4 432.0,330.6 433.5,341.6 435.0,338.6 436.5,335.5 438.0,333.9 439.5,334.0 441.0,337.0 442.5,330.2 444.0,331.8 445.5,339.2 447.0,333.8 448.5,328.5 450.0,334.8 451.5,341.9 453.0,335.5 454.5,352.0 456.0,340.0 457.5,339.4 459.0,336.8 460.5,338.2 462.0,324.7 463.5,329.8 465.0,327.1 466.5,328.8 468.0,338.3 469.5,340.6 471.0,329.6 472.5,335.6 474.0,336.2 475.5,331.9 477.0,346.0 478.5,341.6 480.0,348.9 481.5,347.0 483.0,340.8 484.5,328.9 486.0,336.9 487.5,340.6 486.2,340.6 486.2,417" fill="none" stroke="#cfcfcf" stroke-width="1.2" stroke-linejoin="round"/><text x="5.5" y="21.0" font-size="10" fill="#e4e4e4" textLength="16.9" lengthAdjust="spacingAndGlyphs">+45</text><text x="466.6" y="21.0" font-size="10" fill="#e4e4e4" textLength="16.9" lengthAdjust="spacingAndGlyphs">+45</text><text x="5.5" y="37.8" font-size="10" fill="#e4e4e4" textLength="16.9" lengthAdjust="spacingAndGlyphs">+40</text><text x="466.6" y="37.8" font-size="10" fill="#e4e4e4" textLength="16.9" lengthAdjust="spacingAndGlyphs">+40</text><text x="5.5" y="54.7" font-size="10" fill="#e4e4e4" textLength="16.9" lengthAdjust="spacingAndGlyphs">+35</text><text x="466.6" y="54.7" font-size="10" fill="#e4e4e4" textLength="16.9" lengthAdjust="spacingAndGlyphs">+35</text><text x="5.5" y="71.7" font-size="10" fill="#e4e4e4" textLength="16.9" lengthAdjust="spacingAndGlyphs">+30</text><text x="466.6" y="71.7" font-size="10" fill="#e4e4e4" textLength="16.9" lengthAdjust="spacingAndGlyphs">+30</text><text x="5.5" y="88.7" font-size="10" fill="#e4e4e4" textLength="16.9" lengthAdjust="spacingAndGlyphs">+25</text><text x="466.6" y="88.7" font-size="10" fill="#e4e4e4" textLength="16.9" lengthAdjust="spacingAndGlyphs">+25</text><text x="5.5" y="105.7" font-size="10" fill="#e4e4e4" textLength="16.9" lengthAdjust="spacingAndGlyphs">+20</text><text x="466.6" y="105.7" font-size="10" fill="#e4e4e4" textLength="16.9" lengthAdjust="spacingAndGlyphs">+20</text><text x="5.5" y="122.8" font-size="10" fill="#e4e4e4" textLength="16.9" lengthAdjust="spacingAndGlyphs">+15</text><text x="466.6" y="122.8" font-size="10" fill="#e4e4e4" textLength="16.9" lengthAdjust="spacingAndGlyphs">+15</text><text x="5.5" y="139.9" font-size="10" fill="#e4e4e4" textLength="16.9" lengthAdjust="spacingAndGlyphs">+10</text><text x="466.6" y="139.9" font-size="10" fill="#e4e4e4" textLength="16.9" lengthAdjust="spacingAndGlyphs">+10</text><text x="5.5" y="157.0" font-size="10" fill="#e4e4e4" textLength="11.7" lengthAdjust="spacingAndGlyphs">+5</text><text x="471.8" y="157.0" font-size="10" fill="#e4e4e4" textLength="11.7" lengthAdjust="spacingAndGlyphs">+5</text><text x="5.5" y="173.9" font-size="10" fill="#e4e4e4" textLength="10.3" lengthAdjust="spacingAndGlyphs">S9</text><text x="473.2" y="173.9" font-size="10" fill="#e4e4e4" textLength="10.3" lengthAdjust="spacingAndGlyphs">S9</text><text x="5.5" y="194.9" font-size="10" fill="#e4e4e4" textLength="10.3" lengthAdjust="spacingAndGlyphs">S8</text><text x="473.2" y="194.9" font-size="10" fill="#e4e4e4" textLength="10.3" lengthAdjust="spacingAndGlyphs">S8</text><text x="5.5" y="214.9" font-size="10" fill="#e4e4e4" textLength="10.3" lengthAdjust="spacingAndGlyphs">S7</text><text x="473.2" y="214.9" font-size="10" fill="#e4e4e4" textLength="10.3" lengthAdjust="spacingAndGlyphs">S7</text><text x="5.5" y="235.4" font-size="10" fill="#e4e4e4" textLength="10.3" lengthAdjust="spacingAndGlyphs">S6</text><text x="473.2" y="235.4" font-size="10" fill="#e4e4e4" textLength="10.3" lengthAdjust="spacingAndGlyphs">S6</text><text x="5.5" y="255.4" font-size="10" fill="#e4e4e4" textLength="10.3" lengthAdjust="spacingAndGlyphs">S5</text><text x="473.2" y="255.4" font-size="10" fill="#e4e4e4" textLength="10.3" lengthAdjust="spacingAndGlyphs">S5</text><text x="5.5" y="275.9" font-size="10" fill="#e4e4e4" textLength="10.3" lengthAdjust="spacingAndGlyphs">S4</text><text x="473.2" y="275.9" font-size="10" fill="#e4e4e4" textLength="10.3" lengthAdjust="spacingAndGlyphs">S4</text><text x="5.5" y="296.4" font-size="10" fill="#e4e4e4" textLength="10.3" lengthAdjust="spacingAndGlyphs">S3</text><text x="473.2" y="296.4" font-size="10" fill="#e4e4e4" textLength="10.3" lengthAdjust="spacingAndGlyphs">S3</text><text x="5.5" y="316.9" font-size="10" fill="#e4e4e4" textLength="10.3" lengthAdjust="spacingAndGlyphs">S2</text><text x="473.2" y="316.9" font-size="10" fill="#e4e4e4" textLength="10.3" lengthAdjust="spacingAndGlyphs">S2</text><text x="5.5" y="357.9" font-size="10" fill="#a8b0c4" textLength="10.3" lengthAdjust="spacingAndGlyphs">S0</text><text x="473.2" y="357.9" font-size="10" fill="#a8b0c4" textLength="10.3" lengthAdjust="spacingAndGlyphs">S0</text><text x="5.5" y="375.4" font-size="10" fill="#a8b0c4" textLength="22.8" lengthAdjust="spacingAndGlyphs">-5 dB</text><text x="460.7" y="375.4" font-size="10" fill="#a8b0c4" textLength="22.8" lengthAdjust="spacingAndGlyphs">-5 dB</text><text x="5.5" y="392.4" font-size="10" fill="#a8b0c4" textLength="28.0" lengthAdjust="spacingAndGlyphs">-10 dB</text><text x="455.5" y="392.4" font-size="10" fill="#a8b0c4" textLength="28.0" lengthAdjust="spacingAndGlyphs">-10 dB</text><rect x="60" y="13" width="289" height="8" fill="#000"/><text x="65.5" y="24" font-size="18.5" fill="#fff" font-family="DejaVu Sans,sans-serif" textLength="23">S4</text><rect x="51" y="16" width="1" height="1" fill="#666"/><rect x="55" y="16" width="1" height="1" fill="#666"/><defs><linearGradient id="smb" x1="0" x2="1" y1="0" y2="0"><stop offset="0" stop-color="#3a3a3a"/><stop offset="0.45" stop-color="#5a5a50"/><stop offset="0.55" stop-color="#7a7a50"/><stop offset="0.8" stop-color="#8a8448"/><stop offset="1" stop-color="#a8a440"/></linearGradient></defs><rect x="124" y="5.5" width="52" height="7.5" fill="url(#smb)"/><circle cx="179.20000000000005" cy="9.2" r="3.4" fill="#f0e830"/><rect x="124" y="18" width="107" height="1.2" fill="#e8e020"/><rect x="233" y="18" width="114" height="1.2" fill="#e03030"/><text x="154.5999999999999" y="28.799999999999955" font-size="8.5" font-weight="bold" fill="#e8e8e8" text-anchor="middle" font-family="DejaVu Sans Mono,monospace">1</text><text x="173.29999999999995" y="28.799999999999955" font-size="8.5" font-weight="bold" fill="#e8e8e8" text-anchor="middle" font-family="DejaVu Sans Mono,monospace">3</text><text x="192" y="28.799999999999955" font-size="8.5" font-weight="bold" fill="#e8e8e8" text-anchor="middle" font-family="DejaVu Sans Mono,monospace">5</text><text x="211" y="28.799999999999955" font-size="8.5" font-weight="bold" fill="#e8e8e8" text-anchor="middle" font-family="DejaVu Sans Mono,monospace">7</text><text x="229.70000000000005" y="28.799999999999955" font-size="8.5" font-weight="bold" fill="#e8e8e8" text-anchor="middle" font-family="DejaVu Sans Mono,monospace">9</text><text x="262" y="28.799999999999955" font-size="8.5" font-weight="bold" fill="#e8e8e8" text-anchor="middle" font-family="DejaVu Sans Mono,monospace">+20</text><text x="294" y="28.799999999999955" font-size="8.5" font-weight="bold" fill="#e8e8e8" text-anchor="middle" font-family="DejaVu Sans Mono,monospace">+40</text><text x="326" y="28.799999999999955" font-size="8.5" font-weight="bold" fill="#e8e8e8" text-anchor="middle" font-family="DejaVu Sans Mono,monospace">+60</text><rect x="196.29999999999995" y="46.700000000000045" width="16.5" height="15" rx="2.5" fill="#0a4a0c"/><text x="204.5" y="58.5" font-size="10.5" fill="#f0f0f0" text-anchor="middle">1</text><rect x="0" y="417" width="487" height="11" fill="url(#rul)"/><path d="M3.4 417 v2.5 M13.1 417 v2.5 M22.9 417 v4.5 M32.7 417 v2.5 M42.4 417 v2.5 M52.2 417 v2.5 M62.0 417 v2.5 M71.8 417 v3.5 M81.5 417 v2.5 M91.3 417 v2.5 M101.1 417 v2.5 M110.8 417 v2.5 M120.6 417 v4.5 M130.4 417 v2.5 M140.1 417 v2.5 M149.9 417 v2.5 M159.7 417 v2.5 M169.5 417 v3.5 M179.2 417 v2.5 M189.0 417 v2.5 M198.8 417 v2.5 M208.5 417 v2.5 M218.3 417 v4.5 M228.1 417 v2.5 M237.8 417 v2.5 M247.6 417 v2.5 M257.4 417 v2.5 M267.2 417 v3.5 M276.9 417 v2.5 M286.7 417 v2.5 M296.5 417 v2.5 M306.2 417 v2.5 M316.0 417 v4.5 M325.8 417 v2.5 M335.5 417 v2.5 M345.3 417 v2.5 M355.1 417 v2.5 M364.9 417 v3.5 M374.6 417 v2.5 M384.4 417 v2.5 M394.2 417 v2.5 M403.9 417 v2.5 M413.7 417 v4.5 M423.5 417 v2.5 M433.2 417 v2.5 M443.0 417 v2.5 M452.8 417 v2.5 M462.6 417 v3.5 M472.3 417 v2.5 M482.1 417 v2.5 " stroke="#c8c8c8" stroke-width="1.1" fill="none"/><text x="22.9" y="434.29999999999995" font-size="10.5" fill="#fff" text-anchor="middle" textLength="34.5">432.542</text><text x="120.6" y="434.29999999999995" font-size="10.5" fill="#fff" text-anchor="middle" textLength="34.5">432.543</text><text x="218.3" y="434.29999999999995" font-size="10.5" fill="#fff" text-anchor="middle" textLength="34.5">432.544</text><text x="316.0" y="434.29999999999995" font-size="10.5" fill="#fff" text-anchor="middle" textLength="34.5">432.545</text><text x="413.7" y="434.29999999999995" font-size="10.5" fill="#fff" text-anchor="middle" textLength="34.5">432.546</text><rect x="230.5" y="418" width="3" height="1.5" fill="#d02020"/></svg>
<div style="left:1099px;top:925px;width:487px;height:6px;background:#f4f4f4;"></div>
<svg style="left:1310px;top:926px" width="64" height="4"><path d="M0.5 2 H64" stroke="#8a8a8a" stroke-width="1.4" stroke-dasharray="1.3 2.2"/></svg>
<div style="left:1099px;top:931px;width:487px;height:58px;background:#000030;"></div>
<div style="left:1251px;top:931px;width:183px;height:46.5px;background:#03031c;border-radius:0 0 6px 6px;"></div>
<div class="t" style="left:1260px;top:929px;line-height:17px;font-size:13.7px;font-family:'DejaVu Sans Mono',monospace;color:#f0f0f0;letter-spacing:-0.04px;">Freq: 432.544.25 MHz</div>
<div class="t" style="left:1260px;top:952px;line-height:17px;font-size:13.7px;font-family:'DejaVu Sans Mono',monospace;color:#f0f0f0;letter-spacing:-0.04px;">Span:     ±2.495 kHz</div>
<svg style="left:1099px;top:931px" width="487" height="58"><path d="M43.5 2 V56 M365.5 2 V56" stroke="#38c078" stroke-width="1" stroke-dasharray="2.5 2.5" fill="none"/></svg>
<div style="left:1099px;top:989px;width:487px;height:26px;background:#000;"></div>
<div style="left:1100.5px;top:989.5px;width:24px;height:25px;background:#e8e8e8;border:1px solid #b8b8b8;box-sizing:border-box;"></div>
<svg style="left:1100px;top:989px" width="25" height="26"><circle cx="12.5" cy="13" r="7.3" fill="#fff" stroke="#333" stroke-width="1.3"/><path d="M12 13 L16 9.8 V16.2Z M7.6 13 L11.6 9.8 V16.2Z" fill="#222"/></svg>
<div style="left:1126px;top:989px;width:85px;height:10px;background:linear-gradient(#585858,#1a1a1a);"></div>
<div style="left:1212px;top:989px;width:170.5px;height:26px;background:linear-gradient(#5e5e5e,#3a3a3a 45%,#2e2e2e);overflow:hidden;"><div style="left:5%;top:55%;width:90%;height:120%;border-radius:50%;background:radial-gradient(closest-side,rgba(200,190,10,0.95) 0,rgba(150,140,10,0.6) 50%,rgba(80,80,0,0) 100%);"></div></div>
<div style="left:1383px;top:989px;width:85px;height:10px;background:linear-gradient(#585858,#1a1a1a);"></div>
<div style="left:1211px;top:989px;width:1px;height:26px;background:#d0d0d0;"></div>
<div style="left:1382px;top:989px;width:1px;height:26px;background:#d0d0d0;"></div>
<svg style="left:1126px;top:989px" width="342" height="10"><path d="M7.0 0 v5 M24.1 0 v3 M41.2 0 v3 M58.3 0 v5 M75.4 0 v3 M92.5 0 v3 M109.6 0 v5 M126.7 0 v3 M143.8 0 v3 M160.9 0 v5 M178.0 0 v3 M195.1 0 v3 M212.2 0 v5 M229.3 0 v3 M246.4 0 v3 M263.5 0 v5 M280.6 0 v3 M297.7 0 v3 M314.8 0 v5 M331.9 0 v3 " stroke="#b0b0b0" stroke-width="1.1" fill="none"/></svg>
<div style="left:1296px;top:989px;width:1.3px;height:26px;background:#c8d418;"></div>
<div class="t" style="left:1129.00px;top:996.80px;line-height:17px;font-size:13px;color:#a8a8a8;font-family:'Liberation Sans',sans-serif;letter-spacing:-0.499px;">432.540</div>
<div class="t" style="left:1299.50px;top:996.80px;line-height:17px;font-size:13px;color:#b0b0b0;font-family:'Liberation Sans',sans-serif;letter-spacing:-0.332px;">432.545</div>
<div style="left:1469px;top:989.5px;width:36.5px;height:25px;background:#e6e6e6;border:1px solid #b8b8b8;box-sizing:border-box;"></div>
<div style="left:1508.3px;top:989.5px;width:49.5px;height:25px;background:#e6e6e6;border:1px solid #b8b8b8;box-sizing:border-box;"></div>
<div style="left:1560.3px;top:989.5px;width:24px;height:25px;background:#e6e6e6;border:1px solid #b8b8b8;box-sizing:border-box;"></div>
<svg style="left:1478px;top:994px" width="20" height="16"><rect x="1.5" y="5.5" width="15" height="8" fill="none" stroke="#444" stroke-width="1"/><path d="M3.5 8 H14.5 M3.5 10 H14.5 M5 12 H13" stroke="#444" stroke-width="1" stroke-dasharray="1 1"/><path d="M9 5.5 C9 3 12 3.5 13 1.5" fill="none" stroke="#444" stroke-width="0.9"/></svg>
<div class="t" style="left:1517.00px;top:994.00px;line-height:16px;font-size:12px;color:#111;font-family:'Liberation Sans',sans-serif;letter-spacing:-1.674px;">x2</div>
<svg style="left:1545px;top:998px" width="6" height="9"><path d="M1 0.5 L5 4.5 L1 8.5Z" fill="#111"/></svg>
<svg style="left:1560px;top:989px" width="25" height="26"><circle cx="12.3" cy="13" r="7.3" fill="#fff" stroke="#333" stroke-width="1.3"/><path d="M12.8 13 L8.8 9.8 V16.2Z M17.2 13 L13.2 9.8 V16.2Z" fill="#222"/></svg>
<div style="left:1586px;top:487px;width:1px;height:528px;background:#f0f0f0;"></div>
<div style="left:1587px;top:487px;width:38px;height:528px;background:#000;"></div>
<div style="left:1587px;top:488px;width:38px;height:28px;background:linear-gradient(#4a4a4a 0,#3a3a3a 12%,#2a2a2a 48%,#161616 52%,#101010 100%);border:1px solid #3c3c3c;box-sizing:border-box;"></div>
<div class="t" style="left:1593.80px;top:494.00px;line-height:16px;font-size:12px;color:#f0f0f0;font-family:'Liberation Sans',sans-serif;letter-spacing:0.105px;">Auto</div>
<div style="left:1589px;top:721px;width:34px;height:129px;background:linear-gradient(#f8e800 0,#fff020 4%,#fff4b0 7%,#fff 10%,#fff 30%,#e4eafc 36%,#b8c4f4 46%,#90a4ec 56%,#5870d8 64%,#3848b0 72%,#283088 80%,#181c60 86%,#0a0c38 91%,#04041c 100%);"></div>
<div style="left:1589px;top:849.5px;width:34px;height:1.2px;background:#f0f0f0;"></div>
<div style="left:1592px;top:741px;width:28px;height:18px;background:#868686;border-radius:4px;"></div>
<div style="left:1592px;top:788px;width:28px;height:18px;background:#4a58a8;border-radius:4px;"></div>
<div style="left:1592px;top:833px;width:28px;height:8px;background:#0a0e30;border-radius:4px 4px 0 0;opacity:0.9;"></div>
<div class="t" style="left:1600.16px;top:557.30px;line-height:12px;font-size:8.5px;color:#c8c8c8;font-family:'Liberation Sans',sans-serif;">-15</div>
<div class="t" style="left:1600.16px;top:604.00px;line-height:12px;font-size:8.5px;color:#c8c8c8;font-family:'Liberation Sans',sans-serif;">-30</div>
<div class="t" style="left:1600.16px;top:650.70px;line-height:12px;font-size:8.5px;color:#c8c8c8;font-family:'Liberation Sans',sans-serif;">-45</div>
<div class="t" style="left:1600.16px;top:697.40px;line-height:12px;font-size:8.5px;color:#c8c8c8;font-family:'Liberation Sans',sans-serif;">-60</div>
<div class="t" style="left:1600.16px;top:744.10px;line-height:12px;font-size:8.5px;color:#d8d8e0;font-family:'Liberation Sans',sans-serif;">-75</div>
<div class="t" style="left:1600.16px;top:790.80px;line-height:12px;font-size:8.5px;color:#d8d8e0;font-family:'Liberation Sans',sans-serif;">-90</div>
<div class="t" style="left:1597.79px;top:837.50px;line-height:12px;font-size:8.5px;color:#c8c8c8;font-family:'Liberation Sans',sans-serif;">-105</div>
<div class="t" style="left:1597.79px;top:884.20px;line-height:12px;font-size:8.5px;color:#c8c8c8;font-family:'Liberation Sans',sans-serif;">-120</div>
<div class="t" style="left:1597.79px;top:930.90px;line-height:12px;font-size:8.5px;color:#c8c8c8;font-family:'Liberation Sans',sans-serif;">-135</div>
<div class="t" style="left:1597.79px;top:977.60px;line-height:12px;font-size:8.5px;color:#c8c8c8;font-family:'Liberation Sans',sans-serif;">-150</div>
<div style="left:1630px;top:487px;width:284px;height:20px;background:linear-gradient(#bccfdc,#cfdde9 55%,#dbe6f1);"></div>
<div class="t" style="left:1634.00px;top:490.30px;line-height:14px;font-size:11px;color:#111;font-family:'Liberation Sans',sans-serif;letter-spacing:0.018px;">Transmit</div>
<svg style="left:1882.8px;top:495.25px" width="9" height="4.5"><path d="M0 0 H9 L4.5 4.5Z" fill="#111"/></svg>
<svg style="left:1897.8px;top:491px" width="12" height="12"><path d="M2 2 L10 10 M10 2 L2 10" stroke="#111" stroke-width="1.5" fill="none"/></svg>
<div style="left:1630px;top:508px;width:267px;height:264px;background:#000;"></div>
<div class="t" style="left:1634.00px;top:508.20px;line-height:15px;font-size:11.5px;color:#f0e020;font-family:'Liberation Sans',sans-serif;letter-spacing:-1.695px;">TX</div>
<div class="t" style="left:1819.50px;top:507.70px;line-height:16px;font-size:12px;color:#f0e020;font-family:'Liberation Sans',sans-serif;letter-spacing:-0.157px;">200 - 3000 Hz</div>
<div class="t" style="left:1638px;top:534px;line-height:36px;font-size:31px;font-family:'DejaVu Sans Mono',monospace;color:#fff;letter-spacing:-0.56px;-webkit-text-stroke:0.45px #fff;">2.400.051.800</div>
<div style="left:1898px;top:508px;width:16px;height:508px;background:#f0f0f0;"></div>
<div style="left:1898px;top:525px;width:15px;height:322px;background:#cdcdcd;"></div>
<svg style="left:1899.5px;top:511px" width="12" height="10"><path d="M2.4 6.8 L6 3.2 L9.6 6.8" fill="none" stroke="#505050" stroke-width="2.0"/></svg>
<svg style="left:1899.5px;top:1003px" width="12" height="10"><path d="M2.4 3.2 L6 6.8 L9.6 3.2" fill="none" stroke="#505050" stroke-width="2.0"/></svg>
<div style="left:1639px;top:592px;width:69px;height:23px;background:linear-gradient(#3a3a3a 0,#2c2c2c 40%,#060606 44%,#000 100%);border:1px solid #5a5a5a;box-sizing:border-box;overflow:hidden;"></div>
<div class="t" style="left:1654.50px;top:596.10px;line-height:14px;font-size:11px;color:#7c7c7c;font-family:'Liberation Sans',sans-serif;letter-spacing:-0.799px;">Sync RX</div>
<div style="left:1717px;top:592px;width:69px;height:23px;background:linear-gradient(#3a3a3a 0,#2c2c2c 40%,#060606 44%,#000 100%);border:1px solid #5a5a5a;box-sizing:border-box;overflow:hidden;"></div>
<div class="t" style="left:1731.00px;top:596.10px;line-height:14px;font-size:11px;color:#7c7c7c;font-family:'Liberation Sans',sans-serif;letter-spacing:-0.856px;">RX ► TX</div>
<div style="left:1789px;top:592px;width:69px;height:23px;background:linear-gradient(#3a3a3a 0,#2c2c2c 40%,#060606 44%,#000 100%);border:1px solid #5a5a5a;box-sizing:border-box;overflow:hidden;"></div>
<div class="t" style="left:1803.00px;top:596.10px;line-height:14px;font-size:11px;color:#7c7c7c;font-family:'Liberation Sans',sans-serif;letter-spacing:-0.889px;">TX ► RX</div>
<div style="left:1639px;top:633px;width:69px;height:23px;background:linear-gradient(#3a3a3a 0,#2c2c2c 40%,#060606 44%,#000 100%);border:1px solid #5a5a5a;box-sizing:border-box;overflow:hidden;"></div>
<div class="t" style="left:1654.50px;top:637.10px;line-height:14px;font-size:11px;color:#7c7c7c;font-family:'Liberation Sans',sans-serif;letter-spacing:-0.799px;">Sync RX</div>
<div style="left:1717px;top:633px;width:30px;height:23px;background:linear-gradient(#3a3a3a 0,#2c2c2c 40%,#060606 44%,#000 100%);border:1px solid #5a5a5a;box-sizing:border-box;overflow:hidden;"></div>
<div class="t" style="left:1722.08px;top:637.10px;line-height:14px;font-size:10.5px;color:#7c7c7c;font-family:'Liberation Sans',sans-serif;">LSB</div>
<div style="left:1750.05px;top:633px;width:30px;height:23px;background:linear-gradient(#3a3a3a 0,#2c2c2c 40%,#060606 44%,#000 100%);border:1px solid #5a5a5a;box-sizing:border-box;overflow:hidden;"><div style="left:6%;top:44%;width:88%;height:118%;border-radius:50%;background:radial-gradient(closest-side,#a8a212 0,#8a8614 35%,#5a5a10 65%,rgba(40,40,0,0) 100%);"></div></div>
<div class="t" style="left:1754.26px;top:637.10px;line-height:14px;font-size:10.5px;color:#7c7c7c;font-family:'Liberation Sans',sans-serif;">USB</div>
<div style="left:1783.1px;top:633px;width:30px;height:23px;background:linear-gradient(#3a3a3a 0,#2c2c2c 40%,#060606 44%,#000 100%);border:1px solid #5a5a5a;box-sizing:border-box;overflow:hidden;"></div>
<div class="t" style="left:1790.22px;top:637.10px;line-height:14px;font-size:10.5px;color:#7c7c7c;font-family:'Liberation Sans',sans-serif;">AM</div>
<div style="left:1816.15px;top:633px;width:30px;height:23px;background:linear-gradient(#3a3a3a 0,#2c2c2c 40%,#060606 44%,#000 100%);border:1px solid #5a5a5a;box-sizing:border-box;overflow:hidden;"></div>
<div class="t" style="left:1823.57px;top:637.10px;line-height:14px;font-size:10.5px;color:#7c7c7c;font-family:'Liberation Sans',sans-serif;">FM</div>
<div style="left:1849.2px;top:633px;width:30px;height:23px;background:linear-gradient(#3a3a3a 0,#2c2c2c 40%,#060606 44%,#000 100%);border:1px solid #5a5a5a;box-sizing:border-box;overflow:hidden;"></div>
<div class="t" style="left:1855.45px;top:637.10px;line-height:14px;font-size:10.5px;color:#7c7c7c;font-family:'Liberation Sans',sans-serif;">CW</div>
<div style="left:1639px;top:673px;width:60px;height:52px;background:linear-gradient(#3a3a3a 0,#2c2c2c 40%,#060606 44%,#000 100%);border:1px solid #5a5a5a;box-sizing:border-box;overflow:hidden;"><div style="left:6%;top:44%;width:88%;height:118%;border-radius:50%;background:radial-gradient(closest-side,#a8a212 0,#8a8614 35%,#5a5a10 65%,rgba(40,40,0,0) 100%);"></div></div>
<div class="t" style="left:1659.50px;top:689.50px;line-height:20px;font-size:15px;color:#fff;font-family:'Liberation Sans',sans-serif;letter-spacing:-0.168px;font-weight:bold;">TX</div>
<div style="left:1708px;top:673px;width:45px;height:23px;background:linear-gradient(#3a3a3a 0,#2c2c2c 40%,#060606 44%,#000 100%);border:1px solid #5a5a5a;box-sizing:border-box;overflow:hidden;"></div>
<div class="t" style="left:1719.50px;top:677.10px;line-height:14px;font-size:11px;color:#e8e8e8;font-family:'Liberation Sans',sans-serif;letter-spacing:-0.618px;">Tone</div>
<div style="left:1756px;top:673px;width:45px;height:23px;background:linear-gradient(#3a3a3a 0,#2c2c2c 40%,#060606 44%,#000 100%);border:1px solid #5a5a5a;box-sizing:border-box;overflow:hidden;"></div>
<div class="t" style="left:1767.00px;top:677.10px;line-height:14px;font-size:11px;color:#e8e8e8;font-family:'Liberation Sans',sans-serif;letter-spacing:-0.555px;">Tune</div>
<div style="left:1804px;top:673px;width:24px;height:23px;background:linear-gradient(#3a3a3a 0,#2c2c2c 40%,#060606 44%,#000 100%);border:1px solid #5a5a5a;box-sizing:border-box;overflow:hidden;"></div>
<div class="t" style="left:1811.80px;top:679.10px;line-height:10px;font-size:8px;color:#e8e8e8;font-family:'Liberation Sans',sans-serif;">•••</div>
<div class="t" style="left:1840.00px;top:677.50px;line-height:14px;font-size:11px;color:#e8e8e8;font-family:'DejaVu Sans',sans-serif;letter-spacing:-0.550px;">14:43</div>
<div class="t" style="left:1645.00px;top:744.70px;line-height:16px;font-size:12px;color:#f0f0f0;font-family:'Liberation Sans',sans-serif;letter-spacing:-0.751px;">Drive</div>
<div style="left:1683px;top:751.7px;width:156px;height:2px;background:#d8d8d8;border-radius:1px;"></div>
<div style="left:1773px;top:742px;width:13.5px;height:18.5px;background:linear-gradient(#c8c8c8,#8a8a8a);border:1px solid #6a6a6a;border-radius:3px;box-sizing:border-box;"></div>
<div style="left:1777.5px;top:746px;width:1px;height:10px;background:#555;"></div>
<div style="left:1780.5px;top:746px;width:1px;height:10px;background:#555;"></div>
<div class="t" style="left:1864.00px;top:745.20px;line-height:16px;font-size:12px;color:#f0f0f0;font-family:'Liberation Sans',sans-serif;letter-spacing:-1.848px;">62</div>
<div style="left:1630px;top:772px;width:267px;height:18px;background:linear-gradient(90deg,#fff 0,#fff 23%,#f2f2f2 23.2%,#f0f0f0 48%,#ececec 48.2%,#eaeaea 75%,#e4e4e4 75.2%,#e2e2e2 100%);"></div>
<div class="t" style="left:1634.00px;top:775.30px;line-height:15px;font-size:11.5px;color:#0a7ad0;font-family:'Liberation Sans',sans-serif;letter-spacing:-0.169px;font-weight:bold;">Meter</div>
<div style="left:1883px;top:776px;width:9px;height:9px;background:#f4f4f4;border:1px solid #b0b0b0;box-sizing:border-box;"></div>
<svg style="left:1885.0px;top:779.0px" width="5" height="3"><path d="M0 3 H5 L2.5 0Z" fill="#111"/></svg>
<div style="left:1630px;top:790px;width:267px;height:39.7px;background:#000;"></div>
<div class="t" style="left:1637.00px;top:803.50px;line-height:16px;font-size:12px;color:#f0f0f0;font-family:'Liberation Sans',sans-serif;letter-spacing:-2.172px;font-style:italic;">ALC</div>
<svg style="left:1660px;top:795px" width="236" height="32"><path d="M7.6 13.7 H228" stroke="#8a8a8a" stroke-width="1.1"/><path d="M121.7 13.7 H197.5" stroke="#e81010" stroke-width="2"/><circle cx="8" cy="13.7" r="1.2" fill="#aaa"/><text x="8" y="25.5" font-size="7.5" font-weight="bold" font-style="italic" fill="#e0e0e0" text-anchor="middle" font-family="DejaVu Sans Mono,monospace">0</text><circle cx="46" cy="13.7" r="1.2" fill="#aaa"/><text x="46" y="25.5" font-size="7.5" font-weight="bold" font-style="italic" fill="#e0e0e0" text-anchor="middle" font-family="DejaVu Sans Mono,monospace">25</text><circle cx="83.9" cy="13.7" r="1.2" fill="#aaa"/><text x="83.9" y="25.5" font-size="7.5" font-weight="bold" font-style="italic" fill="#e0e0e0" text-anchor="middle" font-family="DejaVu Sans Mono,monospace">50</text><circle cx="121.7" cy="13.7" r="1.2" fill="#aaa"/><text x="121.7" y="25.5" font-size="7.5" font-weight="bold" font-style="italic" fill="#e0e0e0" text-anchor="middle" font-family="DejaVu Sans Mono,monospace">75</text><circle cx="159.6" cy="13.7" r="1.2" fill="#aaa"/><text x="159.6" y="25.5" font-size="7.5" font-weight="bold" font-style="italic" fill="#e0e0e0" text-anchor="middle" font-family="DejaVu Sans Mono,monospace">100</text><circle cx="197.5" cy="13.7" r="1.2" fill="#aaa"/><text x="197.5" y="25.5" font-size="7.5" font-weight="bold" font-style="italic" fill="#e0e0e0" text-anchor="middle" font-family="DejaVu Sans Mono,monospace">125</text><path d="M159.6 3 V15" stroke="#d8d8d8" stroke-width="1.1"/></svg>
<div style="left:1630px;top:831px;width:267px;height:17px;background:linear-gradient(90deg,#fff 0,#fff 23%,#f2f2f2 23.2%,#f0f0f0 48%,#ececec 48.2%,#eaeaea 75%,#e4e4e4 75.2%,#e2e2e2 100%);"></div>
<div class="t" style="left:1634.00px;top:833.80px;line-height:15px;font-size:11.5px;color:#0a7ad0;font-family:'Liberation Sans',sans-serif;letter-spacing:-0.340px;font-weight:bold;">Microphone: Gain 40, Proc 50</div>
<svg style="left:1884.0px;top:836.25px" width="6" height="3.5"><path d="M0 3.5 H6 L3.0 0Z" fill="#111"/></svg>
<div style="left:1634px;top:852px;width:79px;height:24px;background:#cce4f7;border:1px solid #0078d7;box-sizing:border-box;"></div>
<div class="t" style="left:1656.50px;top:856.00px;line-height:16px;font-size:12px;color:#000;font-family:'Liberation Sans',sans-serif;letter-spacing:-0.934px;">Normal</div>
<div style="left:1718px;top:852px;width:79px;height:24px;background:#e1e1e1;border:1px solid #adadad;box-sizing:border-box;"></div>
<div class="t" style="left:1750.50px;top:856.00px;line-height:16px;font-size:12px;color:#000;font-family:'Liberation Sans',sans-serif;letter-spacing:-2.670px;">DX</div>
<div style="left:1802px;top:852px;width:79px;height:24px;background:#e1e1e1;border:1px solid #adadad;box-sizing:border-box;"></div>
<div class="t" style="left:1827.50px;top:856.00px;line-height:16px;font-size:12px;color:#000;font-family:'Liberation Sans',sans-serif;letter-spacing:-0.503px;">Other</div>
<div style="left:1634px;top:888px;width:34px;height:24px;background:#e1e1e1;border:1px solid #adadad;box-sizing:border-box;"></div>
<svg style="left:1641px;top:891px" width="20" height="18"><path d="M3.5 15.5 L10 8.5" stroke="#777" stroke-width="2"/><ellipse cx="12.5" cy="6" rx="3.2" ry="4.2" transform="rotate(42 12.5 6)" fill="#888" stroke="#555" stroke-width="0.8"/></svg>
<div style="left:1673px;top:888px;width:211px;height:24px;background:#e4e4e4;border:1px solid #adadad;box-sizing:border-box;"></div>
<div class="t" style="left:1676.50px;top:892.00px;line-height:16px;font-size:12px;color:#000;font-family:'Liberation Sans',sans-serif;letter-spacing:-0.565px;">Mikrofon (USB Advanced Audio Devi...</div>
<svg style="left:1869.3px;top:899.25px" width="8" height="4.5"><path d="M0 0 H8 L4.0 4.5Z" fill="#111"/></svg>
<div style="left:1634px;top:917px;width:34px;height:24px;background:#cce4f7;border:1px solid #0078d7;box-sizing:border-box;"></div>
<div class="t" style="left:1640.50px;top:921.00px;line-height:16px;font-size:12px;color:#000;font-family:'Liberation Sans',sans-serif;letter-spacing:-1.225px;">Proc</div>
<div style="left:1673px;top:917px;width:34px;height:24px;background:#e1e1e1;border:1px solid #adadad;box-sizing:border-box;"></div>
<div class="t" style="left:1680.00px;top:921.00px;line-height:16px;font-size:12px;color:#000;font-family:'Liberation Sans',sans-serif;letter-spacing:-2.671px;">VOX</div>
<div style="left:1712px;top:917px;width:97px;height:24px;background:#e1e1e1;border:1px solid #adadad;box-sizing:border-box;"></div>
<div class="t" style="left:1735.50px;top:921.00px;line-height:16px;font-size:12px;color:#000;font-family:'Liberation Sans',sans-serif;letter-spacing:-0.724px;">Digital</div>
<svg style="left:1794.0px;top:928.25px" width="8" height="4.5"><path d="M0 0 H8 L4.0 4.5Z" fill="#111"/></svg>
<div style="left:1814px;top:917px;width:70px;height:24px;background:#e1e1e1;border:1px solid #adadad;box-sizing:border-box;"></div>
<div class="t" style="left:1842.00px;top:921.00px;line-height:16px;font-size:12px;color:#000;font-family:'Liberation Sans',sans-serif;letter-spacing:-0.837px;">Record</div>
<svg style="left:1819px;top:921px" width="18" height="17"><circle cx="8.5" cy="8.5" r="6.3" fill="#fff" stroke="#444" stroke-width="1.1"/><circle cx="8.5" cy="8.5" r="2.9" fill="#e87818"/></svg>
<div class="t" style="left:1639.00px;top:961.30px;line-height:16px;font-size:12px;color:#000;font-family:'Liberation Sans',sans-serif;letter-spacing:-1.116px;">Gain</div>
<div style="left:1676px;top:968.8px;width:173px;height:4px;background:linear-gradient(#c4c4c4,#f4f4f4);border:1px solid #c8c8c8;border-radius:2px;box-sizing:border-box;"></div>
<div style="left:1676px;top:968.8px;width:63.3px;height:4px;background:#d2d2d2;border-radius:2px;"></div>
<div style="left:1739.3px;top:959.8px;width:13px;height:18px;background:linear-gradient(#f4f4f4,#d8d8d8);border:1px solid #9a9a9a;border-radius:3px;box-sizing:border-box;"></div>
<div style="left:1743.8px;top:963.8px;width:1px;height:9px;background:#9a9a9a;"></div>
<div style="left:1746.8px;top:963.8px;width:1px;height:9px;background:#9a9a9a;"></div>
<div class="t" style="left:1872.60px;top:961.80px;line-height:16px;font-size:12px;color:#000;font-family:'Liberation Sans',sans-serif;letter-spacing:-1.348px;">40</div>
<div class="t" style="left:1639.00px;top:991.00px;line-height:16px;font-size:12px;color:#000;font-family:'Liberation Sans',sans-serif;letter-spacing:-0.891px;">Proc</div>
<div style="left:1676px;top:998.5px;width:173px;height:4px;background:linear-gradient(#c4c4c4,#f4f4f4);border:1px solid #c8c8c8;border-radius:2px;box-sizing:border-box;"></div>
<div style="left:1676px;top:998.5px;width:80px;height:4px;background:#d2d2d2;border-radius:2px;"></div>
<div style="left:1756px;top:989.5px;width:13px;height:18px;background:linear-gradient(#f4f4f4,#d8d8d8);border:1px solid #9a9a9a;border-radius:3px;box-sizing:border-box;"></div>
<div style="left:1760.5px;top:993.5px;width:1px;height:9px;background:#9a9a9a;"></div>
<div style="left:1763.5px;top:993.5px;width:1px;height:9px;background:#9a9a9a;"></div>
<div class="t" style="left:1872.60px;top:991.50px;line-height:16px;font-size:12px;color:#000;font-family:'Liberation Sans',sans-serif;letter-spacing:-1.348px;">50</div>
</div></body></html>
